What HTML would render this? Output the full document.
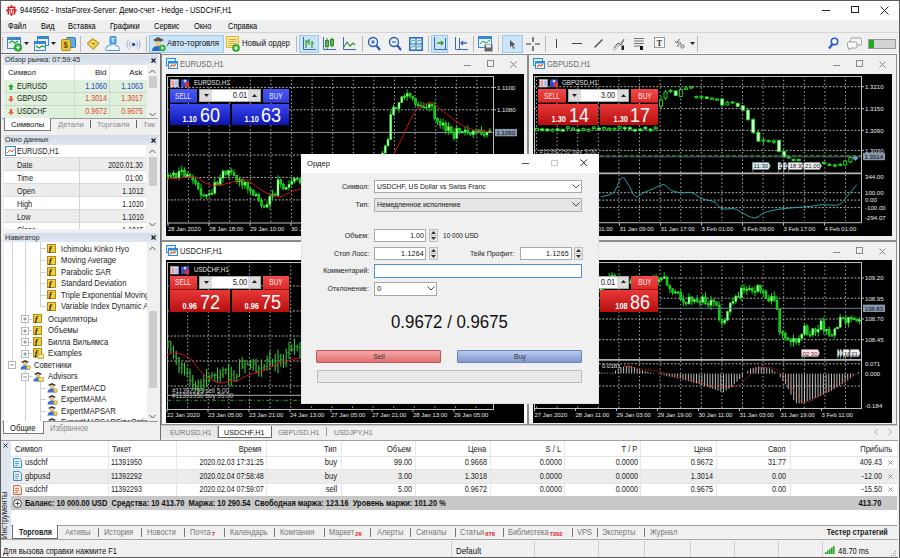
<!DOCTYPE html>
<html><head><meta charset="utf-8">
<style>
*{box-sizing:border-box;margin:0;padding:0}
html,body{width:900px;height:558px;overflow:hidden;background:#f0f0f0;font-family:"Liberation Sans",sans-serif;font-size:8px;color:#000;position:relative}
.a{position:absolute}
.t{position:absolute;white-space:nowrap;line-height:1}
</style></head><body>
<div class="a" style="left:0px;top:0px;width:900px;height:558px;background:#f0f0f0;"></div>
<div class="a" style="left:0px;top:0px;width:900px;height:20px;background:#ffffff;border-top:1px solid #5a5a5a;"></div>
<div class="a" style="left:0px;top:0px;width:1px;height:558px;background:#5a5a5a;"></div>
<div class="a" style="left:899px;top:0px;width:1px;height:558px;background:#5a5a5a;"></div>
<svg class="a" style="left:6px;top:5px;" width="11" height="11" viewBox="0 0 11 11"><circle cx="5.5" cy="5.5" r="4.3" fill="#d81e1e"/><g stroke="#d81e1e" stroke-width="1.6"><line x1="5.5" y1="5.5" x2="10.80" y2="5.50"/><line x1="5.5" y1="5.5" x2="9.25" y2="9.25"/><line x1="5.5" y1="5.5" x2="5.50" y2="10.80"/><line x1="5.5" y1="5.5" x2="1.75" y2="9.25"/><line x1="5.5" y1="5.5" x2="0.20" y2="5.50"/><line x1="5.5" y1="5.5" x2="1.75" y2="1.75"/><line x1="5.5" y1="5.5" x2="5.50" y2="0.20"/><line x1="5.5" y1="5.5" x2="9.25" y2="1.75"/></g><path d="M3.2 3.6h4.6M5.5 3.6v4.6M3.8 5v4M7.2 5v4" stroke="#fff" stroke-width="1"/></svg>
<div class="t" style="top:6.18px;font-size:8.6px;color:#000;left:20px;transform:scaleX(0.865);transform-origin:0 0;">9449562 - InstaForex-Server: Демо-счет - Hedge - USDCHF,H1</div>
<div class="a" style="left:822px;top:10px;width:8px;height:1px;background:#222;"></div>
<div class="a" style="left:851px;top:6px;width:8px;height:7px;border:1px solid #222;"></div>
<svg class="a" style="left:880px;top:6px;" width="9" height="9" viewBox="0 0 9 9"><path d="M0.5 0.5L8.5 8.5M8.5 0.5L0.5 8.5" stroke="#222" stroke-width="1"/></svg>
<div class="a" style="left:1px;top:20px;width:897px;height:13px;background:#efefef;"></div>
<div class="t" style="top:22.71px;font-size:8.2px;color:#000;left:8px;transform:scaleX(0.91);transform-origin:0 0;">Файл</div>
<div class="t" style="top:22.71px;font-size:8.2px;color:#000;left:40.5px;transform:scaleX(0.91);transform-origin:0 0;">Вид</div>
<div class="t" style="top:22.71px;font-size:8.2px;color:#000;left:67.5px;transform:scaleX(0.91);transform-origin:0 0;">Вставка</div>
<div class="t" style="top:22.71px;font-size:8.2px;color:#000;left:110px;transform:scaleX(0.91);transform-origin:0 0;">Графики</div>
<div class="t" style="top:22.71px;font-size:8.2px;color:#000;left:154px;transform:scaleX(0.91);transform-origin:0 0;">Сервис</div>
<div class="t" style="top:22.71px;font-size:8.2px;color:#000;left:194px;transform:scaleX(0.91);transform-origin:0 0;">Окно</div>
<div class="t" style="top:22.71px;font-size:8.2px;color:#000;left:227.5px;transform:scaleX(0.91);transform-origin:0 0;">Справка</div>
<div class="a" style="left:1px;top:32px;width:897px;height:1px;background:#d5d5d5;"></div>
<div class="a" style="left:1px;top:33px;width:897px;height:20px;background:#f0f0f0;"></div>
<div class="a" style="left:1px;top:53px;width:897px;height:1px;background:#6e6e6e;"></div>
<div class="a" style="left:2px;top:37px;width:1px;height:1px;background:#a0a0a0;"></div>
<div class="a" style="left:2px;top:39px;width:1px;height:1px;background:#a0a0a0;"></div>
<div class="a" style="left:2px;top:41px;width:1px;height:1px;background:#a0a0a0;"></div>
<div class="a" style="left:2px;top:43px;width:1px;height:1px;background:#a0a0a0;"></div>
<div class="a" style="left:2px;top:45px;width:1px;height:1px;background:#a0a0a0;"></div>
<div class="a" style="left:2px;top:47px;width:1px;height:1px;background:#a0a0a0;"></div>
<div class="a" style="left:2px;top:49px;width:1px;height:1px;background:#a0a0a0;"></div>
<div class="a" style="left:80px;top:36px;width:1px;height:16px;background:#b8b8b8;"></div>
<div class="a" style="left:146px;top:36px;width:1px;height:16px;background:#b8b8b8;"></div>
<div class="a" style="left:296px;top:36px;width:1px;height:16px;background:#b8b8b8;"></div>
<div class="a" style="left:362px;top:36px;width:1px;height:16px;background:#b8b8b8;"></div>
<div class="a" style="left:428px;top:36px;width:1px;height:16px;background:#b8b8b8;"></div>
<div class="a" style="left:473px;top:36px;width:1px;height:16px;background:#b8b8b8;"></div>
<div class="a" style="left:545px;top:36px;width:1px;height:16px;background:#b8b8b8;"></div>
<div class="a" style="left:697px;top:36px;width:1px;height:16px;background:#b8b8b8;"></div>
<div class="a" style="left:498px;top:36px;width:1px;height:1px;background:#a0a0a0;"></div>
<div class="a" style="left:498px;top:38px;width:1px;height:1px;background:#a0a0a0;"></div>
<div class="a" style="left:498px;top:40px;width:1px;height:1px;background:#a0a0a0;"></div>
<div class="a" style="left:498px;top:42px;width:1px;height:1px;background:#a0a0a0;"></div>
<div class="a" style="left:498px;top:44px;width:1px;height:1px;background:#a0a0a0;"></div>
<div class="a" style="left:498px;top:46px;width:1px;height:1px;background:#a0a0a0;"></div>
<div class="a" style="left:498px;top:48px;width:1px;height:1px;background:#a0a0a0;"></div>
<div class="a" style="left:498px;top:50px;width:1px;height:1px;background:#a0a0a0;"></div>
<div class="a" style="left:149px;top:35px;width:75px;height:18px;background:#cce4f7;border:1px solid #99c9ef;"></div>
<div class="a" style="left:299px;top:35px;width:20px;height:18px;background:#cce4f7;border:1px solid #99c9ef;"></div>
<div class="a" style="left:431px;top:35px;width:17px;height:18px;background:#cce4f7;border:1px solid #99c9ef;"></div>
<div class="a" style="left:502px;top:35px;width:21px;height:18px;background:#cce4f7;border:1px solid #99c9ef;"></div>
<svg class="a" style="left:7px;top:36px;" width="17" height="16" viewBox="0 0 17 16"><rect x="0.5" y="1.5" width="13" height="11" fill="#e8f2fb" stroke="#3a86d0"/><rect x="0.5" y="1.5" width="13" height="2.5" fill="#3a86d0"/><path d="M2 7l3-2 3 2 3-2" stroke="#2aa02a" fill="none" stroke-width="1.2"/><circle cx="11" cy="11.5" r="3.8" fill="#2db52d" stroke="#1e8a1e" stroke-width=".6"/><path d="M9 11.5h4M11 9.5v4" stroke="#fff" stroke-width="1.2"/></svg>
<svg class="a" style="left:24px;top:42px;" width="6" height="3" viewBox="0 0 6 3"><path d="M0 0h5l-2.5 3z" fill="#222"/></svg>
<svg class="a" style="left:34px;top:36px;" width="16" height="16" viewBox="0 0 16 16"><rect x="3.5" y="0.5" width="11" height="9" fill="#e8f2fb" stroke="#3a86d0"/><rect x="3.5" y="0.5" width="11" height="2.5" fill="#3a86d0"/><rect x="0.5" y="5.5" width="11" height="9" fill="#e8f2fb" stroke="#3a86d0"/><rect x="0.5" y="5.5" width="11" height="2.5" fill="#3a86d0"/><path d="M2 10l3 2 3-2 3 1" stroke="#2aa02a" fill="none" stroke-width="1.2"/></svg>
<svg class="a" style="left:51px;top:42px;" width="6" height="3" viewBox="0 0 6 3"><path d="M0 0h5l-2.5 3z" fill="#222"/></svg>
<svg class="a" style="left:61px;top:36px;" width="15" height="16" viewBox="0 0 15 16"><rect x="5.5" y="1.5" width="9" height="10" rx="1" fill="#5aaee8" stroke="#2a78c0"/><rect x="0.5" y="3.5" width="9" height="11" rx="1.5" fill="#f4c838" stroke="#b88a10"/><text x="2.2" y="12.3" font-size="8.5" font-weight="bold" fill="#6a4a00" font-family="Liberation Sans">$</text></svg>
<svg class="a" style="left:86px;top:37px;" width="14" height="14" viewBox="0 0 14 14"><path d="M1 6.5L6.5 1.5 13 6 7.5 12.5z" fill="#e8c030" stroke="#a07a10" stroke-width=".8"/><path d="M3 7l4-3.5 4 2.8-4 4z" fill="#f8e070"/><path d="M5.5 6.5h3l-1 1.5" stroke="#8a6a00" stroke-width=".9" fill="none"/></svg>
<svg class="a" style="left:105px;top:36px;" width="16" height="16" viewBox="0 0 16 16"><rect x="5" y="0.5" width="6" height="7.5" rx="1" fill="#5ab0f0" stroke="#2a78c8" stroke-width=".8"/><path d="M6.5 2.5h3M8 2.5v4" stroke="#fff" stroke-width=".8"/><path d="M1.5 14.5c-1.5 0-1.5-3 .5-3.3.3-2 2.5-2.7 3.8-1.7 1-2 4.5-2 5.2.3 2-.3 3.5 1.3 3 3 1.2.4 1 1.7 0 1.7z" fill="#eef6fd" stroke="#3a8ad8" stroke-width=".9"/></svg>
<svg class="a" style="left:126px;top:37px;" width="15" height="15" viewBox="0 0 15 15"><g fill="none" stroke="#8aa8e0" stroke-width=".9"><path d="M3 2.5a7 7 0 000 10M12 2.5a7 7 0 010 10"/><path d="M4.8 4.5a4 4 0 000 6M10.2 4.5a4 4 0 010 6"/></g><circle cx="7.5" cy="7.5" r="1.8" fill="#2a5ad0"/></svg>
<svg class="a" style="left:151px;top:36px;" width="15" height="16" viewBox="0 0 15 16"><path d="M2 4l5-3 6 3-6 3z" fill="#555"/><circle cx="7" cy="8" r="3" fill="#f0c890"/><path d="M1 15c0-4 3-5 6-5s5 1 6 5z" fill="#2a6ad0"/><circle cx="11.5" cy="12" r="3.3" fill="#2ab52a"/><path d="M10.5 10.3l2.8 1.7-2.8 1.7z" fill="#fff"/></svg>
<div class="t" style="top:40.41px;font-size:8.2px;color:#111;left:167px;transform:scaleX(0.96);transform-origin:0 0;">Авто-торговля</div>
<svg class="a" style="left:226px;top:36px;" width="15" height="16" viewBox="0 0 15 16"><rect x="0.5" y="0.5" width="12" height="11" fill="#fbe9a0" stroke="#d9b640"/><path d="M2.5 3.5h8M2.5 5.5h8M2.5 7.5h8M2.5 9.5h6" stroke="#c8a030" stroke-width=".8"/><circle cx="10" cy="12" r="3.6" fill="#2ab52a" stroke="#1e8a1e" stroke-width=".5"/><path d="M8 12h4M10 10v4" stroke="#fff" stroke-width="1.2"/></svg>
<div class="t" style="top:40.41px;font-size:8.2px;color:#111;left:242px;transform:scaleX(0.95);transform-origin:0 0;">Новый ордер</div>
<svg class="a" style="left:302px;top:37px;" width="14" height="14" viewBox="0 0 14 14"><path d="M1.5 0v12.5H14" stroke="#3a6ac0" stroke-width="1" fill="none"/><path d="M4 3v8M4 5h2M7 2v6M7 4h-2M10 4v7M10 6h2" stroke="#2a9a2a" stroke-width="1.2"/></svg>
<svg class="a" style="left:322px;top:37px;" width="14" height="14" viewBox="0 0 14 14"><path d="M1.5 0v12.5H14" stroke="#3a6ac0" stroke-width="1" fill="none"/><rect x="3.5" y="3.5" width="3" height="6" fill="#8fd88f" stroke="#2a8a2a"/><rect x="8.5" y="2.5" width="3" height="6" fill="#8fd88f" stroke="#2a8a2a"/><path d="M5 1v12M10 0.5v10" stroke="#2a8a2a"/></svg>
<svg class="a" style="left:342px;top:37px;" width="14" height="14" viewBox="0 0 14 14"><path d="M1.5 0v12.5H14" stroke="#3a6ac0" stroke-width="1" fill="none"/><path d="M2 10l3-5 3 4 3-3 2 2" stroke="#2a9a2a" stroke-width="1.2" fill="none"/></svg>
<svg class="a" style="left:367px;top:36px;" width="14" height="16" viewBox="0 0 14 16"><circle cx="6" cy="6" r="4.5" fill="#eaf3fc" stroke="#2a5ab0" stroke-width="1.3"/><path d="M9 9l4 5" stroke="#2a5ab0" stroke-width="2.2"/><path d="M4 6h4M6 4v4" stroke="#2a5ab0" stroke-width="1.1"/></svg>
<svg class="a" style="left:388px;top:36px;" width="14" height="16" viewBox="0 0 14 16"><circle cx="6" cy="6" r="4.5" fill="#eaf3fc" stroke="#2a5ab0" stroke-width="1.3"/><path d="M9 9l4 5" stroke="#2a5ab0" stroke-width="2.2"/><path d="M4 6h4" stroke="#2a5ab0" stroke-width="1.1"/></svg>
<svg class="a" style="left:409px;top:37px;" width="14" height="14" viewBox="0 0 14 14"><rect x="0" y="0" width="14" height="14" fill="#2a6ac8"/><rect x="1.5" y="1.5" width="5" height="5" fill="#d8ecfc"/><rect x="7.5" y="1.5" width="5" height="5" fill="#d8ecfc"/><rect x="1.5" y="7.5" width="5" height="5" fill="#d8ecfc"/><rect x="7.5" y="7.5" width="5" height="5" fill="#d8ecfc"/><path d="M2 5l2-2 2 1M8 5l2-2 2 1M2 11l2-2 2 1M8 11l2-2 2 1" stroke="#2a9a2a" stroke-width=".8" fill="none"/></svg>
<svg class="a" style="left:433px;top:37px;" width="14" height="14" viewBox="0 0 14 14"><path d="M1.5 0v12.5H14M12.5 1v11" stroke="#3a6ac0" stroke-width="1" fill="none"/><path d="M4 6h6M8 4l2 2-2 2" stroke="#2a9a2a" stroke-width="1.3" fill="none"/></svg>
<svg class="a" style="left:454px;top:37px;" width="14" height="14" viewBox="0 0 14 14"><path d="M1.5 0v12.5H14M5.5 1v11" stroke="#3a6ac0" stroke-width="1" fill="none"/><path d="M7 6h6M9 4l-2 2 2 2" stroke="#3a6ac0" stroke-width="1.3" fill="none"/></svg>
<svg class="a" style="left:478px;top:36px;" width="15" height="16" viewBox="0 0 15 16"><rect x="0.5" y="0.5" width="13" height="11" fill="#e8f2fb" stroke="#3a86d0"/><rect x="0.5" y="0.5" width="13" height="2.5" fill="#3a86d0"/><path d="M2 8l3-3 3 2 4-3" stroke="#2a9a2a" fill="none"/><rect x="6.5" y="8.5" width="8" height="7" fill="#666"/><rect x="8" y="9" width="5" height="2.5" fill="#eee"/></svg>
<svg class="a" style="left:508px;top:38px;" width="10" height="12" viewBox="0 0 10 12"><path d="M2 2l5.5 5h-2.5l1.7 3.3-1.2.6-1.7-3.4L2 9.3z" fill="#555"/></svg>
<svg class="a" style="left:526px;top:37px;" width="14" height="14" viewBox="0 0 14 14"><path d="M7 0v5M7 9v5M0 7h5M9 7h5" stroke="#333" stroke-width="1.2"/></svg>
<div class="a" style="left:556px;top:39px;width:1.2px;height:9px;background:#444;"></div>
<div class="a" style="left:572px;top:43px;width:10px;height:1.2px;background:#444;"></div>
<svg class="a" style="left:593px;top:38px;" width="11" height="11" viewBox="0 0 11 11"><path d="M1.5 9.5L9.5 1.5" stroke="#444" stroke-width="1.2"/></svg>
<svg class="a" style="left:612px;top:37px;" width="14" height="14" viewBox="0 0 14 14"><path d="M2 11l4-5 3 2 3-6" stroke="#444" stroke-width=".9" fill="none"/><path d="M1 13l10-10M3 13l9-9" stroke="#555" stroke-width=".7" stroke-dasharray="1 1"/><rect x="9.5" y="8.5" width="2.5" height="4.5" fill="#222"/></svg>
<svg class="a" style="left:634px;top:37px;" width="12" height="13" viewBox="0 0 12 13"><path d="M0 1.5h10M0 4h10M0 6.5h10M0 9h7" stroke="#666" stroke-width=".9"/><rect x="6" y="9" width="3" height="4" fill="#111"/></svg>
<svg class="a" style="left:654px;top:37px;" width="12" height="12" viewBox="0 0 12 12"><rect x="0.5" y="0.5" width="10" height="10" fill="#fafafa" stroke="#999"/><text x="2.6" y="8.8" font-size="8.5" font-weight="bold" fill="#333" font-family="Liberation Serif">T</text></svg>
<svg class="a" style="left:674px;top:38px;" width="12" height="12" viewBox="0 0 12 12"><path d="M1 3l1.5 2 3-4M3 7l1.5 2" stroke="#444" stroke-width=".9" fill="none"/><circle cx="8.5" cy="8.5" r="1.6" fill="none" stroke="#444" stroke-width=".8"/><circle cx="5.5" cy="5.5" r="1.2" fill="none" stroke="#444" stroke-width=".8"/></svg>
<svg class="a" style="left:690px;top:42px;" width="6" height="3" viewBox="0 0 6 3"><path d="M0 0h5l-2.5 3z" fill="#222"/></svg>
<svg class="a" style="left:828px;top:37px;" width="11" height="13" viewBox="0 0 11 13"><circle cx="6.5" cy="4.5" r="3.2" fill="#fff" stroke="#2a5ad0" stroke-width="1.5"/><path d="M4.5 7l-3.5 4.5" stroke="#2a5ad0" stroke-width="2.2"/></svg>
<svg class="a" style="left:847px;top:37px;" width="15" height="13" viewBox="0 0 15 13"><path d="M5 1h8a1.5 1.5 0 011.5 1.5v4a1.5 1.5 0 01-1.5 1.5H10l-2 2V8H5A1.5 1.5 0 013.5 6.5v-4A1.5 1.5 0 015 1z" fill="#f4f4f4" stroke="#888" stroke-width=".8"/><path d="M1.5 5h7a1.5 1.5 0 011.5 1.5v3a1.5 1.5 0 01-1.5 1.5H4l-2 2v-2A1.5 1.5 0 01.5 9.5v-3A1.5 1.5 0 011.5 5z" fill="#f8f8f8" stroke="#888" stroke-width=".8"/></svg>
<div class="a" style="left:868px;top:39px;width:28px;height:10px;background:#d3d3d3;border:1px solid #9a9a9a;"></div>
<div class="a" style="left:869px;top:40px;width:5px;height:8px;background:#1eaa1e;"></div>
<div class="a" style="left:1px;top:54px;width:159px;height:387px;background:#f0f0f0;"></div>
<div class="a" style="left:3.5px;top:55px;width:154.5px;height:9.5px;background:linear-gradient(#d3dde9,#dfe7f0);"></div>
<div class="t" style="top:56.27px;font-size:8px;color:#2a2a2a;left:4.5px;transform:scaleX(0.9);transform-origin:0 0;">Обзор рынка: 07:59:45</div>
<svg class="a" style="left:151px;top:57.5px;" width="5" height="5" viewBox="0 0 5 5"><path d="M.5 .5l4 4M4.5 .5l-4 4" stroke="#111" stroke-width="1.1"/></svg>
<div class="a" style="left:4px;top:64px;width:154px;height:54px;background:#ffffff;"></div>
<div class="a" style="left:3px;top:64px;width:144px;height:1px;background:#e4e4e4;"></div>
<div class="t" style="top:68.82px;font-size:8px;color:#222;left:7.5px;transform:scaleX(0.97);transform-origin:0 0;">Символ</div>
<div class="t" style="top:68.82px;font-size:8px;color:#222;right:793.5px;">Bid</div>
<div class="t" style="top:68.82px;font-size:8px;color:#222;right:757.5px;">Ask</div>
<div class="a" style="left:73.5px;top:65px;width:1px;height:15px;background:#e8e8e8;"></div>
<div class="a" style="left:109px;top:65px;width:1px;height:15px;background:#e8e8e8;"></div>
<div class="a" style="left:4px;top:79.5px;width:143px;height:12.9px;background:#dff1dc;"></div>
<svg class="a" style="left:8px;top:83.5px;" width="6" height="6" viewBox="0 0 6 6"><path d="M3 0L6 3H4.2V6H1.8V3H0z" fill="#2aa52a"/></svg>
<div class="t" style="top:82.51px;font-size:8.2px;color:#1a1a1a;left:17px;transform:scaleX(0.87);transform-origin:0 0;">EURUSD</div>
<div class="t" style="top:82.51px;font-size:8.2px;color:#2b3fd0;right:793px;transform:scaleX(0.87);transform-origin:100% 0;">1.1060</div>
<div class="t" style="top:82.51px;font-size:8.2px;color:#2b3fd0;right:757px;transform:scaleX(0.87);transform-origin:100% 0;">1.1063</div>
<div class="a" style="left:4px;top:92.4px;width:143px;height:12.9px;background:#dff1dc;"></div>
<svg class="a" style="left:8px;top:95.9px;" width="6" height="6" viewBox="0 0 6 6"><path d="M3 6L6 3H4.2V0H1.8V3H0z" fill="#e8603a"/></svg>
<div class="t" style="top:95.41px;font-size:8.2px;color:#1a1a1a;left:17px;transform:scaleX(0.87);transform-origin:0 0;">GBPUSD</div>
<div class="t" style="top:95.41px;font-size:8.2px;color:#e8452e;right:793px;transform:scaleX(0.87);transform-origin:100% 0;">1.3014</div>
<div class="t" style="top:95.41px;font-size:8.2px;color:#e8452e;right:757px;transform:scaleX(0.87);transform-origin:100% 0;">1.3017</div>
<div class="a" style="left:4px;top:105.3px;width:143px;height:12.9px;background:#dff1dc;"></div>
<svg class="a" style="left:8px;top:108.8px;" width="6" height="6" viewBox="0 0 6 6"><path d="M3 6L6 3H4.2V0H1.8V3H0z" fill="#e8603a"/></svg>
<div class="t" style="top:108.31px;font-size:8.2px;color:#1a1a1a;left:17px;transform:scaleX(0.87);transform-origin:0 0;">USDCHF</div>
<div class="t" style="top:108.31px;font-size:8.2px;color:#e8452e;right:793px;transform:scaleX(0.87);transform-origin:100% 0;">0.9672</div>
<div class="t" style="top:108.31px;font-size:8.2px;color:#e8452e;right:757px;transform:scaleX(0.87);transform-origin:100% 0;">0.9675</div>
<div class="a" style="left:73.5px;top:80px;width:1px;height:38px;background:#cfdccc;"></div>
<div class="a" style="left:109px;top:80px;width:1px;height:38px;background:#cfdccc;"></div>
<div class="a" style="left:4px;top:91.80000000000001px;width:143px;height:0.9px;background:#c8d4c8;"></div>
<div class="a" style="left:4px;top:104.7px;width:143px;height:0.9px;background:#c8d4c8;"></div>
<div class="a" style="left:147px;top:64px;width:11px;height:54px;background:#f0f0f0;"></div>
<svg class="a" style="left:148.5px;top:69px;" width="7" height="5" viewBox="0 0 7 5"><path d="M.5 4l3-3 3 3" stroke="#555" stroke-width="1" fill="none"/></svg>
<div class="a" style="left:148.5px;top:76px;width:8px;height:12px;background:#cdcdcd;"></div>
<svg class="a" style="left:148.5px;top:112px;" width="7" height="5" viewBox="0 0 7 5"><path d="M.5 1l3 3 3-3" stroke="#555" stroke-width="1" fill="none"/></svg>
<div class="a" style="left:2px;top:117.5px;width:156px;height:13px;background:#f0f0f0;"></div>
<div class="a" style="left:2px;top:117.5px;width:156px;height:1px;background:#9a9a9a;"></div>
<div class="a" style="left:4px;top:117.5px;width:47px;height:13px;background:#ffffff;border:1px solid #7a7a7a;border-top:none;"></div>
<div class="t" style="top:120.52px;font-size:8px;color:#111;left:10.5px;transform:scaleX(0.96);transform-origin:0 0;">Символы</div>
<div class="t" style="top:120.52px;font-size:8px;color:#8a8a8a;left:58px;transform:scaleX(0.96);transform-origin:0 0;">Детали</div>
<div class="a" style="left:90px;top:120px;width:1px;height:8px;background:#666;"></div>
<div class="t" style="top:120.52px;font-size:8px;color:#8a8a8a;left:96.5px;transform:scaleX(0.97);transform-origin:0 0;">Торговля</div>
<div class="a" style="left:136px;top:120px;width:1px;height:8px;background:#666;"></div>
<div class="t" style="top:120.52px;font-size:8px;color:#8a8a8a;left:142.5px;transform:scaleX(0.97);transform-origin:0 0;">Тик</div>
<div class="a" style="left:3.5px;top:135px;width:154.5px;height:9.5px;background:linear-gradient(#d3dde9,#dfe7f0);"></div>
<div class="t" style="top:136.27px;font-size:8px;color:#2a2a2a;left:4.5px;transform:scaleX(0.9);transform-origin:0 0;">Окно данных</div>
<svg class="a" style="left:151px;top:137.5px;" width="5" height="5" viewBox="0 0 5 5"><path d="M.5 .5l4 4M4.5 .5l-4 4" stroke="#111" stroke-width="1.1"/></svg>
<div class="a" style="left:4px;top:144.5px;width:154px;height:84.1px;background:#ffffff;"></div>
<svg class="a" style="left:4.5px;top:146px;" width="11" height="10" viewBox="0 0 11 10"><rect x="0.5" y="0.5" width="10" height="9" fill="#fff" stroke="#3a86d0"/><path d="M2 7l3-3 2 2 2-3" stroke="#e05a2a" fill="none" stroke-width="1"/></svg>
<div class="t" style="top:147.38px;font-size:8.6px;color:#222;left:17px;transform:scaleX(0.84);transform-origin:0 0;">EURUSD,H1</div>
<div class="a" style="left:4px;top:157px;width:142px;height:13px;background:#ececec;"></div>
<div class="a" style="left:3px;top:157px;width:143px;height:0.7px;background:#dcdcdc;"></div>
<div class="a" style="left:4px;top:170px;width:142px;height:13px;background:#ffffff;"></div>
<div class="a" style="left:3px;top:170px;width:143px;height:0.7px;background:#dcdcdc;"></div>
<div class="a" style="left:4px;top:183px;width:142px;height:13px;background:#ececec;"></div>
<div class="a" style="left:3px;top:183px;width:143px;height:0.7px;background:#dcdcdc;"></div>
<div class="a" style="left:4px;top:196px;width:142px;height:13px;background:#ffffff;"></div>
<div class="a" style="left:3px;top:196px;width:143px;height:0.7px;background:#dcdcdc;"></div>
<div class="a" style="left:4px;top:209px;width:142px;height:13px;background:#ececec;"></div>
<div class="a" style="left:3px;top:209px;width:143px;height:0.7px;background:#dcdcdc;"></div>
<div class="a" style="left:4px;top:222px;width:142px;height:6.599999999999994px;background:#ffffff;"></div>
<div class="a" style="left:3px;top:222px;width:143px;height:0.7px;background:#dcdcdc;"></div>
<div class="a" style="left:3px;top:157px;width:143px;height:71.6px;overflow:hidden">
<div class="t" style="left:14px;top:4.2px;font-size:8.4px;color:#222;transform:scaleX(.88);transform-origin:0 0">Date</div>
<div class="t" style="right:2.7px;top:4.2px;font-size:8.4px;color:#222;transform:scaleX(.83);transform-origin:100% 0">2020.01.30</div>
<div class="t" style="left:14px;top:17.2px;font-size:8.4px;color:#222;transform:scaleX(.88);transform-origin:0 0">Time</div>
<div class="t" style="right:2.7px;top:17.2px;font-size:8.4px;color:#222;transform:scaleX(.83);transform-origin:100% 0">01:00</div>
<div class="t" style="left:14px;top:30.2px;font-size:8.4px;color:#222;transform:scaleX(.88);transform-origin:0 0">Open</div>
<div class="t" style="right:2.7px;top:30.2px;font-size:8.4px;color:#222;transform:scaleX(.83);transform-origin:100% 0">1.1012</div>
<div class="t" style="left:14px;top:43.2px;font-size:8.4px;color:#222;transform:scaleX(.88);transform-origin:0 0">High</div>
<div class="t" style="right:2.7px;top:43.2px;font-size:8.4px;color:#222;transform:scaleX(.83);transform-origin:100% 0">1.1020</div>
<div class="t" style="left:14px;top:56.2px;font-size:8.4px;color:#222;transform:scaleX(.88);transform-origin:0 0">Low</div>
<div class="t" style="right:2.7px;top:56.2px;font-size:8.4px;color:#222;transform:scaleX(.83);transform-origin:100% 0">1.1010</div>
<div class="t" style="left:14px;top:69.2px;font-size:8.4px;color:#222;transform:scaleX(.88);transform-origin:0 0">Close</div>
<div class="t" style="right:2.7px;top:69.2px;font-size:8.4px;color:#222;transform:scaleX(.83);transform-origin:100% 0">1.1015</div>
</div>
<div class="a" style="left:79px;top:157px;width:1px;height:71.6px;background:#d4d4d4;"></div>
<div class="a" style="left:146px;top:144.5px;width:12px;height:84.1px;background:#f0f0f0;"></div>
<svg class="a" style="left:148.5px;top:149px;" width="7" height="5" viewBox="0 0 7 5"><path d="M.5 4l3-3 3 3" stroke="#555" stroke-width="1" fill="none"/></svg>
<div class="a" style="left:148.5px;top:157px;width:8px;height:29px;background:#cdcdcd;"></div>
<svg class="a" style="left:148.5px;top:222px;" width="7" height="5" viewBox="0 0 7 5"><path d="M.5 1l3 3 3-3" stroke="#555" stroke-width="1" fill="none"/></svg>
<div class="a" style="left:3.5px;top:232.5px;width:154.5px;height:9.5px;background:linear-gradient(#d3dde9,#dfe7f0);"></div>
<div class="t" style="top:233.77px;font-size:8px;color:#2a2a2a;left:4.5px;transform:scaleX(0.9);transform-origin:0 0;">Навигатор</div>
<svg class="a" style="left:151px;top:235.0px;" width="5" height="5" viewBox="0 0 5 5"><path d="M.5 .5l4 4M4.5 .5l-4 4" stroke="#111" stroke-width="1.1"/></svg>
<div class="a" style="left:4px;top:242px;width:154px;height:179px;background:#ffffff;"></div>
<div class="a" style="left:3px;top:242px;width:144px;height:179px;overflow:hidden">
<div class="a" style="left:8.5px;top:0px;width:1px;height:122px;background:#d0d0d0"></div>
<div class="a" style="left:21.5px;top:0px;width:1px;height:111px;background:#d0d0d0"></div>
<div class="a" style="left:37px;top:0px;width:1px;height:64px;background:#d0d0d0"></div>
<div class="a" style="left:22px;top:128px;width:1px;height:51px;background:#d0d0d0"></div>
<div class="a" style="left:37px;top:139px;width:1px;height:40px;background:#d0d0d0"></div>
<div class="a" style="left:37px;top:6.4px;width:6px;height:1px;background:#d0d0d0"></div>
<svg class="a" style="left:44px;top:1.9px" width="9" height="9"><rect x="0.5" y="0.5" width="8" height="8" fill="#f5cf3a" stroke="#b08a10"/><text x="1.8" y="7.8" font-size="8.5" font-weight="bold" font-style="italic" fill="#1a1a1a" font-family="Liberation Serif">f</text></svg>
<div class="t" style="left:58px;top:2.8px;font-size:8.6px;color:#222;transform:scaleX(.895);transform-origin:0 0">Ichimoku Kinko Hyo</div>
<div class="a" style="left:37px;top:18.0px;width:6px;height:1px;background:#d0d0d0"></div>
<svg class="a" style="left:44px;top:13.5px" width="9" height="9"><rect x="0.5" y="0.5" width="8" height="8" fill="#f5cf3a" stroke="#b08a10"/><text x="1.8" y="7.8" font-size="8.5" font-weight="bold" font-style="italic" fill="#1a1a1a" font-family="Liberation Serif">f</text></svg>
<div class="t" style="left:58px;top:14.4px;font-size:8.6px;color:#222;transform:scaleX(.895);transform-origin:0 0">Moving Average</div>
<div class="a" style="left:37px;top:29.5px;width:6px;height:1px;background:#d0d0d0"></div>
<svg class="a" style="left:44px;top:25.0px" width="9" height="9"><rect x="0.5" y="0.5" width="8" height="8" fill="#f5cf3a" stroke="#b08a10"/><text x="1.8" y="7.8" font-size="8.5" font-weight="bold" font-style="italic" fill="#1a1a1a" font-family="Liberation Serif">f</text></svg>
<div class="t" style="left:58px;top:25.9px;font-size:8.6px;color:#222;transform:scaleX(.895);transform-origin:0 0">Parabolic SAR</div>
<div class="a" style="left:37px;top:41.0px;width:6px;height:1px;background:#d0d0d0"></div>
<svg class="a" style="left:44px;top:36.5px" width="9" height="9"><rect x="0.5" y="0.5" width="8" height="8" fill="#f5cf3a" stroke="#b08a10"/><text x="1.8" y="7.8" font-size="8.5" font-weight="bold" font-style="italic" fill="#1a1a1a" font-family="Liberation Serif">f</text></svg>
<div class="t" style="left:58px;top:37.4px;font-size:8.6px;color:#222;transform:scaleX(.895);transform-origin:0 0">Standard Deviation</div>
<div class="a" style="left:37px;top:52.5px;width:6px;height:1px;background:#d0d0d0"></div>
<svg class="a" style="left:44px;top:48.0px" width="9" height="9"><rect x="0.5" y="0.5" width="8" height="8" fill="#f5cf3a" stroke="#b08a10"/><text x="1.8" y="7.8" font-size="8.5" font-weight="bold" font-style="italic" fill="#1a1a1a" font-family="Liberation Serif">f</text></svg>
<div class="t" style="left:58px;top:48.9px;font-size:8.6px;color:#222;transform:scaleX(.895);transform-origin:0 0">Triple Exponential Moving Average</div>
<div class="a" style="left:37px;top:64.0px;width:6px;height:1px;background:#d0d0d0"></div>
<svg class="a" style="left:44px;top:59.5px" width="9" height="9"><rect x="0.5" y="0.5" width="8" height="8" fill="#f5cf3a" stroke="#b08a10"/><text x="1.8" y="7.8" font-size="8.5" font-weight="bold" font-style="italic" fill="#1a1a1a" font-family="Liberation Serif">f</text></svg>
<div class="t" style="left:58px;top:60.4px;font-size:8.6px;color:#222;transform:scaleX(.895);transform-origin:0 0">Variable Index Dynamic Average</div>
<div class="a" style="left:21.5px;top:76.5px;width:7.5px;height:1px;background:#d0d0d0"></div>
<svg class="a" style="left:30px;top:72.0px" width="9" height="9"><rect x="0.5" y="0.5" width="8" height="8" fill="#f5cf3a" stroke="#b08a10"/><text x="1.8" y="7.8" font-size="8.5" font-weight="bold" font-style="italic" fill="#1a1a1a" font-family="Liberation Serif">f</text></svg>
<div class="t" style="left:44.5px;top:72.9px;font-size:8.6px;color:#222;transform:scaleX(.895);transform-origin:0 0">Осцилляторы</div>
<svg class="a" style="left:18px;top:73.0px" width="8" height="8"><rect x="0.5" y="0.5" width="7" height="7" fill="#fff" stroke="#b8b8b8"/><path d="M2.2 4h3.6M4 2.2v3.6" stroke="#5a6a8a" stroke-width=".8"/></svg>
<div class="a" style="left:21.5px;top:88.0px;width:7.5px;height:1px;background:#d0d0d0"></div>
<svg class="a" style="left:30px;top:83.5px" width="9" height="9"><rect x="0.5" y="0.5" width="8" height="8" fill="#f5cf3a" stroke="#b08a10"/><text x="1.8" y="7.8" font-size="8.5" font-weight="bold" font-style="italic" fill="#1a1a1a" font-family="Liberation Serif">f</text></svg>
<div class="t" style="left:44.5px;top:84.4px;font-size:8.6px;color:#222;transform:scaleX(.895);transform-origin:0 0">Объемы</div>
<svg class="a" style="left:18px;top:84.5px" width="8" height="8"><rect x="0.5" y="0.5" width="7" height="7" fill="#fff" stroke="#b8b8b8"/><path d="M2.2 4h3.6M4 2.2v3.6" stroke="#5a6a8a" stroke-width=".8"/></svg>
<div class="a" style="left:21.5px;top:99.5px;width:7.5px;height:1px;background:#d0d0d0"></div>
<svg class="a" style="left:30px;top:95.0px" width="9" height="9"><rect x="0.5" y="0.5" width="8" height="8" fill="#f5cf3a" stroke="#b08a10"/><text x="1.8" y="7.8" font-size="8.5" font-weight="bold" font-style="italic" fill="#1a1a1a" font-family="Liberation Serif">f</text></svg>
<div class="t" style="left:44.5px;top:95.9px;font-size:8.6px;color:#222;transform:scaleX(.895);transform-origin:0 0">Билла Вильямса</div>
<svg class="a" style="left:18px;top:96.0px" width="8" height="8"><rect x="0.5" y="0.5" width="7" height="7" fill="#fff" stroke="#b8b8b8"/><path d="M2.2 4h3.6M4 2.2v3.6" stroke="#5a6a8a" stroke-width=".8"/></svg>
<div class="a" style="left:21.5px;top:111.0px;width:7.5px;height:1px;background:#d0d0d0"></div>
<svg class="a" style="left:30px;top:105.5px" width="11" height="11"><rect x="0.5" y="0.5" width="8" height="8" fill="#f5cf3a" stroke="#b08a10"/><text x="1.8" y="7.8" font-size="8.5" font-weight="bold" font-style="italic" fill="#1a1a1a" font-family="Liberation Serif">f</text><rect x="5" y="6" width="5.5" height="4.5" fill="#f7e08a" stroke="#b08a10" stroke-width=".7"/></svg>
<div class="t" style="left:44.5px;top:107.4px;font-size:8.6px;color:#222;transform:scaleX(.895);transform-origin:0 0">Examples</div>
<svg class="a" style="left:18px;top:107.5px" width="8" height="8"><rect x="0.5" y="0.5" width="7" height="7" fill="#fff" stroke="#b8b8b8"/><path d="M2.2 4h3.6M4 2.2v3.6" stroke="#5a6a8a" stroke-width=".8"/></svg>
<svg class="a" style="left:17px;top:117.0px" width="11" height="11"><path d="M1 3l4-2 4 2-4 2z" fill="#333"/><circle cx="5" cy="5" r="2.2" fill="#e8c088"/><path d="M0.5 10.5c0-3 2-4 4.5-4s4.5 1 4.5 4z" fill="#3a70d0"/><circle cx="8.5" cy="8.5" r="2" fill="#f0d060" stroke="#9a7a10" stroke-width=".5"/></svg>
<div class="t" style="left:31px;top:118.9px;font-size:8.6px;color:#222;transform:scaleX(.895);transform-origin:0 0">Советники</div>
<svg class="a" style="left:5px;top:119.0px" width="8" height="8"><rect x="0.5" y="0.5" width="7" height="7" fill="#fff" stroke="#b8b8b8"/><path d="M2.2 4h3.6" stroke="#5a6a8a" stroke-width=".8"/></svg>
<div class="a" style="left:21.5px;top:134.0px;width:7.5px;height:1px;background:#d0d0d0"></div>
<svg class="a" style="left:30px;top:128.5px" width="11" height="11"><path d="M1 3l4-2 4 2-4 2z" fill="#333"/><circle cx="5" cy="5" r="2.2" fill="#e8c088"/><path d="M0.5 10.5c0-3 2-4 4.5-4s4.5 1 4.5 4z" fill="#3a70d0"/><rect x="5.5" y="6.5" width="5" height="4" fill="#f7e08a" stroke="#b08a10" stroke-width=".6"/></svg>
<div class="t" style="left:44.5px;top:130.4px;font-size:8.6px;color:#222;transform:scaleX(.895);transform-origin:0 0">Advisors</div>
<svg class="a" style="left:18px;top:130.5px" width="8" height="8"><rect x="0.5" y="0.5" width="7" height="7" fill="#fff" stroke="#b8b8b8"/><path d="M2.2 4h3.6" stroke="#5a6a8a" stroke-width=".8"/></svg>
<div class="a" style="left:37px;top:145.5px;width:6px;height:1px;background:#d0d0d0"></div>
<svg class="a" style="left:44px;top:140.0px" width="11" height="11"><path d="M1 3l4-2 4 2-4 2z" fill="#333"/><circle cx="5" cy="5" r="2.2" fill="#e8c088"/><path d="M0.5 10.5c0-3 2-4 4.5-4s4.5 1 4.5 4z" fill="#3a70d0"/><circle cx="8.5" cy="8.5" r="2" fill="#f0d060" stroke="#9a7a10" stroke-width=".5"/></svg>
<div class="t" style="left:58px;top:141.9px;font-size:8.6px;color:#222;transform:scaleX(.895);transform-origin:0 0">ExpertMACD</div>
<div class="a" style="left:37px;top:157.0px;width:6px;height:1px;background:#d0d0d0"></div>
<svg class="a" style="left:44px;top:151.5px" width="11" height="11"><path d="M1 3l4-2 4 2-4 2z" fill="#333"/><circle cx="5" cy="5" r="2.2" fill="#e8c088"/><path d="M0.5 10.5c0-3 2-4 4.5-4s4.5 1 4.5 4z" fill="#3a70d0"/><circle cx="8.5" cy="8.5" r="2" fill="#f0d060" stroke="#9a7a10" stroke-width=".5"/></svg>
<div class="t" style="left:58px;top:153.4px;font-size:8.6px;color:#222;transform:scaleX(.895);transform-origin:0 0">ExpertMAMA</div>
<div class="a" style="left:37px;top:168.5px;width:6px;height:1px;background:#d0d0d0"></div>
<svg class="a" style="left:44px;top:163.0px" width="11" height="11"><path d="M1 3l4-2 4 2-4 2z" fill="#333"/><circle cx="5" cy="5" r="2.2" fill="#e8c088"/><path d="M0.5 10.5c0-3 2-4 4.5-4s4.5 1 4.5 4z" fill="#3a70d0"/><circle cx="8.5" cy="8.5" r="2" fill="#f0d060" stroke="#9a7a10" stroke-width=".5"/></svg>
<div class="t" style="left:58px;top:164.9px;font-size:8.6px;color:#222;transform:scaleX(.895);transform-origin:0 0">ExpertMAPSAR</div>
<div class="a" style="left:37px;top:180.0px;width:6px;height:1px;background:#d0d0d0"></div>
<svg class="a" style="left:44px;top:174.5px" width="11" height="11"><path d="M1 3l4-2 4 2-4 2z" fill="#333"/><circle cx="5" cy="5" r="2.2" fill="#e8c088"/><path d="M0.5 10.5c0-3 2-4 4.5-4s4.5 1 4.5 4z" fill="#3a70d0"/><circle cx="8.5" cy="8.5" r="2" fill="#f0d060" stroke="#9a7a10" stroke-width=".5"/></svg>
<div class="t" style="left:58px;top:176.4px;font-size:8.6px;color:#222;transform:scaleX(.895);transform-origin:0 0">ExpertMAPSARSizeOptimized</div>
</div>
<div class="a" style="left:147px;top:242px;width:11px;height:179px;background:#f0f0f0;"></div>
<svg class="a" style="left:148.5px;top:246px;" width="7" height="5" viewBox="0 0 7 5"><path d="M.5 4l3-3 3 3" stroke="#555" stroke-width="1" fill="none"/></svg>
<div class="a" style="left:148.5px;top:311px;width:8px;height:77px;background:#cdcdcd;"></div>
<svg class="a" style="left:148.5px;top:414px;" width="7" height="5" viewBox="0 0 7 5"><path d="M.5 1l3 3 3-3" stroke="#555" stroke-width="1" fill="none"/></svg>
<div class="a" style="left:2px;top:420.5px;width:156px;height:14px;background:#f0f0f0;"></div>
<div class="a" style="left:2px;top:420.5px;width:156px;height:1px;background:#9a9a9a;"></div>
<div class="a" style="left:3px;top:420.5px;width:41px;height:13px;background:#ffffff;border:1px solid #7a7a7a;border-top:none;"></div>
<div class="t" style="top:424.18px;font-size:8.6px;color:#111;left:10px;transform:scaleX(0.9);transform-origin:0 0;">Общие</div>
<div class="t" style="top:424.18px;font-size:8.6px;color:#8a8a8a;left:49.5px;transform:scaleX(0.88);transform-origin:0 0;">Избранное</div>
<div class="a" style="left:158px;top:54px;width:2px;height:387px;background:#f0f0f0;"></div>
<div class="a" style="left:160px;top:53px;width:739px;height:388px;background:#f8f8f8;"></div>
<div class="a" style="left:160px;top:53px;width:1px;height:388px;background:#6e6e6e;"></div>
<div class="a" style="left:161px;top:54px;width:367px;height:187px;background:#f0f0f0;border:1px solid #8c8c8c;"></div>
<svg class="a" style="left:165.5px;top:57.5px;" width="12" height="11" viewBox="0 0 12 11"><rect x="0.5" y="0.5" width="9" height="7" fill="#dceefc" stroke="#2f8ad8"/><rect x="2.5" y="3.5" width="9" height="7" fill="#eef6fd" stroke="#2f8ad8"/><rect x="2.5" y="3.5" width="9" height="2" fill="#2f8ad8"/><path d="M4 9l2-2 2 1 2-2" stroke="#e8602a" fill="none" stroke-width="1.1"/></svg>
<div class="t" style="top:59.60px;font-size:8.4px;color:#6a6a6a;left:179.8px;transform:scaleX(0.9);transform-origin:0 0;">EURUSD,H1</div>
<div class="a" style="left:464px;top:64.5px;width:7px;height:1px;background:#8a8a8a;"></div>
<div class="a" style="left:487px;top:60px;width:7px;height:7px;border:1px solid #8a8a8a;"></div>
<svg class="a" style="left:510px;top:60.5px;" width="7" height="7" viewBox="0 0 7 7"><path d="M0.5 0.5l6 6M6.5 0.5l-6 6" stroke="#808080" stroke-width="1"/></svg>
<div class="a" style="left:166px;top:74px;width:358px;height:162px;background:#000;"></div>
<svg class="a" style="left:166px;top:74px;" width="358" height="162" viewBox="0 0 358 162"><line x1="22.5" y1="2" x2="22.5" y2="149" stroke="#b4b4b4" stroke-width="1" stroke-dasharray="1.4 2.4"/><line x1="43.1" y1="2" x2="43.1" y2="149" stroke="#b4b4b4" stroke-width="1" stroke-dasharray="1.4 2.4"/><line x1="63.7" y1="2" x2="63.7" y2="149" stroke="#b4b4b4" stroke-width="1" stroke-dasharray="1.4 2.4"/><line x1="84.30000000000001" y1="2" x2="84.30000000000001" y2="149" stroke="#b4b4b4" stroke-width="1" stroke-dasharray="1.4 2.4"/><line x1="104.9" y1="2" x2="104.9" y2="149" stroke="#b4b4b4" stroke-width="1" stroke-dasharray="1.4 2.4"/><line x1="125.5" y1="2" x2="125.5" y2="149" stroke="#b4b4b4" stroke-width="1" stroke-dasharray="1.4 2.4"/><line x1="146.10000000000002" y1="2" x2="146.10000000000002" y2="149" stroke="#b4b4b4" stroke-width="1" stroke-dasharray="1.4 2.4"/><line x1="166.70000000000002" y1="2" x2="166.70000000000002" y2="149" stroke="#b4b4b4" stroke-width="1" stroke-dasharray="1.4 2.4"/><line x1="187.3" y1="2" x2="187.3" y2="149" stroke="#b4b4b4" stroke-width="1" stroke-dasharray="1.4 2.4"/><line x1="207.9" y1="2" x2="207.9" y2="149" stroke="#b4b4b4" stroke-width="1" stroke-dasharray="1.4 2.4"/><line x1="228.5" y1="2" x2="228.5" y2="149" stroke="#b4b4b4" stroke-width="1" stroke-dasharray="1.4 2.4"/><line x1="249.10000000000002" y1="2" x2="249.10000000000002" y2="149" stroke="#b4b4b4" stroke-width="1" stroke-dasharray="1.4 2.4"/><line x1="269.70000000000005" y1="2" x2="269.70000000000005" y2="149" stroke="#b4b4b4" stroke-width="1" stroke-dasharray="1.4 2.4"/><line x1="290.3" y1="2" x2="290.3" y2="149" stroke="#b4b4b4" stroke-width="1" stroke-dasharray="1.4 2.4"/><line x1="310.90000000000003" y1="2" x2="310.90000000000003" y2="149" stroke="#b4b4b4" stroke-width="1" stroke-dasharray="1.4 2.4"/><line x1="1" y1="13.400000000000006" x2="327" y2="13.400000000000006" stroke="#b4b4b4" stroke-width="1" stroke-dasharray="1.9 1.7"/><line x1="1" y1="35.8" x2="327" y2="35.8" stroke="#b4b4b4" stroke-width="1" stroke-dasharray="1.9 1.7"/><line x1="1" y1="81" x2="327" y2="81" stroke="#b4b4b4" stroke-width="1" stroke-dasharray="1.9 1.7"/><line x1="1" y1="103.4" x2="327" y2="103.4" stroke="#b4b4b4" stroke-width="1" stroke-dasharray="1.9 1.7"/><line x1="1" y1="125.9" x2="327" y2="125.9" stroke="#b4b4b4" stroke-width="1" stroke-dasharray="1.9 1.7"/><line x1="1" y1="132.4" x2="327" y2="132.4" transform="translate(0,-74)" stroke="#8a9aa8" stroke-width="1"/><rect x="1.5" y="2.5" width="326" height="146.5" fill="none" stroke="#c0c0c0" stroke-width="1"/><line x1="2.0" y1="98.5" x2="2.0" y2="106.0" stroke="#00e000" stroke-width="1"/><rect x="1.0" y="101.2" width="2" height="1.2" fill="#b0ffb0" stroke="#30f030" stroke-width=".5"/><line x1="4.8" y1="98.7" x2="4.8" y2="104.1" stroke="#00e000" stroke-width="1"/><rect x="3.8" y="101.2" width="2" height="1.2" fill="#10c010" stroke="#30f030" stroke-width=".5"/><line x1="7.5" y1="96.6" x2="7.5" y2="104.3" stroke="#00e000" stroke-width="1"/><rect x="6.5" y="99.0" width="2" height="2.2" fill="#b0ffb0" stroke="#30f030" stroke-width=".5"/><line x1="10.2" y1="98.6" x2="10.2" y2="104.8" stroke="#00e000" stroke-width="1"/><rect x="9.2" y="99.0" width="2" height="4.3" fill="#10c010" stroke="#30f030" stroke-width=".5"/><line x1="13.0" y1="93.3" x2="13.0" y2="106.7" stroke="#00e000" stroke-width="1"/><rect x="12.0" y="97.2" width="2" height="6.2" fill="#b0ffb0" stroke="#30f030" stroke-width=".5"/><line x1="15.8" y1="91.5" x2="15.8" y2="101.8" stroke="#00e000" stroke-width="1"/><rect x="14.8" y="96.3" width="2" height="1.2" fill="#b0ffb0" stroke="#30f030" stroke-width=".5"/><line x1="18.5" y1="93.3" x2="18.5" y2="103.8" stroke="#00e000" stroke-width="1"/><rect x="17.5" y="96.3" width="2" height="6.8" fill="#10c010" stroke="#30f030" stroke-width=".5"/><line x1="21.2" y1="97.7" x2="21.2" y2="103.3" stroke="#00e000" stroke-width="1"/><rect x="20.2" y="100.2" width="2" height="2.8" fill="#b0ffb0" stroke="#30f030" stroke-width=".5"/><line x1="24.0" y1="99.1" x2="24.0" y2="102.8" stroke="#00e000" stroke-width="1"/><rect x="23.0" y="100.2" width="2" height="2.4" fill="#10c010" stroke="#30f030" stroke-width=".5"/><line x1="26.8" y1="100.5" x2="26.8" y2="109.9" stroke="#00e000" stroke-width="1"/><rect x="25.8" y="102.7" width="2" height="3.2" fill="#10c010" stroke="#30f030" stroke-width=".5"/><line x1="29.5" y1="102.8" x2="29.5" y2="111.6" stroke="#00e000" stroke-width="1"/><rect x="28.5" y="105.9" width="2" height="3.3" fill="#10c010" stroke="#30f030" stroke-width=".5"/><line x1="32.2" y1="107.0" x2="32.2" y2="116.3" stroke="#00e000" stroke-width="1"/><rect x="31.2" y="109.2" width="2" height="5.7" fill="#10c010" stroke="#30f030" stroke-width=".5"/><line x1="35.0" y1="110.1" x2="35.0" y2="125.0" stroke="#00e000" stroke-width="1"/><rect x="34.0" y="114.9" width="2" height="6.1" fill="#10c010" stroke="#30f030" stroke-width=".5"/><line x1="37.8" y1="119.5" x2="37.8" y2="122.5" stroke="#00e000" stroke-width="1"/><rect x="36.8" y="121.0" width="2" height="1.2" fill="#10c010" stroke="#30f030" stroke-width=".5"/><line x1="40.5" y1="120.5" x2="40.5" y2="125.1" stroke="#00e000" stroke-width="1"/><rect x="39.5" y="120.8" width="2" height="1.2" fill="#b0ffb0" stroke="#30f030" stroke-width=".5"/><line x1="43.2" y1="115.7" x2="43.2" y2="122.7" stroke="#00e000" stroke-width="1"/><rect x="42.2" y="119.8" width="2" height="1.2" fill="#b0ffb0" stroke="#30f030" stroke-width=".5"/><line x1="46.0" y1="115.0" x2="46.0" y2="119.8" stroke="#00e000" stroke-width="1"/><rect x="45.0" y="119.1" width="2" height="1.2" fill="#b0ffb0" stroke="#30f030" stroke-width=".5"/><line x1="48.8" y1="104.1" x2="48.8" y2="121.3" stroke="#00e000" stroke-width="1"/><rect x="47.8" y="108.5" width="2" height="10.6" fill="#b0ffb0" stroke="#30f030" stroke-width=".5"/><line x1="51.5" y1="106.6" x2="51.5" y2="110.9" stroke="#00e000" stroke-width="1"/><rect x="50.5" y="108.5" width="2" height="2.0" fill="#10c010" stroke="#30f030" stroke-width=".5"/><line x1="54.2" y1="100.3" x2="54.2" y2="111.8" stroke="#00e000" stroke-width="1"/><rect x="53.2" y="104.0" width="2" height="6.5" fill="#b0ffb0" stroke="#30f030" stroke-width=".5"/><line x1="57.0" y1="95.5" x2="57.0" y2="108.7" stroke="#00e000" stroke-width="1"/><rect x="56.0" y="97.1" width="2" height="6.9" fill="#b0ffb0" stroke="#30f030" stroke-width=".5"/><line x1="59.8" y1="96.6" x2="59.8" y2="101.9" stroke="#00e000" stroke-width="1"/><rect x="58.8" y="97.1" width="2" height="3.5" fill="#10c010" stroke="#30f030" stroke-width=".5"/><line x1="62.5" y1="96.0" x2="62.5" y2="104.5" stroke="#00e000" stroke-width="1"/><rect x="61.5" y="96.3" width="2" height="4.3" fill="#b0ffb0" stroke="#30f030" stroke-width=".5"/><line x1="65.2" y1="93.6" x2="65.2" y2="100.9" stroke="#00e000" stroke-width="1"/><rect x="64.2" y="96.3" width="2" height="2.4" fill="#10c010" stroke="#30f030" stroke-width=".5"/><line x1="68.0" y1="95.3" x2="68.0" y2="102.2" stroke="#00e000" stroke-width="1"/><rect x="67.0" y="98.8" width="2" height="2.8" fill="#10c010" stroke="#30f030" stroke-width=".5"/><line x1="70.8" y1="101.0" x2="70.8" y2="109.9" stroke="#00e000" stroke-width="1"/><rect x="69.8" y="101.5" width="2" height="6.3" fill="#10c010" stroke="#30f030" stroke-width=".5"/><line x1="73.5" y1="104.0" x2="73.5" y2="112.5" stroke="#00e000" stroke-width="1"/><rect x="72.5" y="105.3" width="2" height="2.5" fill="#b0ffb0" stroke="#30f030" stroke-width=".5"/><line x1="76.2" y1="103.9" x2="76.2" y2="115.4" stroke="#00e000" stroke-width="1"/><rect x="75.2" y="105.3" width="2" height="5.8" fill="#10c010" stroke="#30f030" stroke-width=".5"/><line x1="79.0" y1="106.3" x2="79.0" y2="115.2" stroke="#00e000" stroke-width="1"/><rect x="78.0" y="108.2" width="2" height="2.9" fill="#b0ffb0" stroke="#30f030" stroke-width=".5"/><line x1="81.8" y1="107.7" x2="81.8" y2="119.4" stroke="#00e000" stroke-width="1"/><rect x="80.8" y="108.2" width="2" height="6.4" fill="#10c010" stroke="#30f030" stroke-width=".5"/><line x1="84.5" y1="113.4" x2="84.5" y2="120.4" stroke="#00e000" stroke-width="1"/><rect x="83.5" y="114.6" width="2" height="2.1" fill="#10c010" stroke="#30f030" stroke-width=".5"/><line x1="87.2" y1="115.3" x2="87.2" y2="121.6" stroke="#00e000" stroke-width="1"/><rect x="86.2" y="116.7" width="2" height="4.5" fill="#10c010" stroke="#30f030" stroke-width=".5"/><line x1="90.0" y1="117.9" x2="90.0" y2="122.4" stroke="#00e000" stroke-width="1"/><rect x="89.0" y="120.7" width="2" height="1.2" fill="#b0ffb0" stroke="#30f030" stroke-width=".5"/><line x1="92.8" y1="118.9" x2="92.8" y2="128.4" stroke="#00e000" stroke-width="1"/><rect x="91.8" y="120.7" width="2" height="5.5" fill="#10c010" stroke="#30f030" stroke-width=".5"/><line x1="95.5" y1="123.9" x2="95.5" y2="134.5" stroke="#00e000" stroke-width="1"/><rect x="94.5" y="126.2" width="2" height="5.6" fill="#10c010" stroke="#30f030" stroke-width=".5"/><line x1="98.2" y1="130.9" x2="98.2" y2="133.9" stroke="#00e000" stroke-width="1"/><rect x="97.2" y="131.8" width="2" height="1.3" fill="#10c010" stroke="#30f030" stroke-width=".5"/><line x1="101.0" y1="126.8" x2="101.0" y2="134.3" stroke="#00e000" stroke-width="1"/><rect x="100.0" y="130.7" width="2" height="2.4" fill="#b0ffb0" stroke="#30f030" stroke-width=".5"/><line x1="103.8" y1="118.8" x2="103.8" y2="135.2" stroke="#00e000" stroke-width="1"/><rect x="102.8" y="122.4" width="2" height="8.3" fill="#b0ffb0" stroke="#30f030" stroke-width=".5"/><line x1="106.5" y1="115.8" x2="106.5" y2="126.6" stroke="#00e000" stroke-width="1"/><rect x="105.5" y="120.4" width="2" height="2.0" fill="#b0ffb0" stroke="#30f030" stroke-width=".5"/><line x1="109.2" y1="118.4" x2="109.2" y2="122.1" stroke="#00e000" stroke-width="1"/><rect x="108.2" y="120.4" width="2" height="1.2" fill="#10c010" stroke="#30f030" stroke-width=".5"/><line x1="112.0" y1="101.2" x2="112.0" y2="122.7" stroke="#00e000" stroke-width="1"/><rect x="111.0" y="105.8" width="2" height="15.7" fill="#b0ffb0" stroke="#30f030" stroke-width=".5"/><line x1="114.8" y1="104.6" x2="114.8" y2="114.1" stroke="#00e000" stroke-width="1"/><rect x="113.8" y="105.8" width="2" height="4.3" fill="#10c010" stroke="#30f030" stroke-width=".5"/><line x1="117.5" y1="108.7" x2="117.5" y2="116.0" stroke="#00e000" stroke-width="1"/><rect x="116.5" y="110.1" width="2" height="5.0" fill="#10c010" stroke="#30f030" stroke-width=".5"/><line x1="120.2" y1="113.0" x2="120.2" y2="116.2" stroke="#00e000" stroke-width="1"/><rect x="119.2" y="113.4" width="2" height="1.8" fill="#b0ffb0" stroke="#30f030" stroke-width=".5"/><line x1="123.0" y1="106.1" x2="123.0" y2="116.3" stroke="#00e000" stroke-width="1"/><rect x="122.0" y="110.2" width="2" height="3.1" fill="#b0ffb0" stroke="#30f030" stroke-width=".5"/><line x1="125.8" y1="102.9" x2="125.8" y2="111.2" stroke="#00e000" stroke-width="1"/><rect x="124.8" y="107.3" width="2" height="2.9" fill="#b0ffb0" stroke="#30f030" stroke-width=".5"/><line x1="128.5" y1="103.2" x2="128.5" y2="109.5" stroke="#00e000" stroke-width="1"/><rect x="127.5" y="104.5" width="2" height="2.8" fill="#b0ffb0" stroke="#30f030" stroke-width=".5"/><line x1="131.2" y1="103.7" x2="131.2" y2="106.6" stroke="#00e000" stroke-width="1"/><rect x="130.2" y="104.5" width="2" height="1.2" fill="#10c010" stroke="#30f030" stroke-width=".5"/><line x1="134.0" y1="104.2" x2="134.0" y2="110.6" stroke="#00e000" stroke-width="1"/><rect x="133.0" y="104.9" width="2" height="4.0" fill="#10c010" stroke="#30f030" stroke-width=".5"/><line x1="136.8" y1="104.2" x2="136.8" y2="113.9" stroke="#00e000" stroke-width="1"/><rect x="135.8" y="108.9" width="2" height="1.9" fill="#10c010" stroke="#30f030" stroke-width=".5"/><line x1="139.5" y1="105.8" x2="139.5" y2="111.5" stroke="#00e000" stroke-width="1"/><rect x="138.5" y="108.6" width="2" height="2.2" fill="#b0ffb0" stroke="#30f030" stroke-width=".5"/><line x1="142.2" y1="102.6" x2="142.2" y2="112.9" stroke="#00e000" stroke-width="1"/><rect x="141.2" y="102.7" width="2" height="5.9" fill="#b0ffb0" stroke="#30f030" stroke-width=".5"/><line x1="145.0" y1="98.1" x2="145.0" y2="107.5" stroke="#00e000" stroke-width="1"/><rect x="144.0" y="102.7" width="2" height="4.7" fill="#10c010" stroke="#30f030" stroke-width=".5"/><line x1="147.8" y1="103.9" x2="147.8" y2="110.9" stroke="#00e000" stroke-width="1"/><rect x="146.8" y="106.2" width="2" height="1.2" fill="#b0ffb0" stroke="#30f030" stroke-width=".5"/><line x1="150.5" y1="98.3" x2="150.5" y2="106.6" stroke="#00e000" stroke-width="1"/><rect x="149.5" y="103.1" width="2" height="3.2" fill="#b0ffb0" stroke="#30f030" stroke-width=".5"/><line x1="153.2" y1="99.5" x2="153.2" y2="108.6" stroke="#00e000" stroke-width="1"/><rect x="152.2" y="103.1" width="2" height="1.2" fill="#10c010" stroke="#30f030" stroke-width=".5"/><line x1="156.0" y1="100.9" x2="156.0" y2="109.0" stroke="#00e000" stroke-width="1"/><rect x="155.0" y="104.3" width="2" height="1.2" fill="#10c010" stroke="#30f030" stroke-width=".5"/><line x1="158.8" y1="103.5" x2="158.8" y2="109.2" stroke="#00e000" stroke-width="1"/><rect x="157.8" y="105.2" width="2" height="1.2" fill="#10c010" stroke="#30f030" stroke-width=".5"/><line x1="161.5" y1="101.0" x2="161.5" y2="108.0" stroke="#00e000" stroke-width="1"/><rect x="160.5" y="105.2" width="2" height="1.2" fill="#b0ffb0" stroke="#30f030" stroke-width=".5"/><line x1="164.2" y1="99.6" x2="164.2" y2="108.0" stroke="#00e000" stroke-width="1"/><rect x="163.2" y="103.7" width="2" height="1.5" fill="#b0ffb0" stroke="#30f030" stroke-width=".5"/><line x1="167.0" y1="99.9" x2="167.0" y2="106.5" stroke="#00e000" stroke-width="1"/><rect x="166.0" y="101.7" width="2" height="2.0" fill="#b0ffb0" stroke="#30f030" stroke-width=".5"/><line x1="169.8" y1="100.6" x2="169.8" y2="104.8" stroke="#00e000" stroke-width="1"/><rect x="168.8" y="101.0" width="2" height="1.2" fill="#b0ffb0" stroke="#30f030" stroke-width=".5"/><line x1="172.5" y1="96.8" x2="172.5" y2="106.9" stroke="#00e000" stroke-width="1"/><rect x="171.5" y="101.0" width="2" height="2.4" fill="#10c010" stroke="#30f030" stroke-width=".5"/><line x1="175.2" y1="94.4" x2="175.2" y2="106.2" stroke="#00e000" stroke-width="1"/><rect x="174.2" y="98.0" width="2" height="5.5" fill="#b0ffb0" stroke="#30f030" stroke-width=".5"/><line x1="178.0" y1="93.7" x2="178.0" y2="98.4" stroke="#00e000" stroke-width="1"/><rect x="177.0" y="97.8" width="2" height="1.2" fill="#b0ffb0" stroke="#30f030" stroke-width=".5"/><line x1="180.8" y1="97.6" x2="180.8" y2="102.5" stroke="#00e000" stroke-width="1"/><rect x="179.8" y="97.8" width="2" height="1.8" fill="#10c010" stroke="#30f030" stroke-width=".5"/><line x1="183.5" y1="95.7" x2="183.5" y2="103.0" stroke="#00e000" stroke-width="1"/><rect x="182.5" y="96.8" width="2" height="2.8" fill="#b0ffb0" stroke="#30f030" stroke-width=".5"/><line x1="186.2" y1="93.4" x2="186.2" y2="101.2" stroke="#00e000" stroke-width="1"/><rect x="185.2" y="96.3" width="2" height="1.2" fill="#b0ffb0" stroke="#30f030" stroke-width=".5"/><line x1="189.0" y1="93.7" x2="189.0" y2="97.8" stroke="#00e000" stroke-width="1"/><rect x="188.0" y="93.8" width="2" height="2.6" fill="#b0ffb0" stroke="#30f030" stroke-width=".5"/><line x1="191.8" y1="92.8" x2="191.8" y2="97.3" stroke="#00e000" stroke-width="1"/><rect x="190.8" y="93.8" width="2" height="2.7" fill="#10c010" stroke="#30f030" stroke-width=".5"/><line x1="194.5" y1="93.3" x2="194.5" y2="99.8" stroke="#00e000" stroke-width="1"/><rect x="193.5" y="96.5" width="2" height="1.2" fill="#10c010" stroke="#30f030" stroke-width=".5"/><line x1="197.2" y1="95.4" x2="197.2" y2="100.9" stroke="#00e000" stroke-width="1"/><rect x="196.2" y="97.0" width="2" height="1.2" fill="#b0ffb0" stroke="#30f030" stroke-width=".5"/><line x1="200.0" y1="88.7" x2="200.0" y2="100.8" stroke="#00e000" stroke-width="1"/><rect x="199.0" y="90.8" width="2" height="6.2" fill="#b0ffb0" stroke="#30f030" stroke-width=".5"/><line x1="202.8" y1="86.6" x2="202.8" y2="97.7" stroke="#00e000" stroke-width="1"/><rect x="201.8" y="90.8" width="2" height="5.1" fill="#10c010" stroke="#30f030" stroke-width=".5"/><line x1="205.5" y1="91.1" x2="205.5" y2="96.5" stroke="#00e000" stroke-width="1"/><rect x="204.5" y="92.6" width="2" height="3.3" fill="#b0ffb0" stroke="#30f030" stroke-width=".5"/><line x1="208.2" y1="87.3" x2="208.2" y2="96.7" stroke="#00e000" stroke-width="1"/><rect x="207.2" y="91.3" width="2" height="1.3" fill="#b0ffb0" stroke="#30f030" stroke-width=".5"/><line x1="211.0" y1="86.7" x2="211.0" y2="93.7" stroke="#00e000" stroke-width="1"/><rect x="210.0" y="91.3" width="2" height="1.2" fill="#10c010" stroke="#30f030" stroke-width=".5"/><line x1="213.8" y1="85.2" x2="213.8" y2="93.7" stroke="#00e000" stroke-width="1"/><rect x="212.8" y="87.4" width="2" height="5.0" fill="#b0ffb0" stroke="#30f030" stroke-width=".5"/><line x1="216.5" y1="77.0" x2="216.5" y2="90.4" stroke="#00e000" stroke-width="1"/><rect x="215.5" y="79.0" width="2" height="8.4" fill="#b0ffb0" stroke="#30f030" stroke-width=".5"/><line x1="219.2" y1="70.4" x2="219.2" y2="83.0" stroke="#00e000" stroke-width="1"/><rect x="218.2" y="71.9" width="2" height="7.1" fill="#b0ffb0" stroke="#30f030" stroke-width=".5"/><line x1="222.0" y1="63.4" x2="222.0" y2="72.3" stroke="#00e000" stroke-width="1"/><rect x="221.0" y="65.5" width="2" height="6.4" fill="#b0ffb0" stroke="#30f030" stroke-width=".5"/><line x1="224.8" y1="36.4" x2="224.8" y2="65.7" stroke="#00e000" stroke-width="1"/><rect x="223.8" y="40.6" width="2" height="25.0" fill="#b0ffb0" stroke="#30f030" stroke-width=".5"/><line x1="227.5" y1="30.6" x2="227.5" y2="42.0" stroke="#00e000" stroke-width="1"/><rect x="226.5" y="33.4" width="2" height="7.2" fill="#b0ffb0" stroke="#30f030" stroke-width=".5"/><line x1="230.2" y1="33.3" x2="230.2" y2="35.4" stroke="#00e000" stroke-width="1"/><rect x="229.2" y="33.4" width="2" height="1.4" fill="#10c010" stroke="#30f030" stroke-width=".5"/><line x1="233.0" y1="28.5" x2="233.0" y2="38.7" stroke="#00e000" stroke-width="1"/><rect x="232.0" y="28.6" width="2" height="6.1" fill="#b0ffb0" stroke="#30f030" stroke-width=".5"/><line x1="235.8" y1="22.1" x2="235.8" y2="28.9" stroke="#00e000" stroke-width="1"/><rect x="234.8" y="22.8" width="2" height="5.9" fill="#b0ffb0" stroke="#30f030" stroke-width=".5"/><line x1="238.5" y1="20.1" x2="238.5" y2="25.8" stroke="#00e000" stroke-width="1"/><rect x="237.5" y="22.3" width="2" height="1.2" fill="#b0ffb0" stroke="#30f030" stroke-width=".5"/><line x1="241.2" y1="15.5" x2="241.2" y2="26.9" stroke="#00e000" stroke-width="1"/><rect x="240.2" y="19.4" width="2" height="2.9" fill="#b0ffb0" stroke="#30f030" stroke-width=".5"/><line x1="244.0" y1="18.4" x2="244.0" y2="24.3" stroke="#00e000" stroke-width="1"/><rect x="243.0" y="19.4" width="2" height="2.7" fill="#10c010" stroke="#30f030" stroke-width=".5"/><line x1="246.8" y1="22.0" x2="246.8" y2="26.9" stroke="#00e000" stroke-width="1"/><rect x="245.8" y="22.0" width="2" height="2.6" fill="#10c010" stroke="#30f030" stroke-width=".5"/><line x1="249.5" y1="23.8" x2="249.5" y2="32.0" stroke="#00e000" stroke-width="1"/><rect x="248.5" y="24.6" width="2" height="6.0" fill="#10c010" stroke="#30f030" stroke-width=".5"/><line x1="252.2" y1="27.3" x2="252.2" y2="33.7" stroke="#00e000" stroke-width="1"/><rect x="251.2" y="30.7" width="2" height="1.2" fill="#10c010" stroke="#30f030" stroke-width=".5"/><line x1="255.0" y1="27.5" x2="255.0" y2="34.6" stroke="#00e000" stroke-width="1"/><rect x="254.0" y="31.2" width="2" height="1.6" fill="#10c010" stroke="#30f030" stroke-width=".5"/><line x1="257.8" y1="28.4" x2="257.8" y2="33.7" stroke="#00e000" stroke-width="1"/><rect x="256.8" y="32.7" width="2" height="1.2" fill="#10c010" stroke="#30f030" stroke-width=".5"/><line x1="260.5" y1="29.8" x2="260.5" y2="34.1" stroke="#00e000" stroke-width="1"/><rect x="259.5" y="33.3" width="2" height="1.2" fill="#10c010" stroke="#30f030" stroke-width=".5"/><line x1="263.2" y1="27.5" x2="263.2" y2="37.9" stroke="#00e000" stroke-width="1"/><rect x="262.2" y="30.5" width="2" height="3.0" fill="#b0ffb0" stroke="#30f030" stroke-width=".5"/><line x1="266.0" y1="27.8" x2="266.0" y2="36.2" stroke="#00e000" stroke-width="1"/><rect x="265.0" y="30.5" width="2" height="1.5" fill="#10c010" stroke="#30f030" stroke-width=".5"/><line x1="268.8" y1="27.5" x2="268.8" y2="46.7" stroke="#00e000" stroke-width="1"/><rect x="267.8" y="32.0" width="2" height="12.5" fill="#10c010" stroke="#30f030" stroke-width=".5"/><line x1="271.5" y1="43.5" x2="271.5" y2="51.0" stroke="#00e000" stroke-width="1"/><rect x="270.5" y="44.5" width="2" height="3.1" fill="#10c010" stroke="#30f030" stroke-width=".5"/><line x1="274.2" y1="44.5" x2="274.2" y2="54.6" stroke="#00e000" stroke-width="1"/><rect x="273.2" y="47.5" width="2" height="3.6" fill="#10c010" stroke="#30f030" stroke-width=".5"/><line x1="277.0" y1="44.7" x2="277.0" y2="55.8" stroke="#00e000" stroke-width="1"/><rect x="276.0" y="49.0" width="2" height="2.1" fill="#b0ffb0" stroke="#30f030" stroke-width=".5"/><line x1="279.8" y1="46.5" x2="279.8" y2="60.5" stroke="#00e000" stroke-width="1"/><rect x="278.8" y="49.0" width="2" height="7.7" fill="#10c010" stroke="#30f030" stroke-width=".5"/><line x1="282.5" y1="48.4" x2="282.5" y2="60.8" stroke="#00e000" stroke-width="1"/><rect x="281.5" y="52.8" width="2" height="3.9" fill="#b0ffb0" stroke="#30f030" stroke-width=".5"/><line x1="285.2" y1="52.4" x2="285.2" y2="60.3" stroke="#00e000" stroke-width="1"/><rect x="284.2" y="52.8" width="2" height="5.3" fill="#10c010" stroke="#30f030" stroke-width=".5"/><line x1="288.0" y1="54.5" x2="288.0" y2="66.7" stroke="#00e000" stroke-width="1"/><rect x="287.0" y="58.2" width="2" height="6.2" fill="#10c010" stroke="#30f030" stroke-width=".5"/><line x1="290.8" y1="50.6" x2="290.8" y2="64.7" stroke="#00e000" stroke-width="1"/><rect x="289.8" y="54.5" width="2" height="9.9" fill="#b0ffb0" stroke="#30f030" stroke-width=".5"/><line x1="293.5" y1="53.6" x2="293.5" y2="60.3" stroke="#00e000" stroke-width="1"/><rect x="292.5" y="54.5" width="2" height="4.2" fill="#10c010" stroke="#30f030" stroke-width=".5"/><line x1="296.2" y1="57.0" x2="296.2" y2="59.4" stroke="#00e000" stroke-width="1"/><rect x="295.2" y="57.7" width="2" height="1.2" fill="#b0ffb0" stroke="#30f030" stroke-width=".5"/><line x1="299.0" y1="52.5" x2="299.0" y2="61.7" stroke="#00e000" stroke-width="1"/><rect x="298.0" y="56.0" width="2" height="1.7" fill="#b0ffb0" stroke="#30f030" stroke-width=".5"/><line x1="301.8" y1="51.4" x2="301.8" y2="61.1" stroke="#00e000" stroke-width="1"/><rect x="300.8" y="56.0" width="2" height="2.8" fill="#10c010" stroke="#30f030" stroke-width=".5"/><line x1="304.5" y1="58.3" x2="304.5" y2="61.8" stroke="#00e000" stroke-width="1"/><rect x="303.5" y="58.7" width="2" height="2.0" fill="#10c010" stroke="#30f030" stroke-width=".5"/><line x1="307.2" y1="55.5" x2="307.2" y2="64.2" stroke="#00e000" stroke-width="1"/><rect x="306.2" y="56.9" width="2" height="3.8" fill="#b0ffb0" stroke="#30f030" stroke-width=".5"/><line x1="310.0" y1="54.4" x2="310.0" y2="61.4" stroke="#00e000" stroke-width="1"/><rect x="309.0" y="56.9" width="2" height="1.2" fill="#10c010" stroke="#30f030" stroke-width=".5"/><line x1="312.8" y1="55.0" x2="312.8" y2="59.2" stroke="#00e000" stroke-width="1"/><rect x="311.8" y="56.5" width="2" height="1.2" fill="#b0ffb0" stroke="#30f030" stroke-width=".5"/><line x1="315.5" y1="52.2" x2="315.5" y2="61.2" stroke="#00e000" stroke-width="1"/><rect x="314.5" y="56.5" width="2" height="3.7" fill="#10c010" stroke="#30f030" stroke-width=".5"/><line x1="318.2" y1="55.5" x2="318.2" y2="63.5" stroke="#00e000" stroke-width="1"/><rect x="317.2" y="60.2" width="2" height="1.2" fill="#10c010" stroke="#30f030" stroke-width=".5"/><line x1="321.0" y1="57.3" x2="321.0" y2="63.6" stroke="#00e000" stroke-width="1"/><rect x="320.0" y="58.3" width="2" height="2.7" fill="#b0ffb0" stroke="#30f030" stroke-width=".5"/><line x1="323.8" y1="53.7" x2="323.8" y2="58.4" stroke="#00e000" stroke-width="1"/><rect x="322.8" y="56.6" width="2" height="1.7" fill="#b0ffb0" stroke="#30f030" stroke-width=".5"/><polyline points="-6.0,104.1 -4.4,104.1 -2.2,104.1 0.3,104.0 2.5,104.1 4.3,104.3 5.8,104.6 7.4,104.9 9.3,105.0 11.6,104.7 14.2,104.2 16.9,103.6 19.6,103.3 22.1,103.0 24.8,102.8 27.3,102.9 29.8,103.3 32.0,104.2 34.0,105.6 36.1,107.1 38.3,108.4 40.6,109.5 43.1,110.6 45.7,111.4 48.5,111.8 51.6,111.6 54.9,110.9 58.4,110.1 62.1,109.2 66.3,108.2 70.9,107.0 75.3,106.0 79.2,105.8 82.2,106.6 84.7,108.2 87.0,110.0 89.4,111.8 91.9,113.5 94.3,115.3 96.8,117.0 99.6,118.6 102.9,120.0 106.4,121.4 110.0,122.4 113.3,122.8 116.0,122.4 118.6,121.2 121.0,119.8 123.5,118.6 124.2,118.2 123.6,118.2 125.5,117.5 133.7,115.2 152.7,110.1 179.2,103.1 205.6,95.8 224.0,90.0 231.0,86.4 231.3,83.9 228.9,81.8 228.2,79.2 229.8,75.9 231.8,72.3 233.8,68.7 235.7,65.0 237.4,61.2 239.1,57.3 240.7,53.5 242.3,50.0 244.0,46.7 245.7,43.6 247.3,40.8 249.0,38.3 250.6,36.2 252.2,34.4 253.9,32.9 255.7,31.7 257.7,30.7 259.9,29.9 262.1,29.4 264.0,29.2 265.4,29.2 266.5,29.4 267.6,30.0 269.0,30.8 270.8,32.1 273.0,33.9 275.2,35.7 277.3,37.5 279.4,39.2 281.5,40.9 283.6,42.6 285.7,44.2 287.8,45.7 289.8,47.2 291.9,48.7 294.0,50.0 296.1,51.2 298.2,52.3 300.2,53.3 302.3,54.2 304.5,54.9 306.6,55.6 308.7,56.2 310.7,56.7 312.5,57.0 314.1,57.3 315.7,57.4 317.3,57.5 319.2,57.5 321.1,57.3 322.8,57.1 324.0,57.0" fill="none" stroke="#d01010" stroke-width="1"/><line x1="327" y1="13.400000000000006" x2="330" y2="13.400000000000006" stroke="#c0c0c0"/><text x="331" y="15.800000000000006" font-size="6.1" fill="#e8e8e8" font-family="Liberation Sans" text-anchor="start">1.1100</text><line x1="327" y1="35.8" x2="330" y2="35.8" stroke="#c0c0c0"/><text x="331" y="38.199999999999996" font-size="6.1" fill="#e8e8e8" font-family="Liberation Sans" text-anchor="start">1.1080</text><rect x="329" y="54.9" width="22" height="7.4" fill="#8898aa"/><text x="330.5" y="61" font-size="6.1" fill="#0a0a0a" font-family="Liberation Sans" text-anchor="start">1.1060</text><line x1="2" y1="149" x2="2" y2="152" stroke="#c0c0c0"/><text x="2" y="156.9" font-size="5.95" fill="#e8e8e8" font-family="Liberation Sans" text-anchor="start">28 Jan 2020</text><line x1="43" y1="149" x2="43" y2="152" stroke="#c0c0c0"/><text x="43" y="156.9" font-size="5.95" fill="#e8e8e8" font-family="Liberation Sans" text-anchor="start">28 Jan 18:00</text><line x1="84" y1="149" x2="84" y2="152" stroke="#c0c0c0"/><text x="84" y="156.9" font-size="5.95" fill="#e8e8e8" font-family="Liberation Sans" text-anchor="start">29 Jan 10:00</text><line x1="125" y1="149" x2="125" y2="152" stroke="#c0c0c0"/><text x="125" y="156.9" font-size="5.95" fill="#e8e8e8" font-family="Liberation Sans" text-anchor="start">30 Jan 02:00</text><line x1="166" y1="149" x2="166" y2="152" stroke="#c0c0c0"/><text x="166" y="156.9" font-size="5.95" fill="#e8e8e8" font-family="Liberation Sans" text-anchor="start">30 Jan 18:00</text><line x1="207" y1="149" x2="207" y2="152" stroke="#c0c0c0"/><text x="207" y="156.9" font-size="5.95" fill="#e8e8e8" font-family="Liberation Sans" text-anchor="start">31 Jan 10:00</text><line x1="248" y1="149" x2="248" y2="152" stroke="#c0c0c0"/><text x="248" y="156.9" font-size="5.95" fill="#e8e8e8" font-family="Liberation Sans" text-anchor="start">3 Feb 02:00</text><line x1="289" y1="149" x2="289" y2="152" stroke="#c0c0c0"/><text x="289" y="156.9" font-size="5.95" fill="#e8e8e8" font-family="Liberation Sans" text-anchor="start">3 Feb 18:00</text></svg>
<svg class="a" style="left:170px;top:79px;" width="21" height="9" viewBox="0 0 21 9"><rect x="0.5" y="0.5" width="8" height="7.5" fill="#f4f4f8" stroke="#aab" stroke-width=".6"/><rect x="1.5" y="1.5" width="2.5" height="6" fill="#f09090"/><rect x="4.5" y="1.5" width="3.5" height="6" fill="#b0c0f0"/><rect x="11" y="0.5" width="8" height="7.5" fill="#3048c8"/><rect x="15" y="3.5" width="4" height="4.5" fill="#e03030"/><circle cx="15" cy="2" r="1.5" fill="#ccc"/></svg>
<div class="t" style="top:79.27px;font-size:7.2px;color:#e8e8e8;left:193.5px;transform:scaleX(0.86);transform-origin:0 0;">EURUSD,H1</div>
<div class="a" style="left:169.5px;top:89.2px;width:27.5px;height:13.7px;background:linear-gradient(#4a58f0,#3340e0);border-bottom:1px solid #2028a0;"></div>
<div class="t" style="top:91.58px;font-size:8.6px;color:#e8e8ff;left:-17px;width:400px;text-align:center;transform:scaleX(0.75);transform-origin:50% 0;">SELL</div>
<div class="a" style="left:199.2px;top:89.2px;width:13px;height:12.5px;background:#dcdcdc;border:1px solid #a8a8a8;border-right:none;"></div>
<svg class="a" style="left:203.5px;top:94px;" width="6" height="4" viewBox="0 0 6 4"><path d="M0 0h5l-2.5 3z" fill="#222"/></svg>
<div class="a" style="left:212px;top:89.2px;width:36.5px;height:12.5px;background:#ffffff;border-top:1px solid #a8a8a8;border-bottom:1px solid #a8a8a8;"></div>
<div class="t" style="top:91.30px;font-size:8.4px;color:#222;right:653px;transform:scaleX(0.9);transform-origin:100% 0;">0.01</div>
<div class="a" style="left:248.4px;top:89.2px;width:12.3px;height:12.5px;background:#dcdcdc;border:1px solid #a8a8a8;border-left:none;"></div>
<svg class="a" style="left:252px;top:93.5px;" width="6" height="4" viewBox="0 0 6 4"><path d="M0 3h5L2.5 0z" fill="#222"/></svg>
<div class="a" style="left:262.5px;top:89.2px;width:26.8px;height:13.7px;background:linear-gradient(#4a58f0,#3340e0);border-bottom:1px solid #2028a0;"></div>
<div class="t" style="top:91.58px;font-size:8.6px;color:#e8e8ff;left:76px;width:400px;text-align:center;transform:scaleX(0.75);transform-origin:50% 0;">BUY</div>
<div class="a" style="left:169.5px;top:103.6px;width:60px;height:21.7px;background:linear-gradient(#3848f0,#0c14b0);"></div>
<div class="a" style="left:231.7px;top:103.6px;width:57.6px;height:21.7px;background:linear-gradient(#3848f0,#0c14b0);"></div>
<div class="t" style="top:116.01px;font-size:8.2px;color:#fff;font-weight:bold;right:703px;transform:scaleX(0.9);transform-origin:100% 0;">1.10</div>
<div class="t" style="top:105.00px;font-size:20px;color:#fff;left:200px;transform:scaleX(0.9);transform-origin:0 0;">60</div>
<div class="t" style="top:116.01px;font-size:8.2px;color:#fff;font-weight:bold;right:640.7px;transform:scaleX(0.9);transform-origin:100% 0;">1.10</div>
<div class="t" style="top:105.00px;font-size:20px;color:#fff;left:261.2px;transform:scaleX(0.9);transform-origin:0 0;">63</div>
<div class="a" style="left:528px;top:54px;width:369px;height:187px;background:#f0f0f0;border:1px solid #8c8c8c;"></div>
<svg class="a" style="left:532.5px;top:57.5px;" width="12" height="11" viewBox="0 0 12 11"><rect x="0.5" y="0.5" width="9" height="7" fill="#dceefc" stroke="#2f8ad8"/><rect x="2.5" y="3.5" width="9" height="7" fill="#eef6fd" stroke="#2f8ad8"/><rect x="2.5" y="3.5" width="9" height="2" fill="#2f8ad8"/><path d="M4 9l2-2 2 1 2-2" stroke="#e8602a" fill="none" stroke-width="1.1"/></svg>
<div class="t" style="top:59.60px;font-size:8.4px;color:#6a6a6a;left:546.8px;transform:scaleX(0.9);transform-origin:0 0;">GBPUSD,H1</div>
<div class="a" style="left:833px;top:64.5px;width:7px;height:1px;background:#8a8a8a;"></div>
<div class="a" style="left:856px;top:60px;width:7px;height:7px;border:1px solid #8a8a8a;"></div>
<svg class="a" style="left:879px;top:60.5px;" width="7" height="7" viewBox="0 0 7 7"><path d="M0.5 0.5l6 6M6.5 0.5l-6 6" stroke="#808080" stroke-width="1"/></svg>
<div class="a" style="left:533px;top:74px;width:359px;height:162px;background:#000;"></div>
<svg class="a" style="left:533px;top:74px;" width="359" height="162" viewBox="0 0 359 162"><line x1="312.5" y1="2" x2="312.5" y2="147" stroke="#b4b4b4" stroke-width="1" stroke-dasharray="1.4 2.4"/><line x1="291.9" y1="2" x2="291.9" y2="147" stroke="#b4b4b4" stroke-width="1" stroke-dasharray="1.4 2.4"/><line x1="271.3" y1="2" x2="271.3" y2="147" stroke="#b4b4b4" stroke-width="1" stroke-dasharray="1.4 2.4"/><line x1="250.7" y1="2" x2="250.7" y2="147" stroke="#b4b4b4" stroke-width="1" stroke-dasharray="1.4 2.4"/><line x1="230.1" y1="2" x2="230.1" y2="147" stroke="#b4b4b4" stroke-width="1" stroke-dasharray="1.4 2.4"/><line x1="209.5" y1="2" x2="209.5" y2="147" stroke="#b4b4b4" stroke-width="1" stroke-dasharray="1.4 2.4"/><line x1="188.89999999999998" y1="2" x2="188.89999999999998" y2="147" stroke="#b4b4b4" stroke-width="1" stroke-dasharray="1.4 2.4"/><line x1="168.29999999999998" y1="2" x2="168.29999999999998" y2="147" stroke="#b4b4b4" stroke-width="1" stroke-dasharray="1.4 2.4"/><line x1="147.7" y1="2" x2="147.7" y2="147" stroke="#b4b4b4" stroke-width="1" stroke-dasharray="1.4 2.4"/><line x1="127.1" y1="2" x2="127.1" y2="147" stroke="#b4b4b4" stroke-width="1" stroke-dasharray="1.4 2.4"/><line x1="106.5" y1="2" x2="106.5" y2="147" stroke="#b4b4b4" stroke-width="1" stroke-dasharray="1.4 2.4"/><line x1="85.89999999999998" y1="2" x2="85.89999999999998" y2="147" stroke="#b4b4b4" stroke-width="1" stroke-dasharray="1.4 2.4"/><line x1="65.29999999999998" y1="2" x2="65.29999999999998" y2="147" stroke="#b4b4b4" stroke-width="1" stroke-dasharray="1.4 2.4"/><line x1="44.69999999999999" y1="2" x2="44.69999999999999" y2="147" stroke="#b4b4b4" stroke-width="1" stroke-dasharray="1.4 2.4"/><line x1="24.099999999999966" y1="2" x2="24.099999999999966" y2="147" stroke="#b4b4b4" stroke-width="1" stroke-dasharray="1.4 2.4"/><line x1="3.5" y1="2" x2="3.5" y2="147" stroke="#b4b4b4" stroke-width="1" stroke-dasharray="1.4 2.4"/><line x1="1" y1="12.700000000000003" x2="328" y2="12.700000000000003" stroke="#b4b4b4" stroke-width="1" stroke-dasharray="1.9 1.7"/><line x1="1" y1="34.599999999999994" x2="328" y2="34.599999999999994" stroke="#b4b4b4" stroke-width="1" stroke-dasharray="1.9 1.7"/><line x1="1" y1="56.30000000000001" x2="328" y2="56.30000000000001" stroke="#b4b4b4" stroke-width="1" stroke-dasharray="1.9 1.7"/><line x1="1" y1="76.4" x2="328" y2="76.4" stroke="#b4b4b4" stroke-width="1" stroke-dasharray="1.9 1.7"/><line x1="1" y1="118.69999999999999" x2="328" y2="118.69999999999999" stroke="#b4b4b4" stroke-width="1" stroke-dasharray="1.9 1.7"/><line x1="1" y1="126.1" x2="328" y2="126.1" stroke="#b4b4b4" stroke-width="1" stroke-dasharray="1.9 1.7"/><line x1="1" y1="133.6" x2="328" y2="133.6" stroke="#b4b4b4" stroke-width="1" stroke-dasharray="1.9 1.7"/><rect x="1.5" y="2.5" width="327" height="146.2" fill="none" stroke="#c0c0c0" stroke-width="1"/><line x1="1" y1="99.3" x2="328" y2="99.3" stroke="#b8b8b8" stroke-width="1.8"/><line x1="4.0" y1="53.4" x2="4.0" y2="57.4" stroke="#10d010"/><rect x="2.5" y="54.6" width="3" height="1.6" fill="#000" stroke="#20e020" stroke-width=".9"/><line x1="9.2" y1="53.7" x2="9.2" y2="57.7" stroke="#10d010"/><rect x="7.7" y="54.9" width="3" height="1.6" fill="#e0ffe0" stroke="#20e020" stroke-width=".9"/><line x1="14.3" y1="53.9" x2="14.3" y2="57.9" stroke="#10d010"/><rect x="12.8" y="55.1" width="3" height="1.6" fill="#e0ffe0" stroke="#20e020" stroke-width=".9"/><line x1="19.5" y1="54.3" x2="19.5" y2="58.3" stroke="#10d010"/><rect x="18.0" y="55.5" width="3" height="1.6" fill="#000" stroke="#20e020" stroke-width=".9"/><line x1="24.6" y1="53.7" x2="24.6" y2="57.7" stroke="#10d010"/><rect x="23.1" y="54.9" width="3" height="1.6" fill="#e0ffe0" stroke="#20e020" stroke-width=".9"/><line x1="29.8" y1="54.3" x2="29.8" y2="58.3" stroke="#10d010"/><rect x="28.3" y="55.5" width="3" height="1.6" fill="#e0ffe0" stroke="#20e020" stroke-width=".9"/><line x1="35.0" y1="51.6" x2="35.0" y2="55.6" stroke="#10d010"/><rect x="33.5" y="52.8" width="3" height="1.6" fill="#000" stroke="#20e020" stroke-width=".9"/><line x1="40.1" y1="52.9" x2="40.1" y2="56.9" stroke="#10d010"/><rect x="38.6" y="54.1" width="3" height="1.6" fill="#000" stroke="#20e020" stroke-width=".9"/><line x1="45.3" y1="54.3" x2="45.3" y2="58.3" stroke="#10d010"/><rect x="43.8" y="55.5" width="3" height="1.6" fill="#e0ffe0" stroke="#20e020" stroke-width=".9"/><line x1="50.4" y1="53.4" x2="50.4" y2="57.4" stroke="#10d010"/><rect x="48.9" y="54.6" width="3" height="1.6" fill="#000" stroke="#20e020" stroke-width=".9"/><line x1="55.6" y1="54.2" x2="55.6" y2="58.2" stroke="#10d010"/><rect x="54.1" y="55.4" width="3" height="1.6" fill="#000" stroke="#20e020" stroke-width=".9"/><line x1="60.8" y1="51.8" x2="60.8" y2="55.8" stroke="#10d010"/><rect x="59.3" y="53.0" width="3" height="1.6" fill="#000" stroke="#20e020" stroke-width=".9"/><line x1="65.9" y1="52.9" x2="65.9" y2="56.9" stroke="#10d010"/><rect x="64.4" y="54.1" width="3" height="1.6" fill="#e0ffe0" stroke="#20e020" stroke-width=".9"/><line x1="71.1" y1="52.2" x2="71.1" y2="56.2" stroke="#10d010"/><rect x="69.6" y="53.4" width="3" height="1.6" fill="#000" stroke="#20e020" stroke-width=".9"/><line x1="76.2" y1="53.1" x2="76.2" y2="57.1" stroke="#10d010"/><rect x="74.7" y="54.3" width="3" height="1.6" fill="#000" stroke="#20e020" stroke-width=".9"/><line x1="81.4" y1="53.2" x2="81.4" y2="57.2" stroke="#10d010"/><rect x="79.9" y="54.4" width="3" height="1.6" fill="#000" stroke="#20e020" stroke-width=".9"/><line x1="86.6" y1="51.5" x2="86.6" y2="55.5" stroke="#10d010"/><rect x="85.1" y="52.7" width="3" height="1.6" fill="#000" stroke="#20e020" stroke-width=".9"/><line x1="91.7" y1="52.2" x2="91.7" y2="56.2" stroke="#10d010"/><rect x="90.2" y="53.4" width="3" height="1.6" fill="#e0ffe0" stroke="#20e020" stroke-width=".9"/><line x1="96.9" y1="52.3" x2="96.9" y2="56.3" stroke="#10d010"/><rect x="95.4" y="53.5" width="3" height="1.6" fill="#e0ffe0" stroke="#20e020" stroke-width=".9"/><line x1="102.0" y1="54.2" x2="102.0" y2="58.2" stroke="#10d010"/><rect x="100.5" y="55.4" width="3" height="1.6" fill="#e0ffe0" stroke="#20e020" stroke-width=".9"/><line x1="107.2" y1="53.8" x2="107.2" y2="57.8" stroke="#10d010"/><rect x="105.7" y="55.0" width="3" height="1.6" fill="#e0ffe0" stroke="#20e020" stroke-width=".9"/><line x1="112.4" y1="52.0" x2="112.4" y2="56.0" stroke="#10d010"/><rect x="110.9" y="53.2" width="3" height="1.6" fill="#e0ffe0" stroke="#20e020" stroke-width=".9"/><line x1="117.5" y1="53.9" x2="117.5" y2="57.9" stroke="#10d010"/><rect x="116.0" y="55.1" width="3" height="1.6" fill="#e0ffe0" stroke="#20e020" stroke-width=".9"/><line x1="122.7" y1="51.9" x2="122.7" y2="55.9" stroke="#10d010"/><rect x="121.2" y="53.1" width="3" height="1.6" fill="#000" stroke="#20e020" stroke-width=".9"/><line x1="128.0" y1="22.0" x2="128.0" y2="34.0" stroke="#10d010"/><rect x="126.5" y="26.0" width="3" height="6.0" fill="#000" stroke="#20e020" stroke-width=".9"/><line x1="132.5" y1="16.0" x2="132.5" y2="26.0" stroke="#10d010"/><rect x="131.0" y="18.0" width="3" height="6.0" fill="#000" stroke="#20e020" stroke-width=".9"/><line x1="137.6" y1="15.0" x2="137.6" y2="19.0" stroke="#10d010"/><rect x="136.1" y="16.5" width="3" height="1.0" fill="#000" stroke="#20e020" stroke-width=".9"/><line x1="142.7" y1="16.0" x2="142.7" y2="22.0" stroke="#10d010"/><rect x="141.2" y="17.0" width="3" height="4.5" fill="#e0ffe0" stroke="#20e020" stroke-width=".9"/><line x1="147.8" y1="14.0" x2="147.8" y2="23.0" stroke="#10d010"/><rect x="146.3" y="15.5" width="3" height="6.9" fill="#000" stroke="#20e020" stroke-width=".9"/><line x1="153.0" y1="13.0" x2="153.0" y2="16.0" stroke="#10d010"/><rect x="151.5" y="14.0" width="3" height="1.5" fill="#000" stroke="#20e020" stroke-width=".9"/><line x1="158.2" y1="12.0" x2="158.2" y2="15.0" stroke="#10d010"/><rect x="156.7" y="12.8" width="3" height="1.2" fill="#000" stroke="#20e020" stroke-width=".9"/><line x1="163.4" y1="21.5" x2="163.4" y2="24.5" stroke="#10d010"/><rect x="161.9" y="22.6" width="3" height="1.2" fill="#000" stroke="#20e020" stroke-width=".9"/><line x1="168.5" y1="21.0" x2="168.5" y2="25.0" stroke="#10d010"/><rect x="167.0" y="22.6" width="3" height="1.2" fill="#000" stroke="#20e020" stroke-width=".9"/><line x1="173.7" y1="22.0" x2="173.7" y2="25.0" stroke="#10d010"/><rect x="172.2" y="23.0" width="3" height="1.4" fill="#e0ffe0" stroke="#20e020" stroke-width=".9"/><line x1="178.9" y1="23.0" x2="178.9" y2="26.0" stroke="#10d010"/><rect x="177.4" y="24.0" width="3" height="1.4" fill="#000" stroke="#20e020" stroke-width=".9"/><line x1="184.0" y1="24.0" x2="184.0" y2="27.0" stroke="#10d010"/><rect x="182.5" y="25.0" width="3" height="1.2" fill="#000" stroke="#20e020" stroke-width=".9"/><line x1="189.2" y1="24.0" x2="189.2" y2="32.0" stroke="#10d010"/><rect x="187.7" y="25.0" width="3" height="6.0" fill="#e0ffe0" stroke="#20e020" stroke-width=".9"/><line x1="194.4" y1="26.5" x2="194.4" y2="31.5" stroke="#10d010"/><rect x="192.9" y="28.4" width="3" height="2.6" fill="#000" stroke="#20e020" stroke-width=".9"/><line x1="199.6" y1="27.0" x2="199.6" y2="30.0" stroke="#10d010"/><rect x="198.1" y="28.0" width="3" height="1.0" fill="#000" stroke="#20e020" stroke-width=".9"/><line x1="204.7" y1="28.5" x2="204.7" y2="33.0" stroke="#10d010"/><rect x="203.2" y="29.3" width="3" height="3.1" fill="#e0ffe0" stroke="#20e020" stroke-width=".9"/><line x1="209.9" y1="31.0" x2="209.9" y2="37.0" stroke="#10d010"/><rect x="208.4" y="31.8" width="3" height="4.3" fill="#e0ffe0" stroke="#20e020" stroke-width=".9"/><line x1="215.0" y1="35.0" x2="215.0" y2="47.0" stroke="#10d010"/><rect x="213.5" y="36.1" width="3" height="9.5" fill="#e0ffe0" stroke="#20e020" stroke-width=".9"/><line x1="220.2" y1="44.0" x2="220.2" y2="60.0" stroke="#10d010"/><rect x="218.7" y="45.6" width="3" height="12.9" fill="#e0ffe0" stroke="#20e020" stroke-width=".9"/><line x1="225.4" y1="57.0" x2="225.4" y2="68.0" stroke="#10d010"/><rect x="223.9" y="58.5" width="3" height="8.6" fill="#e0ffe0" stroke="#20e020" stroke-width=".9"/><line x1="230.5" y1="63.7" x2="230.5" y2="70.6" stroke="#10d010"/><rect x="229.0" y="65.8" width="3" height="1.2" fill="#000" stroke="#20e020" stroke-width=".9"/><line x1="235.7" y1="65.5" x2="235.7" y2="68.5" stroke="#10d010"/><rect x="234.2" y="66.6" width="3" height="1.0" fill="#000" stroke="#20e020" stroke-width=".9"/><line x1="240.9" y1="65.0" x2="240.9" y2="70.0" stroke="#10d010"/><rect x="239.4" y="67.0" width="3" height="1.2" fill="#000" stroke="#20e020" stroke-width=".9"/><line x1="246.0" y1="65.5" x2="246.0" y2="78.5" stroke="#10d010"/><rect x="244.5" y="66.3" width="3" height="11.2" fill="#e0ffe0" stroke="#20e020" stroke-width=".9"/><line x1="251.2" y1="76.5" x2="251.2" y2="84.0" stroke="#10d010"/><rect x="249.7" y="77.5" width="3" height="5.5" fill="#e0ffe0" stroke="#20e020" stroke-width=".9"/><line x1="255.8" y1="82.0" x2="255.8" y2="85.0" stroke="#10d010"/><rect x="254.3" y="83.0" width="3" height="1.0" fill="#000" stroke="#20e020" stroke-width=".9"/><line x1="260.6" y1="84.5" x2="260.6" y2="87.5" stroke="#10d010"/><rect x="259.1" y="85.5" width="3" height="1.0" fill="#000" stroke="#20e020" stroke-width=".9"/><line x1="265.8" y1="84.5" x2="265.8" y2="87.5" stroke="#10d010"/><rect x="264.3" y="85.5" width="3" height="1.0" fill="#000" stroke="#20e020" stroke-width=".9"/><line x1="271.0" y1="89.5" x2="271.0" y2="92.5" stroke="#10d010"/><rect x="269.5" y="90.5" width="3" height="1.0" fill="#000" stroke="#20e020" stroke-width=".9"/><line x1="276.0" y1="89.5" x2="276.0" y2="92.5" stroke="#10d010"/><rect x="274.5" y="90.5" width="3" height="1.0" fill="#000" stroke="#20e020" stroke-width=".9"/><line x1="281.0" y1="89.5" x2="281.0" y2="92.5" stroke="#10d010"/><rect x="279.5" y="90.5" width="3" height="1.0" fill="#000" stroke="#20e020" stroke-width=".9"/><line x1="286.0" y1="89.5" x2="286.0" y2="92.5" stroke="#10d010"/><rect x="284.5" y="90.5" width="3" height="1.0" fill="#000" stroke="#20e020" stroke-width=".9"/><line x1="291.0" y1="87.0" x2="291.0" y2="91.0" stroke="#10d010"/><rect x="289.5" y="88.5" width="3" height="1.0" fill="#000" stroke="#20e020" stroke-width=".9"/><line x1="296.4" y1="89.0" x2="296.4" y2="92.5" stroke="#10d010"/><rect x="294.9" y="90.3" width="3" height="1.0" fill="#000" stroke="#20e020" stroke-width=".9"/><line x1="301.9" y1="89.5" x2="301.9" y2="93.5" stroke="#10d010"/><rect x="300.4" y="91.0" width="3" height="1.0" fill="#000" stroke="#20e020" stroke-width=".9"/><line x1="307.3" y1="89.0" x2="307.3" y2="92.5" stroke="#10d010"/><rect x="305.8" y="90.3" width="3" height="1.0" fill="#000" stroke="#20e020" stroke-width=".9"/><line x1="312.2" y1="86.0" x2="312.2" y2="92.0" stroke="#10d010"/><rect x="310.7" y="87.0" width="3" height="4.0" fill="#000" stroke="#20e020" stroke-width=".9"/><line x1="317.4" y1="82.5" x2="317.4" y2="89.0" stroke="#10d010"/><rect x="315.9" y="83.5" width="3" height="4.5" fill="#000" stroke="#20e020" stroke-width=".9"/><path d="M322.4 81.5l2.5 2.5-2.5 2.5-2.5-2.5z" fill="#5aa0e8" stroke="#ddd" stroke-width=".5"/><line x1="1" y1="81.69999999999999" x2="328" y2="81.69999999999999" stroke="#20a020" stroke-dasharray="4 2"/><line x1="1" y1="82.80000000000001" x2="328" y2="82.80000000000001" stroke="#6c7e90" stroke-width=".8"/><text x="6.5" y="80" font-size="6.3" fill="#b8b8b8" font-family="Liberation Sans" text-anchor="start">#11392292 buy 3.00</text><path d="M219.39999999999998 88.4h16l2 3.5-2 3.5h-16z" fill="#d8f2f2" stroke="#999" stroke-width=".5"/><line x1="219.89999999999998" y1="95.4" x2="219.89999999999998" y2="99.30000000000001" stroke="#aaa" stroke-width=".6"/><text x="220.59999999999997" y="94.4" font-size="6.0" fill="#102030" font-family="Liberation Sans" text-anchor="start">11:30</text><path d="M245 88.4h2.5l2 3.5-2 3.5h-2.5z" fill="#d8f2f2" stroke="#999" stroke-width=".5"/><line x1="245.5" y1="95.4" x2="245.5" y2="99.30000000000001" stroke="#aaa" stroke-width=".6"/><text x="245.8" y="94.4" font-size="6.0" fill="#102030" font-family="Liberation Sans" text-anchor="start">1</text><path d="M250.20000000000005 88.4h2.5l2 3.5-2 3.5h-2.5z" fill="#d8f2f2" stroke="#999" stroke-width=".5"/><line x1="250.70000000000005" y1="95.4" x2="250.70000000000005" y2="99.30000000000001" stroke="#aaa" stroke-width=".6"/><text x="251.00000000000006" y="94.4" font-size="6.0" fill="#102030" font-family="Liberation Sans" text-anchor="start">1</text><path d="M255.20000000000005 88.4h13.6l2 3.5-2 3.5h-13.6z" fill="#f4f4f4" stroke="#999" stroke-width=".5"/><line x1="255.70000000000005" y1="95.4" x2="255.70000000000005" y2="99.30000000000001" stroke="#aaa" stroke-width=".6"/><text x="256.40000000000003" y="94.4" font-size="6.0" fill="#102030" font-family="Liberation Sans" text-anchor="start">18:30</text><path d="M270.79999999999995 88.4h15.8l2 3.5-2 3.5h-15.8z" fill="#f4f4f4" stroke="#999" stroke-width=".5"/><line x1="271.29999999999995" y1="95.4" x2="271.29999999999995" y2="99.30000000000001" stroke="#aaa" stroke-width=".6"/><text x="271.99999999999994" y="94.4" font-size="6.0" fill="#102030" font-family="Liberation Sans" text-anchor="start">21:00</text><polyline points="68.4,122.7 70.7,122.2 74.0,121.4 77.6,120.3 80.5,118.7 82.4,116.0 84.0,112.6 85.3,109.2 86.5,106.6 87.6,105.0 88.5,103.9 89.4,103.4 90.5,103.8 91.9,105.1 93.4,107.4 95.0,110.1 96.5,112.6 98.0,115.4 99.4,118.5 100.9,121.1 102.6,122.7 104.4,122.7 106.3,121.6 108.4,120.0 110.6,118.7 113.0,117.7 115.5,116.7 118.1,115.6 120.7,114.6 123.2,113.4 125.8,112.0 128.4,110.9 130.7,110.6 132.8,111.5 134.8,113.3 136.7,115.2 138.8,116.7 141.1,117.5 143.7,118.0 146.3,118.4 148.8,118.7 151.3,118.7 153.9,118.4 156.4,118.3 158.9,118.7 161.4,119.8 163.8,121.5 166.3,123.2 168.9,124.7 171.9,125.6 175.1,126.3 178.2,126.9 181.0,127.9 183.2,129.5 185.0,131.5 186.9,133.4 189.1,134.8 191.9,135.1 195.1,134.9 198.3,134.6 201.1,134.8 203.3,135.4 205.1,136.4 207.0,137.6 209.2,138.8 212.0,140.2 215.1,142.0 218.3,143.4 221.2,144.0 223.9,143.4 226.4,141.9 228.8,140.2 231.3,138.8 233.7,137.9 235.9,137.2 238.4,136.6 241.4,136.0 244.9,135.4 249.0,134.9 253.3,134.4 257.4,134.0 261.5,133.6 265.5,133.3 269.5,133.1 273.5,132.7 277.6,132.2 281.6,131.7 285.6,131.1 289.6,130.7 293.8,130.8 298.2,131.1 302.3,131.3 305.7,130.7 308.2,129.4 310.1,127.5 311.8,125.2 313.8,122.7 316.4,119.7 319.3,116.2 322.0,112.9 323.8,110.6" fill="none" stroke="#28a8a8" stroke-width="1"/><line x1="328" y1="12.700000000000003" x2="331" y2="12.700000000000003" stroke="#c0c0c0"/><text x="332" y="15.100000000000003" font-size="6.1" fill="#e8e8e8" font-family="Liberation Sans" text-anchor="start">1.3210</text><line x1="328" y1="34.599999999999994" x2="331" y2="34.599999999999994" stroke="#c0c0c0"/><text x="332" y="36.99999999999999" font-size="6.1" fill="#e8e8e8" font-family="Liberation Sans" text-anchor="start">1.3150</text><line x1="328" y1="56.30000000000001" x2="331" y2="56.30000000000001" stroke="#c0c0c0"/><text x="332" y="58.70000000000001" font-size="6.1" fill="#e8e8e8" font-family="Liberation Sans" text-anchor="start">1.3090</text><line x1="328" y1="76.4" x2="331" y2="76.4" stroke="#c0c0c0"/><text x="332" y="78.80000000000001" font-size="6.1" fill="#e8e8e8" font-family="Liberation Sans" text-anchor="start">1.3030</text><rect x="330" y="78.80000000000001" width="22" height="7.4" fill="#8898aa"/><text x="331.5" y="84.9" font-size="6.1" fill="#0a0a0a" font-family="Liberation Sans" text-anchor="start">1.3014</text><text x="332" y="105.0" font-size="6.1" fill="#e8e8e8" font-family="Liberation Sans" text-anchor="start">344.00</text><text x="332" y="121.1" font-size="6.1" fill="#e8e8e8" font-family="Liberation Sans" text-anchor="start">100.00</text><text x="332" y="128.3" font-size="6.1" fill="#e8e8e8" font-family="Liberation Sans" text-anchor="start">0.00</text><text x="332" y="136.4" font-size="6.1" fill="#e8e8e8" font-family="Liberation Sans" text-anchor="start">-100.00</text><text x="332" y="146.4" font-size="6.1" fill="#e8e8e8" font-family="Liberation Sans" text-anchor="start">-294.07</text><line x1="45.5" y1="148.7" x2="45.5" y2="151.5" stroke="#c0c0c0"/><text x="45.5" y="156.7" font-size="5.95" fill="#e8e8e8" font-family="Liberation Sans" text-anchor="start">31 Jan 01:00</text><line x1="86.5" y1="148.7" x2="86.5" y2="151.5" stroke="#c0c0c0"/><text x="86.5" y="156.7" font-size="5.95" fill="#e8e8e8" font-family="Liberation Sans" text-anchor="start">31 Jan 09:00</text><line x1="127.5" y1="148.7" x2="127.5" y2="151.5" stroke="#c0c0c0"/><text x="127.5" y="156.7" font-size="5.95" fill="#e8e8e8" font-family="Liberation Sans" text-anchor="start">31 Jan 17:00</text><line x1="168.5" y1="148.7" x2="168.5" y2="151.5" stroke="#c0c0c0"/><text x="168.5" y="156.7" font-size="5.95" fill="#e8e8e8" font-family="Liberation Sans" text-anchor="start">3 Feb 01:00</text><line x1="209.5" y1="148.7" x2="209.5" y2="151.5" stroke="#c0c0c0"/><text x="209.5" y="156.7" font-size="5.95" fill="#e8e8e8" font-family="Liberation Sans" text-anchor="start">3 Feb 09:00</text><line x1="250.5" y1="148.7" x2="250.5" y2="151.5" stroke="#c0c0c0"/><text x="250.5" y="156.7" font-size="5.95" fill="#e8e8e8" font-family="Liberation Sans" text-anchor="start">3 Feb 17:00</text><line x1="291.5" y1="148.7" x2="291.5" y2="151.5" stroke="#c0c0c0"/><text x="291.5" y="156.7" font-size="5.95" fill="#e8e8e8" font-family="Liberation Sans" text-anchor="start">4 Feb 01:00</text></svg>
<svg class="a" style="left:538.7px;top:79px;" width="21" height="9" viewBox="0 0 21 9"><rect x="0.5" y="0.5" width="8" height="7.5" fill="#f4f4f8" stroke="#aab" stroke-width=".6"/><rect x="1.5" y="1.5" width="2.5" height="6" fill="#f09090"/><rect x="4.5" y="1.5" width="3.5" height="6" fill="#b0c0f0"/><rect x="11" y="0.5" width="8" height="7.5" fill="#3048c8"/><rect x="15" y="3.5" width="4" height="4.5" fill="#e03030"/><circle cx="15" cy="2" r="1.5" fill="#ccc"/></svg>
<div class="t" style="top:79.27px;font-size:7.2px;color:#e8e8e8;left:562.2px;transform:scaleX(0.86);transform-origin:0 0;">GBPUSD,H1</div>
<div class="a" style="left:538.2px;top:89.2px;width:27.5px;height:13.7px;background:linear-gradient(#f04a4a,#dc2a2a);border-bottom:1px solid #a01010;"></div>
<div class="t" style="top:91.58px;font-size:8.6px;color:#ffe8e8;left:351.70000000000005px;width:400px;text-align:center;transform:scaleX(0.75);transform-origin:50% 0;">SELL</div>
<div class="a" style="left:567.9000000000001px;top:89.2px;width:13px;height:12.5px;background:#dcdcdc;border:1px solid #a8a8a8;border-right:none;"></div>
<svg class="a" style="left:572.2px;top:94px;" width="6" height="4" viewBox="0 0 6 4"><path d="M0 0h5l-2.5 3z" fill="#222"/></svg>
<div class="a" style="left:580.7px;top:89.2px;width:36.5px;height:12.5px;background:#ffffff;border-top:1px solid #a8a8a8;border-bottom:1px solid #a8a8a8;"></div>
<div class="t" style="top:91.30px;font-size:8.4px;color:#222;right:284.29999999999995px;transform:scaleX(0.9);transform-origin:100% 0;">3.00</div>
<div class="a" style="left:617.1px;top:89.2px;width:12.3px;height:12.5px;background:#dcdcdc;border:1px solid #a8a8a8;border-left:none;"></div>
<svg class="a" style="left:620.7px;top:93.5px;" width="6" height="4" viewBox="0 0 6 4"><path d="M0 3h5L2.5 0z" fill="#222"/></svg>
<div class="a" style="left:631.2px;top:89.2px;width:26.8px;height:13.7px;background:linear-gradient(#f04a4a,#dc2a2a);border-bottom:1px solid #a01010;"></div>
<div class="t" style="top:91.58px;font-size:8.6px;color:#ffe8e8;left:444.70000000000005px;width:400px;text-align:center;transform:scaleX(0.75);transform-origin:50% 0;">BUY</div>
<div class="a" style="left:538.2px;top:103.6px;width:60px;height:21.7px;background:linear-gradient(#e83838,#b80e0e);"></div>
<div class="a" style="left:600.4000000000001px;top:103.6px;width:57.6px;height:21.7px;background:linear-gradient(#e83838,#b80e0e);"></div>
<div class="t" style="top:116.01px;font-size:8.2px;color:#fff;font-weight:bold;right:334.29999999999995px;transform:scaleX(0.9);transform-origin:100% 0;">1.30</div>
<div class="t" style="top:105.00px;font-size:20px;color:#fff;left:568.7px;transform:scaleX(0.9);transform-origin:0 0;">14</div>
<div class="t" style="top:116.01px;font-size:8.2px;color:#fff;font-weight:bold;right:272.0px;transform:scaleX(0.9);transform-origin:100% 0;">1.30</div>
<div class="t" style="top:105.00px;font-size:20px;color:#fff;left:629.9000000000001px;transform:scaleX(0.9);transform-origin:0 0;">17</div>
<div class="a" style="left:161px;top:241px;width:367px;height:184px;background:#ffffff;border:1px solid #8c8c8c;"></div>
<svg class="a" style="left:165.5px;top:244.5px;" width="12" height="11" viewBox="0 0 12 11"><rect x="0.5" y="0.5" width="9" height="7" fill="#dceefc" stroke="#2f8ad8"/><rect x="2.5" y="3.5" width="9" height="7" fill="#eef6fd" stroke="#2f8ad8"/><rect x="2.5" y="3.5" width="9" height="2" fill="#2f8ad8"/><path d="M4 9l2-2 2 1 2-2" stroke="#e8602a" fill="none" stroke-width="1.1"/></svg>
<div class="t" style="top:246.60px;font-size:8.4px;color:#222;left:179.8px;transform:scaleX(0.9);transform-origin:0 0;">USDCHF,H1</div>
<div class="a" style="left:166px;top:260px;width:358px;height:163px;background:#000;"></div>
<svg class="a" style="left:166px;top:260px;" width="358" height="163" viewBox="0 0 358 163"><line x1="21.69999999999999" y1="2" x2="21.69999999999999" y2="148" stroke="#b4b4b4" stroke-width="1" stroke-dasharray="1.4 2.4"/><line x1="42.29999999999999" y1="2" x2="42.29999999999999" y2="148" stroke="#b4b4b4" stroke-width="1" stroke-dasharray="1.4 2.4"/><line x1="62.89999999999999" y1="2" x2="62.89999999999999" y2="148" stroke="#b4b4b4" stroke-width="1" stroke-dasharray="1.4 2.4"/><line x1="83.5" y1="2" x2="83.5" y2="148" stroke="#b4b4b4" stroke-width="1" stroke-dasharray="1.4 2.4"/><line x1="104.1" y1="2" x2="104.1" y2="148" stroke="#b4b4b4" stroke-width="1" stroke-dasharray="1.4 2.4"/><line x1="124.69999999999999" y1="2" x2="124.69999999999999" y2="148" stroke="#b4b4b4" stroke-width="1" stroke-dasharray="1.4 2.4"/><line x1="145.3" y1="2" x2="145.3" y2="148" stroke="#b4b4b4" stroke-width="1" stroke-dasharray="1.4 2.4"/><line x1="165.9" y1="2" x2="165.9" y2="148" stroke="#b4b4b4" stroke-width="1" stroke-dasharray="1.4 2.4"/><line x1="186.5" y1="2" x2="186.5" y2="148" stroke="#b4b4b4" stroke-width="1" stroke-dasharray="1.4 2.4"/><line x1="207.1" y1="2" x2="207.1" y2="148" stroke="#b4b4b4" stroke-width="1" stroke-dasharray="1.4 2.4"/><line x1="227.7" y1="2" x2="227.7" y2="148" stroke="#b4b4b4" stroke-width="1" stroke-dasharray="1.4 2.4"/><line x1="248.3" y1="2" x2="248.3" y2="148" stroke="#b4b4b4" stroke-width="1" stroke-dasharray="1.4 2.4"/><line x1="268.9" y1="2" x2="268.9" y2="148" stroke="#b4b4b4" stroke-width="1" stroke-dasharray="1.4 2.4"/><line x1="289.5" y1="2" x2="289.5" y2="148" stroke="#b4b4b4" stroke-width="1" stroke-dasharray="1.4 2.4"/><line x1="310.1" y1="2" x2="310.1" y2="148" stroke="#b4b4b4" stroke-width="1" stroke-dasharray="1.4 2.4"/><line x1="1" y1="76" x2="327" y2="76" stroke="#b4b4b4" stroke-width="1" stroke-dasharray="1.9 1.7"/><line x1="1" y1="101" x2="327" y2="101" stroke="#b4b4b4" stroke-width="1" stroke-dasharray="1.9 1.7"/><line x1="1" y1="126" x2="327" y2="126" stroke="#b4b4b4" stroke-width="1" stroke-dasharray="1.9 1.7"/><line x1="1" y1="51" x2="327" y2="51" stroke="#b4b4b4" stroke-width="1" stroke-dasharray="1.9 1.7"/><line x1="1" y1="26" x2="327" y2="26" stroke="#b4b4b4" stroke-width="1" stroke-dasharray="1.9 1.7"/><rect x="1.5" y="2.5" width="326" height="147" fill="none" stroke="#c0c0c0" stroke-width="1"/><line x1="2.0" y1="80.3" x2="2.0" y2="88.4" stroke="#38c038" stroke-width="1.1"/><line x1="0.7" y1="83.0" x2="2.0" y2="83.0" stroke="#38c038" stroke-width=".7"/><line x1="2.0" y1="81.4" x2="3.3" y2="81.4" stroke="#38c038" stroke-width=".7"/><line x1="4.8" y1="80.9" x2="4.8" y2="93.4" stroke="#38c038" stroke-width="1.1"/><line x1="3.5" y1="81.4" x2="4.8" y2="81.4" stroke="#38c038" stroke-width=".7"/><line x1="4.8" y1="89.1" x2="6.0" y2="89.1" stroke="#38c038" stroke-width=".7"/><line x1="7.5" y1="85.6" x2="7.5" y2="98.9" stroke="#38c038" stroke-width="1.1"/><line x1="6.2" y1="89.1" x2="7.5" y2="89.1" stroke="#38c038" stroke-width=".7"/><line x1="7.5" y1="96.2" x2="8.8" y2="96.2" stroke="#38c038" stroke-width=".7"/><line x1="10.2" y1="90.7" x2="10.2" y2="104.9" stroke="#38c038" stroke-width="1.1"/><line x1="8.9" y1="96.2" x2="10.2" y2="96.2" stroke="#38c038" stroke-width=".7"/><line x1="10.2" y1="98.4" x2="11.6" y2="98.4" stroke="#38c038" stroke-width=".7"/><line x1="13.0" y1="97.1" x2="13.0" y2="113.2" stroke="#38c038" stroke-width="1.1"/><line x1="11.7" y1="98.4" x2="13.0" y2="98.4" stroke="#38c038" stroke-width=".7"/><line x1="13.0" y1="108.0" x2="14.3" y2="108.0" stroke="#38c038" stroke-width=".7"/><line x1="15.8" y1="102.3" x2="15.8" y2="114.5" stroke="#38c038" stroke-width="1.1"/><line x1="14.4" y1="108.0" x2="15.8" y2="108.0" stroke="#38c038" stroke-width=".7"/><line x1="15.8" y1="104.6" x2="17.1" y2="104.6" stroke="#38c038" stroke-width=".7"/><line x1="18.5" y1="102.3" x2="18.5" y2="115.6" stroke="#38c038" stroke-width="1.1"/><line x1="17.2" y1="104.6" x2="18.5" y2="104.6" stroke="#38c038" stroke-width=".7"/><line x1="18.5" y1="112.4" x2="19.8" y2="112.4" stroke="#38c038" stroke-width=".7"/><line x1="21.2" y1="107.6" x2="21.2" y2="117.2" stroke="#38c038" stroke-width="1.1"/><line x1="19.9" y1="112.4" x2="21.2" y2="112.4" stroke="#38c038" stroke-width=".7"/><line x1="21.2" y1="112.8" x2="22.6" y2="112.8" stroke="#38c038" stroke-width=".7"/><line x1="24.0" y1="108.6" x2="24.0" y2="125.7" stroke="#38c038" stroke-width="1.1"/><line x1="22.7" y1="112.8" x2="24.0" y2="112.8" stroke="#38c038" stroke-width=".7"/><line x1="24.0" y1="120.5" x2="25.3" y2="120.5" stroke="#38c038" stroke-width=".7"/><line x1="26.8" y1="115.0" x2="26.8" y2="130.3" stroke="#38c038" stroke-width="1.1"/><line x1="25.4" y1="120.5" x2="26.8" y2="120.5" stroke="#38c038" stroke-width=".7"/><line x1="26.8" y1="124.5" x2="28.1" y2="124.5" stroke="#38c038" stroke-width=".7"/><line x1="29.5" y1="121.2" x2="29.5" y2="131.1" stroke="#38c038" stroke-width="1.1"/><line x1="28.2" y1="124.5" x2="29.5" y2="124.5" stroke="#38c038" stroke-width=".7"/><line x1="29.5" y1="128.3" x2="30.8" y2="128.3" stroke="#38c038" stroke-width=".7"/><line x1="32.2" y1="119.8" x2="32.2" y2="134.0" stroke="#38c038" stroke-width="1.1"/><line x1="30.9" y1="128.3" x2="32.2" y2="128.3" stroke="#38c038" stroke-width=".7"/><line x1="32.2" y1="122.8" x2="33.5" y2="122.8" stroke="#38c038" stroke-width=".7"/><line x1="35.0" y1="119.0" x2="35.0" y2="131.0" stroke="#38c038" stroke-width="1.1"/><line x1="33.7" y1="122.8" x2="35.0" y2="122.8" stroke="#38c038" stroke-width=".7"/><line x1="35.0" y1="125.2" x2="36.3" y2="125.2" stroke="#38c038" stroke-width=".7"/><line x1="37.8" y1="114.5" x2="37.8" y2="132.7" stroke="#38c038" stroke-width="1.1"/><line x1="36.5" y1="125.2" x2="37.8" y2="125.2" stroke="#38c038" stroke-width=".7"/><line x1="37.8" y1="120.7" x2="39.0" y2="120.7" stroke="#38c038" stroke-width=".7"/><line x1="40.5" y1="109.1" x2="40.5" y2="127.2" stroke="#38c038" stroke-width="1.1"/><line x1="39.2" y1="120.7" x2="40.5" y2="120.7" stroke="#38c038" stroke-width=".7"/><line x1="40.5" y1="116.5" x2="41.8" y2="116.5" stroke="#38c038" stroke-width=".7"/><line x1="43.2" y1="114.3" x2="43.2" y2="123.1" stroke="#38c038" stroke-width="1.1"/><line x1="42.0" y1="116.5" x2="43.2" y2="116.5" stroke="#38c038" stroke-width=".7"/><line x1="43.2" y1="117.8" x2="44.5" y2="117.8" stroke="#38c038" stroke-width=".7"/><line x1="46.0" y1="112.1" x2="46.0" y2="118.6" stroke="#38c038" stroke-width="1.1"/><line x1="44.7" y1="117.8" x2="46.0" y2="117.8" stroke="#38c038" stroke-width=".7"/><line x1="46.0" y1="115.5" x2="47.3" y2="115.5" stroke="#38c038" stroke-width=".7"/><line x1="48.8" y1="112.9" x2="48.8" y2="121.8" stroke="#38c038" stroke-width="1.1"/><line x1="47.5" y1="115.5" x2="48.8" y2="115.5" stroke="#38c038" stroke-width=".7"/><line x1="48.8" y1="115.3" x2="50.0" y2="115.3" stroke="#38c038" stroke-width=".7"/><line x1="51.5" y1="107.4" x2="51.5" y2="122.8" stroke="#38c038" stroke-width="1.1"/><line x1="50.2" y1="115.3" x2="51.5" y2="115.3" stroke="#38c038" stroke-width=".7"/><line x1="51.5" y1="117.3" x2="52.8" y2="117.3" stroke="#38c038" stroke-width=".7"/><line x1="54.2" y1="109.3" x2="54.2" y2="122.6" stroke="#38c038" stroke-width="1.1"/><line x1="53.0" y1="117.3" x2="54.2" y2="117.3" stroke="#38c038" stroke-width=".7"/><line x1="54.2" y1="114.7" x2="55.5" y2="114.7" stroke="#38c038" stroke-width=".7"/><line x1="57.0" y1="107.0" x2="57.0" y2="118.0" stroke="#38c038" stroke-width="1.1"/><line x1="55.7" y1="114.7" x2="57.0" y2="114.7" stroke="#38c038" stroke-width=".7"/><line x1="57.0" y1="110.0" x2="58.3" y2="110.0" stroke="#38c038" stroke-width=".7"/><line x1="59.8" y1="108.2" x2="59.8" y2="114.3" stroke="#38c038" stroke-width="1.1"/><line x1="58.5" y1="110.0" x2="59.8" y2="110.0" stroke="#38c038" stroke-width=".7"/><line x1="59.8" y1="109.6" x2="61.0" y2="109.6" stroke="#38c038" stroke-width=".7"/><line x1="62.5" y1="103.6" x2="62.5" y2="124.7" stroke="#38c038" stroke-width="1.1"/><line x1="61.2" y1="109.6" x2="62.5" y2="109.6" stroke="#38c038" stroke-width=".7"/><line x1="62.5" y1="119.5" x2="63.8" y2="119.5" stroke="#38c038" stroke-width=".7"/><line x1="65.2" y1="106.8" x2="65.2" y2="126.5" stroke="#38c038" stroke-width="1.1"/><line x1="64.0" y1="119.5" x2="65.2" y2="119.5" stroke="#38c038" stroke-width=".7"/><line x1="65.2" y1="114.8" x2="66.5" y2="114.8" stroke="#38c038" stroke-width=".7"/><line x1="68.0" y1="110.3" x2="68.0" y2="121.4" stroke="#38c038" stroke-width="1.1"/><line x1="66.7" y1="114.8" x2="68.0" y2="114.8" stroke="#38c038" stroke-width=".7"/><line x1="68.0" y1="120.7" x2="69.3" y2="120.7" stroke="#38c038" stroke-width=".7"/><line x1="70.8" y1="114.0" x2="70.8" y2="121.7" stroke="#38c038" stroke-width="1.1"/><line x1="69.5" y1="120.7" x2="70.8" y2="120.7" stroke="#38c038" stroke-width=".7"/><line x1="70.8" y1="116.3" x2="72.0" y2="116.3" stroke="#38c038" stroke-width=".7"/><line x1="73.5" y1="99.2" x2="73.5" y2="116.9" stroke="#38c038" stroke-width="1.1"/><line x1="72.2" y1="116.3" x2="73.5" y2="116.3" stroke="#38c038" stroke-width=".7"/><line x1="73.5" y1="101.4" x2="74.8" y2="101.4" stroke="#38c038" stroke-width=".7"/><line x1="76.2" y1="97.1" x2="76.2" y2="109.2" stroke="#38c038" stroke-width="1.1"/><line x1="75.0" y1="101.4" x2="76.2" y2="101.4" stroke="#38c038" stroke-width=".7"/><line x1="76.2" y1="107.1" x2="77.5" y2="107.1" stroke="#38c038" stroke-width=".7"/><line x1="79.0" y1="99.7" x2="79.0" y2="113.4" stroke="#38c038" stroke-width="1.1"/><line x1="77.7" y1="107.1" x2="79.0" y2="107.1" stroke="#38c038" stroke-width=".7"/><line x1="79.0" y1="103.9" x2="80.3" y2="103.9" stroke="#38c038" stroke-width=".7"/><line x1="81.8" y1="102.2" x2="81.8" y2="105.6" stroke="#38c038" stroke-width="1.1"/><line x1="80.5" y1="103.9" x2="81.8" y2="103.9" stroke="#38c038" stroke-width=".7"/><line x1="81.8" y1="104.1" x2="83.0" y2="104.1" stroke="#38c038" stroke-width=".7"/><line x1="84.5" y1="99.8" x2="84.5" y2="109.2" stroke="#38c038" stroke-width="1.1"/><line x1="83.2" y1="104.1" x2="84.5" y2="104.1" stroke="#38c038" stroke-width=".7"/><line x1="84.5" y1="107.1" x2="85.8" y2="107.1" stroke="#38c038" stroke-width=".7"/><line x1="87.2" y1="98.8" x2="87.2" y2="110.8" stroke="#38c038" stroke-width="1.1"/><line x1="86.0" y1="107.1" x2="87.2" y2="107.1" stroke="#38c038" stroke-width=".7"/><line x1="87.2" y1="103.7" x2="88.5" y2="103.7" stroke="#38c038" stroke-width=".7"/><line x1="90.0" y1="98.6" x2="90.0" y2="113.5" stroke="#38c038" stroke-width="1.1"/><line x1="88.7" y1="103.7" x2="90.0" y2="103.7" stroke="#38c038" stroke-width=".7"/><line x1="90.0" y1="111.5" x2="91.3" y2="111.5" stroke="#38c038" stroke-width=".7"/><line x1="92.8" y1="105.2" x2="92.8" y2="116.5" stroke="#38c038" stroke-width="1.1"/><line x1="91.5" y1="111.5" x2="92.8" y2="111.5" stroke="#38c038" stroke-width=".7"/><line x1="92.8" y1="109.2" x2="94.0" y2="109.2" stroke="#38c038" stroke-width=".7"/><line x1="95.5" y1="99.6" x2="95.5" y2="116.8" stroke="#38c038" stroke-width="1.1"/><line x1="94.2" y1="109.2" x2="95.5" y2="109.2" stroke="#38c038" stroke-width=".7"/><line x1="95.5" y1="107.9" x2="96.8" y2="107.9" stroke="#38c038" stroke-width=".7"/><line x1="98.2" y1="103.8" x2="98.2" y2="110.8" stroke="#38c038" stroke-width="1.1"/><line x1="97.0" y1="107.9" x2="98.2" y2="107.9" stroke="#38c038" stroke-width=".7"/><line x1="98.2" y1="106.3" x2="99.5" y2="106.3" stroke="#38c038" stroke-width=".7"/><line x1="101.0" y1="95.5" x2="101.0" y2="111.1" stroke="#38c038" stroke-width="1.1"/><line x1="99.7" y1="106.3" x2="101.0" y2="106.3" stroke="#38c038" stroke-width=".7"/><line x1="101.0" y1="99.5" x2="102.3" y2="99.5" stroke="#38c038" stroke-width=".7"/><line x1="103.8" y1="91.0" x2="103.8" y2="110.3" stroke="#38c038" stroke-width="1.1"/><line x1="102.5" y1="99.5" x2="103.8" y2="99.5" stroke="#38c038" stroke-width=".7"/><line x1="103.8" y1="103.7" x2="105.0" y2="103.7" stroke="#38c038" stroke-width=".7"/><line x1="106.5" y1="99.0" x2="106.5" y2="107.0" stroke="#38c038" stroke-width="1.1"/><line x1="105.2" y1="103.7" x2="106.5" y2="103.7" stroke="#38c038" stroke-width=".7"/><line x1="106.5" y1="101.0" x2="107.8" y2="101.0" stroke="#38c038" stroke-width=".7"/><line x1="109.2" y1="94.1" x2="109.2" y2="111.2" stroke="#38c038" stroke-width="1.1"/><line x1="108.0" y1="101.0" x2="109.2" y2="101.0" stroke="#38c038" stroke-width=".7"/><line x1="109.2" y1="105.8" x2="110.5" y2="105.8" stroke="#38c038" stroke-width=".7"/><line x1="112.0" y1="89.5" x2="112.0" y2="113.4" stroke="#38c038" stroke-width="1.1"/><line x1="110.7" y1="105.8" x2="112.0" y2="105.8" stroke="#38c038" stroke-width=".7"/><line x1="112.0" y1="95.9" x2="113.3" y2="95.9" stroke="#38c038" stroke-width=".7"/><line x1="114.8" y1="93.7" x2="114.8" y2="106.6" stroke="#38c038" stroke-width="1.1"/><line x1="113.5" y1="95.9" x2="114.8" y2="95.9" stroke="#38c038" stroke-width=".7"/><line x1="114.8" y1="99.4" x2="116.0" y2="99.4" stroke="#38c038" stroke-width=".7"/><line x1="117.5" y1="93.9" x2="117.5" y2="108.0" stroke="#38c038" stroke-width="1.1"/><line x1="116.2" y1="99.4" x2="117.5" y2="99.4" stroke="#38c038" stroke-width=".7"/><line x1="117.5" y1="103.2" x2="118.8" y2="103.2" stroke="#38c038" stroke-width=".7"/><line x1="120.2" y1="88.8" x2="120.2" y2="106.9" stroke="#38c038" stroke-width="1.1"/><line x1="119.0" y1="103.2" x2="120.2" y2="103.2" stroke="#38c038" stroke-width=".7"/><line x1="120.2" y1="92.8" x2="121.5" y2="92.8" stroke="#38c038" stroke-width=".7"/><line x1="123.0" y1="81.8" x2="123.0" y2="99.3" stroke="#38c038" stroke-width="1.1"/><line x1="121.7" y1="92.8" x2="123.0" y2="92.8" stroke="#38c038" stroke-width=".7"/><line x1="123.0" y1="88.7" x2="124.3" y2="88.7" stroke="#38c038" stroke-width=".7"/><line x1="125.8" y1="84.5" x2="125.8" y2="91.9" stroke="#38c038" stroke-width="1.1"/><line x1="124.5" y1="88.7" x2="125.8" y2="88.7" stroke="#38c038" stroke-width=".7"/><line x1="125.8" y1="89.5" x2="127.0" y2="89.5" stroke="#38c038" stroke-width=".7"/><line x1="128.5" y1="78.4" x2="128.5" y2="94.8" stroke="#38c038" stroke-width="1.1"/><line x1="127.2" y1="89.5" x2="128.5" y2="89.5" stroke="#38c038" stroke-width=".7"/><line x1="128.5" y1="86.6" x2="129.8" y2="86.6" stroke="#38c038" stroke-width=".7"/><line x1="131.2" y1="84.4" x2="131.2" y2="91.3" stroke="#38c038" stroke-width="1.1"/><line x1="129.9" y1="86.6" x2="131.2" y2="86.6" stroke="#38c038" stroke-width=".7"/><line x1="131.2" y1="87.6" x2="132.6" y2="87.6" stroke="#38c038" stroke-width=".7"/><line x1="134.0" y1="82.1" x2="134.0" y2="98.5" stroke="#38c038" stroke-width="1.1"/><line x1="132.7" y1="87.6" x2="134.0" y2="87.6" stroke="#38c038" stroke-width=".7"/><line x1="134.0" y1="96.5" x2="135.3" y2="96.5" stroke="#38c038" stroke-width=".7"/><line x1="136.8" y1="91.8" x2="136.8" y2="105.7" stroke="#38c038" stroke-width="1.1"/><line x1="135.4" y1="96.5" x2="136.8" y2="96.5" stroke="#38c038" stroke-width=".7"/><line x1="136.8" y1="97.5" x2="138.1" y2="97.5" stroke="#38c038" stroke-width=".7"/><line x1="139.5" y1="94.2" x2="139.5" y2="101.9" stroke="#38c038" stroke-width="1.1"/><line x1="138.2" y1="97.5" x2="139.5" y2="97.5" stroke="#38c038" stroke-width=".7"/><line x1="139.5" y1="97.1" x2="140.8" y2="97.1" stroke="#38c038" stroke-width=".7"/><line x1="142.2" y1="92.8" x2="142.2" y2="103.1" stroke="#38c038" stroke-width="1.1"/><line x1="140.9" y1="97.1" x2="142.2" y2="97.1" stroke="#38c038" stroke-width=".7"/><line x1="142.2" y1="93.5" x2="143.6" y2="93.5" stroke="#38c038" stroke-width=".7"/><line x1="145.0" y1="88.6" x2="145.0" y2="101.3" stroke="#38c038" stroke-width="1.1"/><line x1="143.7" y1="93.5" x2="145.0" y2="93.5" stroke="#38c038" stroke-width=".7"/><line x1="145.0" y1="97.6" x2="146.3" y2="97.6" stroke="#38c038" stroke-width=".7"/><line x1="147.8" y1="96.1" x2="147.8" y2="101.9" stroke="#38c038" stroke-width="1.1"/><line x1="146.4" y1="97.6" x2="147.8" y2="97.6" stroke="#38c038" stroke-width=".7"/><line x1="147.8" y1="97.9" x2="149.1" y2="97.9" stroke="#38c038" stroke-width=".7"/><line x1="150.5" y1="92.1" x2="150.5" y2="104.2" stroke="#38c038" stroke-width="1.1"/><line x1="149.2" y1="97.9" x2="150.5" y2="97.9" stroke="#38c038" stroke-width=".7"/><line x1="150.5" y1="97.6" x2="151.8" y2="97.6" stroke="#38c038" stroke-width=".7"/><line x1="153.2" y1="89.3" x2="153.2" y2="102.8" stroke="#38c038" stroke-width="1.1"/><line x1="151.9" y1="97.6" x2="153.2" y2="97.6" stroke="#38c038" stroke-width=".7"/><line x1="153.2" y1="94.4" x2="154.6" y2="94.4" stroke="#38c038" stroke-width=".7"/><line x1="156.0" y1="88.1" x2="156.0" y2="99.5" stroke="#38c038" stroke-width="1.1"/><line x1="154.7" y1="94.4" x2="156.0" y2="94.4" stroke="#38c038" stroke-width=".7"/><line x1="156.0" y1="94.3" x2="157.3" y2="94.3" stroke="#38c038" stroke-width=".7"/><line x1="158.8" y1="87.2" x2="158.8" y2="102.8" stroke="#38c038" stroke-width="1.1"/><line x1="157.4" y1="94.3" x2="158.8" y2="94.3" stroke="#38c038" stroke-width=".7"/><line x1="158.8" y1="98.0" x2="160.1" y2="98.0" stroke="#38c038" stroke-width=".7"/><line x1="161.5" y1="95.1" x2="161.5" y2="98.9" stroke="#38c038" stroke-width="1.1"/><line x1="160.2" y1="98.0" x2="161.5" y2="98.0" stroke="#38c038" stroke-width=".7"/><line x1="161.5" y1="97.5" x2="162.8" y2="97.5" stroke="#38c038" stroke-width=".7"/><line x1="164.2" y1="88.7" x2="164.2" y2="104.3" stroke="#38c038" stroke-width="1.1"/><line x1="162.9" y1="97.5" x2="164.2" y2="97.5" stroke="#38c038" stroke-width=".7"/><line x1="164.2" y1="91.9" x2="165.6" y2="91.9" stroke="#38c038" stroke-width=".7"/><line x1="167.0" y1="86.5" x2="167.0" y2="98.6" stroke="#38c038" stroke-width="1.1"/><line x1="165.7" y1="91.9" x2="167.0" y2="91.9" stroke="#38c038" stroke-width=".7"/><line x1="167.0" y1="90.9" x2="168.3" y2="90.9" stroke="#38c038" stroke-width=".7"/><line x1="169.8" y1="88.3" x2="169.8" y2="105.0" stroke="#38c038" stroke-width="1.1"/><line x1="168.4" y1="90.9" x2="169.8" y2="90.9" stroke="#38c038" stroke-width=".7"/><line x1="169.8" y1="98.1" x2="171.1" y2="98.1" stroke="#38c038" stroke-width=".7"/><line x1="172.5" y1="92.0" x2="172.5" y2="100.8" stroke="#38c038" stroke-width="1.1"/><line x1="171.2" y1="98.1" x2="172.5" y2="98.1" stroke="#38c038" stroke-width=".7"/><line x1="172.5" y1="98.1" x2="173.8" y2="98.1" stroke="#38c038" stroke-width=".7"/><line x1="175.2" y1="88.4" x2="175.2" y2="99.9" stroke="#38c038" stroke-width="1.1"/><line x1="173.9" y1="98.1" x2="175.2" y2="98.1" stroke="#38c038" stroke-width=".7"/><line x1="175.2" y1="92.0" x2="176.6" y2="92.0" stroke="#38c038" stroke-width=".7"/><line x1="178.0" y1="88.5" x2="178.0" y2="96.1" stroke="#38c038" stroke-width="1.1"/><line x1="176.7" y1="92.0" x2="178.0" y2="92.0" stroke="#38c038" stroke-width=".7"/><line x1="178.0" y1="93.8" x2="179.3" y2="93.8" stroke="#38c038" stroke-width=".7"/><line x1="180.8" y1="90.0" x2="180.8" y2="102.6" stroke="#38c038" stroke-width="1.1"/><line x1="179.4" y1="93.8" x2="180.8" y2="93.8" stroke="#38c038" stroke-width=".7"/><line x1="180.8" y1="93.2" x2="182.1" y2="93.2" stroke="#38c038" stroke-width=".7"/><line x1="183.5" y1="85.1" x2="183.5" y2="94.4" stroke="#38c038" stroke-width="1.1"/><line x1="182.2" y1="93.2" x2="183.5" y2="93.2" stroke="#38c038" stroke-width=".7"/><line x1="183.5" y1="89.4" x2="184.8" y2="89.4" stroke="#38c038" stroke-width=".7"/><line x1="186.2" y1="84.1" x2="186.2" y2="95.3" stroke="#38c038" stroke-width="1.1"/><line x1="184.9" y1="89.4" x2="186.2" y2="89.4" stroke="#38c038" stroke-width=".7"/><line x1="186.2" y1="89.4" x2="187.6" y2="89.4" stroke="#38c038" stroke-width=".7"/><line x1="189.0" y1="81.9" x2="189.0" y2="92.8" stroke="#38c038" stroke-width="1.1"/><line x1="187.7" y1="89.4" x2="189.0" y2="89.4" stroke="#38c038" stroke-width=".7"/><line x1="189.0" y1="89.4" x2="190.3" y2="89.4" stroke="#38c038" stroke-width=".7"/><line x1="191.8" y1="84.4" x2="191.8" y2="95.1" stroke="#38c038" stroke-width="1.1"/><line x1="190.4" y1="89.4" x2="191.8" y2="89.4" stroke="#38c038" stroke-width=".7"/><line x1="191.8" y1="88.4" x2="193.1" y2="88.4" stroke="#38c038" stroke-width=".7"/><line x1="194.5" y1="81.0" x2="194.5" y2="94.2" stroke="#38c038" stroke-width="1.1"/><line x1="193.2" y1="88.4" x2="194.5" y2="88.4" stroke="#38c038" stroke-width=".7"/><line x1="194.5" y1="93.5" x2="195.8" y2="93.5" stroke="#38c038" stroke-width=".7"/><line x1="197.2" y1="89.0" x2="197.2" y2="100.7" stroke="#38c038" stroke-width="1.1"/><line x1="195.9" y1="93.5" x2="197.2" y2="93.5" stroke="#38c038" stroke-width=".7"/><line x1="197.2" y1="95.5" x2="198.6" y2="95.5" stroke="#38c038" stroke-width=".7"/><line x1="200.0" y1="88.6" x2="200.0" y2="98.8" stroke="#38c038" stroke-width="1.1"/><line x1="198.7" y1="95.5" x2="200.0" y2="95.5" stroke="#38c038" stroke-width=".7"/><line x1="200.0" y1="90.2" x2="201.3" y2="90.2" stroke="#38c038" stroke-width=".7"/><line x1="202.8" y1="87.8" x2="202.8" y2="92.4" stroke="#38c038" stroke-width="1.1"/><line x1="201.4" y1="90.2" x2="202.8" y2="90.2" stroke="#38c038" stroke-width=".7"/><line x1="202.8" y1="89.2" x2="204.1" y2="89.2" stroke="#38c038" stroke-width=".7"/><line x1="205.5" y1="87.0" x2="205.5" y2="98.5" stroke="#38c038" stroke-width="1.1"/><line x1="204.2" y1="89.2" x2="205.5" y2="89.2" stroke="#38c038" stroke-width=".7"/><line x1="205.5" y1="94.6" x2="206.8" y2="94.6" stroke="#38c038" stroke-width=".7"/><line x1="208.2" y1="83.9" x2="208.2" y2="96.7" stroke="#38c038" stroke-width="1.1"/><line x1="206.9" y1="94.6" x2="208.2" y2="94.6" stroke="#38c038" stroke-width=".7"/><line x1="208.2" y1="87.9" x2="209.6" y2="87.9" stroke="#38c038" stroke-width=".7"/><line x1="211.0" y1="85.0" x2="211.0" y2="97.5" stroke="#38c038" stroke-width="1.1"/><line x1="209.7" y1="87.9" x2="211.0" y2="87.9" stroke="#38c038" stroke-width=".7"/><line x1="211.0" y1="89.5" x2="212.3" y2="89.5" stroke="#38c038" stroke-width=".7"/><line x1="213.8" y1="85.4" x2="213.8" y2="98.0" stroke="#38c038" stroke-width="1.1"/><line x1="212.4" y1="89.5" x2="213.8" y2="89.5" stroke="#38c038" stroke-width=".7"/><line x1="213.8" y1="91.6" x2="215.1" y2="91.6" stroke="#38c038" stroke-width=".7"/><line x1="216.5" y1="83.3" x2="216.5" y2="98.3" stroke="#38c038" stroke-width="1.1"/><line x1="215.2" y1="91.6" x2="216.5" y2="91.6" stroke="#38c038" stroke-width=".7"/><line x1="216.5" y1="93.9" x2="217.8" y2="93.9" stroke="#38c038" stroke-width=".7"/><line x1="219.2" y1="91.1" x2="219.2" y2="96.3" stroke="#38c038" stroke-width="1.1"/><line x1="217.9" y1="93.9" x2="219.2" y2="93.9" stroke="#38c038" stroke-width=".7"/><line x1="219.2" y1="93.5" x2="220.6" y2="93.5" stroke="#38c038" stroke-width=".7"/><line x1="222.0" y1="83.8" x2="222.0" y2="95.2" stroke="#38c038" stroke-width="1.1"/><line x1="220.7" y1="93.5" x2="222.0" y2="93.5" stroke="#38c038" stroke-width=".7"/><line x1="222.0" y1="88.4" x2="223.3" y2="88.4" stroke="#38c038" stroke-width=".7"/><line x1="224.8" y1="82.7" x2="224.8" y2="99.8" stroke="#38c038" stroke-width="1.1"/><line x1="223.4" y1="88.4" x2="224.8" y2="88.4" stroke="#38c038" stroke-width=".7"/><line x1="224.8" y1="95.3" x2="226.1" y2="95.3" stroke="#38c038" stroke-width=".7"/><line x1="227.5" y1="86.3" x2="227.5" y2="97.1" stroke="#38c038" stroke-width="1.1"/><line x1="226.2" y1="95.3" x2="227.5" y2="95.3" stroke="#38c038" stroke-width=".7"/><line x1="227.5" y1="90.4" x2="228.8" y2="90.4" stroke="#38c038" stroke-width=".7"/><line x1="230.2" y1="84.3" x2="230.2" y2="102.8" stroke="#38c038" stroke-width="1.1"/><line x1="228.9" y1="90.4" x2="230.2" y2="90.4" stroke="#38c038" stroke-width=".7"/><line x1="230.2" y1="96.4" x2="231.6" y2="96.4" stroke="#38c038" stroke-width=".7"/><line x1="233.0" y1="87.2" x2="233.0" y2="98.1" stroke="#38c038" stroke-width="1.1"/><line x1="231.7" y1="96.4" x2="233.0" y2="96.4" stroke="#38c038" stroke-width=".7"/><line x1="233.0" y1="90.5" x2="234.3" y2="90.5" stroke="#38c038" stroke-width=".7"/><line x1="235.8" y1="89.4" x2="235.8" y2="96.0" stroke="#38c038" stroke-width="1.1"/><line x1="234.4" y1="90.5" x2="235.8" y2="90.5" stroke="#38c038" stroke-width=".7"/><line x1="235.8" y1="92.3" x2="237.1" y2="92.3" stroke="#38c038" stroke-width=".7"/><line x1="238.5" y1="86.3" x2="238.5" y2="93.6" stroke="#38c038" stroke-width="1.1"/><line x1="237.2" y1="92.3" x2="238.5" y2="92.3" stroke="#38c038" stroke-width=".7"/><line x1="238.5" y1="88.6" x2="239.8" y2="88.6" stroke="#38c038" stroke-width=".7"/><line x1="241.2" y1="82.7" x2="241.2" y2="95.1" stroke="#38c038" stroke-width="1.1"/><line x1="239.9" y1="88.6" x2="241.2" y2="88.6" stroke="#38c038" stroke-width=".7"/><line x1="241.2" y1="89.9" x2="242.6" y2="89.9" stroke="#38c038" stroke-width=".7"/><line x1="244.0" y1="83.9" x2="244.0" y2="99.9" stroke="#38c038" stroke-width="1.1"/><line x1="242.7" y1="89.9" x2="244.0" y2="89.9" stroke="#38c038" stroke-width=".7"/><line x1="244.0" y1="94.2" x2="245.3" y2="94.2" stroke="#38c038" stroke-width=".7"/><line x1="246.8" y1="85.0" x2="246.8" y2="100.7" stroke="#38c038" stroke-width="1.1"/><line x1="245.4" y1="94.2" x2="246.8" y2="94.2" stroke="#38c038" stroke-width=".7"/><line x1="246.8" y1="89.1" x2="248.1" y2="89.1" stroke="#38c038" stroke-width=".7"/><line x1="249.5" y1="82.8" x2="249.5" y2="100.2" stroke="#38c038" stroke-width="1.1"/><line x1="248.2" y1="89.1" x2="249.5" y2="89.1" stroke="#38c038" stroke-width=".7"/><line x1="249.5" y1="95.8" x2="250.8" y2="95.8" stroke="#38c038" stroke-width=".7"/><line x1="252.2" y1="86.9" x2="252.2" y2="103.3" stroke="#38c038" stroke-width="1.1"/><line x1="250.9" y1="95.8" x2="252.2" y2="95.8" stroke="#38c038" stroke-width=".7"/><line x1="252.2" y1="92.5" x2="253.6" y2="92.5" stroke="#38c038" stroke-width=".7"/><line x1="255.0" y1="85.2" x2="255.0" y2="97.5" stroke="#38c038" stroke-width="1.1"/><line x1="253.7" y1="92.5" x2="255.0" y2="92.5" stroke="#38c038" stroke-width=".7"/><line x1="255.0" y1="93.0" x2="256.3" y2="93.0" stroke="#38c038" stroke-width=".7"/><line x1="257.8" y1="86.9" x2="257.8" y2="98.0" stroke="#38c038" stroke-width="1.1"/><line x1="256.4" y1="93.0" x2="257.8" y2="93.0" stroke="#38c038" stroke-width=".7"/><line x1="257.8" y1="88.0" x2="259.1" y2="88.0" stroke="#38c038" stroke-width=".7"/><line x1="260.5" y1="82.2" x2="260.5" y2="97.9" stroke="#38c038" stroke-width="1.1"/><line x1="259.2" y1="88.0" x2="260.5" y2="88.0" stroke="#38c038" stroke-width=".7"/><line x1="260.5" y1="92.8" x2="261.8" y2="92.8" stroke="#38c038" stroke-width=".7"/><line x1="263.2" y1="81.7" x2="263.2" y2="98.8" stroke="#38c038" stroke-width="1.1"/><line x1="261.9" y1="92.8" x2="263.2" y2="92.8" stroke="#38c038" stroke-width=".7"/><line x1="263.2" y1="87.8" x2="264.6" y2="87.8" stroke="#38c038" stroke-width=".7"/><line x1="266.0" y1="86.5" x2="266.0" y2="97.9" stroke="#38c038" stroke-width="1.1"/><line x1="264.7" y1="87.8" x2="266.0" y2="87.8" stroke="#38c038" stroke-width=".7"/><line x1="266.0" y1="93.7" x2="267.3" y2="93.7" stroke="#38c038" stroke-width=".7"/><line x1="268.8" y1="83.5" x2="268.8" y2="98.3" stroke="#38c038" stroke-width="1.1"/><line x1="267.4" y1="93.7" x2="268.8" y2="93.7" stroke="#38c038" stroke-width=".7"/><line x1="268.8" y1="90.1" x2="270.1" y2="90.1" stroke="#38c038" stroke-width=".7"/><line x1="271.5" y1="85.6" x2="271.5" y2="97.6" stroke="#38c038" stroke-width="1.1"/><line x1="270.2" y1="90.1" x2="271.5" y2="90.1" stroke="#38c038" stroke-width=".7"/><line x1="271.5" y1="92.2" x2="272.8" y2="92.2" stroke="#38c038" stroke-width=".7"/><line x1="274.2" y1="88.2" x2="274.2" y2="94.6" stroke="#38c038" stroke-width="1.1"/><line x1="272.9" y1="92.2" x2="274.2" y2="92.2" stroke="#38c038" stroke-width=".7"/><line x1="274.2" y1="93.3" x2="275.6" y2="93.3" stroke="#38c038" stroke-width=".7"/><line x1="277.0" y1="91.6" x2="277.0" y2="97.7" stroke="#38c038" stroke-width="1.1"/><line x1="275.7" y1="93.3" x2="277.0" y2="93.3" stroke="#38c038" stroke-width=".7"/><line x1="277.0" y1="94.4" x2="278.3" y2="94.4" stroke="#38c038" stroke-width=".7"/><line x1="279.8" y1="84.1" x2="279.8" y2="99.2" stroke="#38c038" stroke-width="1.1"/><line x1="278.4" y1="94.4" x2="279.8" y2="94.4" stroke="#38c038" stroke-width=".7"/><line x1="279.8" y1="90.2" x2="281.1" y2="90.2" stroke="#38c038" stroke-width=".7"/><line x1="282.5" y1="87.2" x2="282.5" y2="98.1" stroke="#38c038" stroke-width="1.1"/><line x1="281.2" y1="90.2" x2="282.5" y2="90.2" stroke="#38c038" stroke-width=".7"/><line x1="282.5" y1="92.4" x2="283.8" y2="92.4" stroke="#38c038" stroke-width=".7"/><line x1="285.2" y1="84.2" x2="285.2" y2="99.1" stroke="#38c038" stroke-width="1.1"/><line x1="283.9" y1="92.4" x2="285.2" y2="92.4" stroke="#38c038" stroke-width=".7"/><line x1="285.2" y1="89.6" x2="286.6" y2="89.6" stroke="#38c038" stroke-width=".7"/><line x1="288.0" y1="83.4" x2="288.0" y2="98.3" stroke="#38c038" stroke-width="1.1"/><line x1="286.7" y1="89.6" x2="288.0" y2="89.6" stroke="#38c038" stroke-width=".7"/><line x1="288.0" y1="95.1" x2="289.3" y2="95.1" stroke="#38c038" stroke-width=".7"/><line x1="290.8" y1="93.5" x2="290.8" y2="101.3" stroke="#38c038" stroke-width="1.1"/><line x1="289.4" y1="95.1" x2="290.8" y2="95.1" stroke="#38c038" stroke-width=".7"/><line x1="290.8" y1="96.3" x2="292.1" y2="96.3" stroke="#38c038" stroke-width=".7"/><line x1="293.5" y1="93.7" x2="293.5" y2="104.0" stroke="#38c038" stroke-width="1.1"/><line x1="292.2" y1="96.3" x2="293.5" y2="96.3" stroke="#38c038" stroke-width=".7"/><line x1="293.5" y1="96.3" x2="294.8" y2="96.3" stroke="#38c038" stroke-width=".7"/><line x1="296.2" y1="91.1" x2="296.2" y2="101.3" stroke="#38c038" stroke-width="1.1"/><line x1="294.9" y1="96.3" x2="296.2" y2="96.3" stroke="#38c038" stroke-width=".7"/><line x1="296.2" y1="94.1" x2="297.6" y2="94.1" stroke="#38c038" stroke-width=".7"/><line x1="299.0" y1="84.0" x2="299.0" y2="97.0" stroke="#38c038" stroke-width="1.1"/><line x1="297.7" y1="94.1" x2="299.0" y2="94.1" stroke="#38c038" stroke-width=".7"/><line x1="299.0" y1="87.8" x2="300.3" y2="87.8" stroke="#38c038" stroke-width=".7"/><line x1="301.8" y1="86.1" x2="301.8" y2="98.1" stroke="#38c038" stroke-width="1.1"/><line x1="300.4" y1="87.8" x2="301.8" y2="87.8" stroke="#38c038" stroke-width=".7"/><line x1="301.8" y1="90.9" x2="303.1" y2="90.9" stroke="#38c038" stroke-width=".7"/><line x1="304.5" y1="87.6" x2="304.5" y2="103.6" stroke="#38c038" stroke-width="1.1"/><line x1="303.2" y1="90.9" x2="304.5" y2="90.9" stroke="#38c038" stroke-width=".7"/><line x1="304.5" y1="95.3" x2="305.8" y2="95.3" stroke="#38c038" stroke-width=".7"/><line x1="307.2" y1="84.8" x2="307.2" y2="99.6" stroke="#38c038" stroke-width="1.1"/><line x1="305.9" y1="95.3" x2="307.2" y2="95.3" stroke="#38c038" stroke-width=".7"/><line x1="307.2" y1="90.4" x2="308.6" y2="90.4" stroke="#38c038" stroke-width=".7"/><line x1="310.0" y1="87.9" x2="310.0" y2="92.9" stroke="#38c038" stroke-width="1.1"/><line x1="308.7" y1="90.4" x2="310.0" y2="90.4" stroke="#38c038" stroke-width=".7"/><line x1="310.0" y1="91.0" x2="311.3" y2="91.0" stroke="#38c038" stroke-width=".7"/><line x1="312.8" y1="88.6" x2="312.8" y2="101.3" stroke="#38c038" stroke-width="1.1"/><line x1="311.4" y1="91.0" x2="312.8" y2="91.0" stroke="#38c038" stroke-width=".7"/><line x1="312.8" y1="95.3" x2="314.1" y2="95.3" stroke="#38c038" stroke-width=".7"/><line x1="315.5" y1="87.9" x2="315.5" y2="100.5" stroke="#38c038" stroke-width="1.1"/><line x1="314.2" y1="95.3" x2="315.5" y2="95.3" stroke="#38c038" stroke-width=".7"/><line x1="315.5" y1="92.4" x2="316.8" y2="92.4" stroke="#38c038" stroke-width=".7"/><line x1="318.2" y1="85.6" x2="318.2" y2="102.0" stroke="#38c038" stroke-width="1.1"/><line x1="316.9" y1="92.4" x2="318.2" y2="92.4" stroke="#38c038" stroke-width=".7"/><line x1="318.2" y1="95.1" x2="319.6" y2="95.1" stroke="#38c038" stroke-width=".7"/><line x1="321.0" y1="92.3" x2="321.0" y2="101.7" stroke="#38c038" stroke-width="1.1"/><line x1="319.7" y1="95.1" x2="321.0" y2="95.1" stroke="#38c038" stroke-width=".7"/><line x1="321.0" y1="94.2" x2="322.3" y2="94.2" stroke="#38c038" stroke-width=".7"/><line x1="323.8" y1="88.7" x2="323.8" y2="95.0" stroke="#38c038" stroke-width="1.1"/><line x1="322.4" y1="94.2" x2="323.8" y2="94.2" stroke="#38c038" stroke-width=".7"/><line x1="323.8" y1="93.6" x2="325.1" y2="93.6" stroke="#38c038" stroke-width=".7"/><polyline points="0.0,95.5 1.1,95.0 2.7,94.4 4.6,93.8 6.5,93.4 8.3,93.2 10.3,93.2 12.3,93.4 14.5,93.9 16.9,94.7 19.4,95.7 21.8,97.1 24.2,98.7 26.3,100.8 28.3,103.3 30.3,106.0 32.3,108.4 34.2,110.6 36.0,112.6 38.0,114.6 40.3,116.5 43.2,118.4 46.6,120.3 50.0,121.9 53.2,122.9 56.3,123.0 59.3,122.3 62.1,121.5 64.5,121.0 66.5,121.0 68.1,121.2 69.6,121.4 71.0,121.3 72.2,120.8 73.2,119.9 74.3,119.0 75.8,118.1 77.8,117.1 80.2,116.0 82.8,115.0 85.5,114.0 88.2,113.2 91.1,112.5 94.0,111.7 96.8,110.8 99.3,109.7 101.7,108.4 104.1,107.1 106.5,106.0 108.9,105.0 111.3,104.3 113.7,103.5 116.1,102.7 118.6,101.9 121.1,101.0 123.5,100.2 125.8,99.5 127.5,99.0 128.7,98.7 130.5,98.3 133.9,97.9 136.2,97.4 138.0,96.8 144.6,96.2 161.3,95.5 196.0,94.7 243.6,93.7 290.5,92.9 322.6,92.3" fill="none" stroke="#d01010" stroke-width="1"/><line x1="1" y1="135.3" x2="328" y2="135.3" stroke="#8a8a8a" stroke-width="1.2"/><line x1="1" y1="140.3" x2="328" y2="140.3" stroke="#20a020" stroke-dasharray="4 2 1 2"/><text x="6" y="133" font-size="6.4" fill="#c8c8c8" font-family="Liberation Sans" text-anchor="start">#11392293 sell 5.00</text><text x="6" y="138.3" font-size="6.4" fill="#c8c8c8" font-family="Liberation Sans" text-anchor="start">#11391950 buy 99.00</text><line x1="1" y1="149.5" x2="1" y2="152" stroke="#c0c0c0"/><text x="1" y="157.3" font-size="5.95" fill="#e8e8e8" font-family="Liberation Sans" text-anchor="start">22 Jan 2020</text><line x1="42" y1="149.5" x2="42" y2="152" stroke="#c0c0c0"/><text x="42" y="157.3" font-size="5.95" fill="#e8e8e8" font-family="Liberation Sans" text-anchor="start">23 Jan 05:00</text><line x1="83" y1="149.5" x2="83" y2="152" stroke="#c0c0c0"/><text x="83" y="157.3" font-size="5.95" fill="#e8e8e8" font-family="Liberation Sans" text-anchor="start">23 Jan 21:00</text><line x1="124" y1="149.5" x2="124" y2="152" stroke="#c0c0c0"/><text x="124" y="157.3" font-size="5.95" fill="#e8e8e8" font-family="Liberation Sans" text-anchor="start">24 Jan 13:00</text><line x1="165" y1="149.5" x2="165" y2="152" stroke="#c0c0c0"/><text x="165" y="157.3" font-size="5.95" fill="#e8e8e8" font-family="Liberation Sans" text-anchor="start">27 Jan 05:00</text><line x1="206" y1="149.5" x2="206" y2="152" stroke="#c0c0c0"/><text x="206" y="157.3" font-size="5.95" fill="#e8e8e8" font-family="Liberation Sans" text-anchor="start">27 Jan 21:00</text><line x1="247" y1="149.5" x2="247" y2="152" stroke="#c0c0c0"/><text x="247" y="157.3" font-size="5.95" fill="#e8e8e8" font-family="Liberation Sans" text-anchor="start">28 Jan 13:00</text><line x1="288" y1="149.5" x2="288" y2="152" stroke="#c0c0c0"/><text x="288" y="157.3" font-size="5.95" fill="#e8e8e8" font-family="Liberation Sans" text-anchor="start">29 Jan 05:00</text></svg>
<svg class="a" style="left:170px;top:265.8px;" width="21" height="9" viewBox="0 0 21 9"><rect x="0.5" y="0.5" width="8" height="7.5" fill="#f4f4f8" stroke="#aab" stroke-width=".6"/><rect x="1.5" y="1.5" width="2.5" height="6" fill="#f09090"/><rect x="4.5" y="1.5" width="3.5" height="6" fill="#b0c0f0"/><rect x="11" y="0.5" width="8" height="7.5" fill="#3048c8"/><rect x="15" y="3.5" width="4" height="4.5" fill="#e03030"/><circle cx="15" cy="2" r="1.5" fill="#ccc"/></svg>
<div class="t" style="top:266.07px;font-size:7.2px;color:#e8e8e8;left:193.5px;transform:scaleX(0.86);transform-origin:0 0;">USDCHF,H1</div>
<div class="a" style="left:169.5px;top:276.0px;width:27.5px;height:13.7px;background:linear-gradient(#f04a4a,#dc2a2a);border-bottom:1px solid #a01010;"></div>
<div class="t" style="top:278.38px;font-size:8.6px;color:#ffe8e8;left:-17px;width:400px;text-align:center;transform:scaleX(0.75);transform-origin:50% 0;">SELL</div>
<div class="a" style="left:199.2px;top:276.0px;width:13px;height:12.5px;background:#dcdcdc;border:1px solid #a8a8a8;border-right:none;"></div>
<svg class="a" style="left:203.5px;top:280.8px;" width="6" height="4" viewBox="0 0 6 4"><path d="M0 0h5l-2.5 3z" fill="#222"/></svg>
<div class="a" style="left:212px;top:276.0px;width:36.5px;height:12.5px;background:#ffffff;border-top:1px solid #a8a8a8;border-bottom:1px solid #a8a8a8;"></div>
<div class="t" style="top:278.10px;font-size:8.4px;color:#222;right:653px;transform:scaleX(0.9);transform-origin:100% 0;">5.00</div>
<div class="a" style="left:248.4px;top:276.0px;width:12.3px;height:12.5px;background:#dcdcdc;border:1px solid #a8a8a8;border-left:none;"></div>
<svg class="a" style="left:252px;top:280.3px;" width="6" height="4" viewBox="0 0 6 4"><path d="M0 3h5L2.5 0z" fill="#222"/></svg>
<div class="a" style="left:262.5px;top:276.0px;width:26.8px;height:13.7px;background:linear-gradient(#f04a4a,#dc2a2a);border-bottom:1px solid #a01010;"></div>
<div class="t" style="top:278.38px;font-size:8.6px;color:#ffe8e8;left:76px;width:400px;text-align:center;transform:scaleX(0.75);transform-origin:50% 0;">BUY</div>
<div class="a" style="left:169.5px;top:290.40000000000003px;width:60px;height:21.7px;background:linear-gradient(#e83838,#b80e0e);"></div>
<div class="a" style="left:231.7px;top:290.40000000000003px;width:57.6px;height:21.7px;background:linear-gradient(#e83838,#b80e0e);"></div>
<div class="t" style="top:302.81px;font-size:8.2px;color:#fff;font-weight:bold;right:703px;transform:scaleX(0.9);transform-origin:100% 0;">0.96</div>
<div class="t" style="top:291.80px;font-size:20px;color:#fff;left:200px;transform:scaleX(0.9);transform-origin:0 0;">72</div>
<div class="t" style="top:302.81px;font-size:8.2px;color:#fff;font-weight:bold;right:640.7px;transform:scaleX(0.9);transform-origin:100% 0;">0.96</div>
<div class="t" style="top:291.80px;font-size:20px;color:#fff;left:261.2px;transform:scaleX(0.9);transform-origin:0 0;">75</div>
<div class="a" style="left:528px;top:241px;width:369px;height:184px;background:#f0f0f0;border:1px solid #8c8c8c;"></div>
<svg class="a" style="left:532.5px;top:244.5px;" width="12" height="11" viewBox="0 0 12 11"><rect x="0.5" y="0.5" width="9" height="7" fill="#dceefc" stroke="#2f8ad8"/><rect x="2.5" y="3.5" width="9" height="7" fill="#eef6fd" stroke="#2f8ad8"/><rect x="2.5" y="3.5" width="9" height="2" fill="#2f8ad8"/><path d="M4 9l2-2 2 1 2-2" stroke="#e8602a" fill="none" stroke-width="1.1"/></svg>
<div class="t" style="top:246.60px;font-size:8.4px;color:#6a6a6a;left:546.8px;transform:scaleX(0.9);transform-origin:0 0;">USDJPY,H1</div>
<div class="a" style="left:833px;top:251.5px;width:7px;height:1px;background:#8a8a8a;"></div>
<div class="a" style="left:856px;top:247px;width:7px;height:7px;border:1px solid #8a8a8a;"></div>
<svg class="a" style="left:879px;top:247.5px;" width="7" height="7" viewBox="0 0 7 7"><path d="M0.5 0.5l6 6M6.5 0.5l-6 6" stroke="#808080" stroke-width="1"/></svg>
<div class="a" style="left:533px;top:260px;width:359px;height:163px;background:#000;"></div>
<svg class="a" style="left:533px;top:260px;" width="359" height="163" viewBox="0 0 359 163"><line x1="312.5" y1="2" x2="312.5" y2="148" stroke="#b4b4b4" stroke-width="1" stroke-dasharray="1.4 2.4"/><line x1="291.9" y1="2" x2="291.9" y2="148" stroke="#b4b4b4" stroke-width="1" stroke-dasharray="1.4 2.4"/><line x1="271.3" y1="2" x2="271.3" y2="148" stroke="#b4b4b4" stroke-width="1" stroke-dasharray="1.4 2.4"/><line x1="250.7" y1="2" x2="250.7" y2="148" stroke="#b4b4b4" stroke-width="1" stroke-dasharray="1.4 2.4"/><line x1="230.1" y1="2" x2="230.1" y2="148" stroke="#b4b4b4" stroke-width="1" stroke-dasharray="1.4 2.4"/><line x1="209.5" y1="2" x2="209.5" y2="148" stroke="#b4b4b4" stroke-width="1" stroke-dasharray="1.4 2.4"/><line x1="188.89999999999998" y1="2" x2="188.89999999999998" y2="148" stroke="#b4b4b4" stroke-width="1" stroke-dasharray="1.4 2.4"/><line x1="168.29999999999998" y1="2" x2="168.29999999999998" y2="148" stroke="#b4b4b4" stroke-width="1" stroke-dasharray="1.4 2.4"/><line x1="147.7" y1="2" x2="147.7" y2="148" stroke="#b4b4b4" stroke-width="1" stroke-dasharray="1.4 2.4"/><line x1="127.1" y1="2" x2="127.1" y2="148" stroke="#b4b4b4" stroke-width="1" stroke-dasharray="1.4 2.4"/><line x1="106.5" y1="2" x2="106.5" y2="148" stroke="#b4b4b4" stroke-width="1" stroke-dasharray="1.4 2.4"/><line x1="85.89999999999998" y1="2" x2="85.89999999999998" y2="148" stroke="#b4b4b4" stroke-width="1" stroke-dasharray="1.4 2.4"/><line x1="65.29999999999998" y1="2" x2="65.29999999999998" y2="148" stroke="#b4b4b4" stroke-width="1" stroke-dasharray="1.4 2.4"/><line x1="44.69999999999999" y1="2" x2="44.69999999999999" y2="148" stroke="#b4b4b4" stroke-width="1" stroke-dasharray="1.4 2.4"/><line x1="24.099999999999966" y1="2" x2="24.099999999999966" y2="148" stroke="#b4b4b4" stroke-width="1" stroke-dasharray="1.4 2.4"/><line x1="3.5" y1="2" x2="3.5" y2="148" stroke="#b4b4b4" stroke-width="1" stroke-dasharray="1.4 2.4"/><line x1="1" y1="18" x2="328" y2="18" stroke="#b4b4b4" stroke-width="1" stroke-dasharray="1.9 1.7"/><line x1="1" y1="38.19999999999999" x2="328" y2="38.19999999999999" stroke="#b4b4b4" stroke-width="1" stroke-dasharray="1.9 1.7"/><line x1="1" y1="59" x2="328" y2="59" stroke="#b4b4b4" stroke-width="1" stroke-dasharray="1.9 1.7"/><line x1="1" y1="79.69999999999999" x2="328" y2="79.69999999999999" stroke="#b4b4b4" stroke-width="1" stroke-dasharray="1.9 1.7"/><line x1="1" y1="103.80000000000001" x2="328" y2="103.80000000000001" stroke="#b4b4b4" stroke-width="1" stroke-dasharray="1.9 1.7"/><line x1="1" y1="126" x2="328" y2="126" stroke="#b4b4b4" stroke-width="1" stroke-dasharray="1.9 1.7"/><rect x="1.5" y="2.5" width="327" height="146" fill="none" stroke="#c0c0c0" stroke-width="1"/><line x1="1" y1="99.80000000000001" x2="328" y2="99.80000000000001" stroke="#b8b8b8" stroke-width="1.8"/><line x1="2.0" y1="33.4" x2="2.0" y2="42.9" stroke="#00e000" stroke-width="1"/><rect x="1.0" y="36.9" width="2" height="2.8" fill="#b0ffb0" stroke="#30f030" stroke-width=".5"/><line x1="4.8" y1="35.8" x2="4.8" y2="43.1" stroke="#00e000" stroke-width="1"/><rect x="3.8" y="36.9" width="2" height="2.2" fill="#10c010" stroke="#30f030" stroke-width=".5"/><line x1="7.5" y1="36.5" x2="7.5" y2="44.0" stroke="#00e000" stroke-width="1"/><rect x="6.5" y="39.1" width="2" height="2.4" fill="#10c010" stroke="#30f030" stroke-width=".5"/><line x1="10.2" y1="36.2" x2="10.2" y2="43.3" stroke="#00e000" stroke-width="1"/><rect x="9.2" y="36.3" width="2" height="5.2" fill="#b0ffb0" stroke="#30f030" stroke-width=".5"/><line x1="13.0" y1="35.9" x2="13.0" y2="42.8" stroke="#00e000" stroke-width="1"/><rect x="12.0" y="36.3" width="2" height="2.5" fill="#10c010" stroke="#30f030" stroke-width=".5"/><line x1="15.8" y1="34.2" x2="15.8" y2="39.0" stroke="#00e000" stroke-width="1"/><rect x="14.8" y="35.4" width="2" height="3.4" fill="#b0ffb0" stroke="#30f030" stroke-width=".5"/><line x1="18.5" y1="31.7" x2="18.5" y2="45.8" stroke="#00e000" stroke-width="1"/><rect x="17.5" y="35.4" width="2" height="6.0" fill="#10c010" stroke="#30f030" stroke-width=".5"/><line x1="21.2" y1="37.6" x2="21.2" y2="43.1" stroke="#00e000" stroke-width="1"/><rect x="20.2" y="37.8" width="2" height="3.6" fill="#b0ffb0" stroke="#30f030" stroke-width=".5"/><line x1="24.0" y1="35.8" x2="24.0" y2="42.6" stroke="#00e000" stroke-width="1"/><rect x="23.0" y="36.4" width="2" height="1.4" fill="#b0ffb0" stroke="#30f030" stroke-width=".5"/><line x1="26.8" y1="34.1" x2="26.8" y2="40.5" stroke="#00e000" stroke-width="1"/><rect x="25.8" y="34.9" width="2" height="1.5" fill="#b0ffb0" stroke="#30f030" stroke-width=".5"/><line x1="29.5" y1="27.8" x2="29.5" y2="37.2" stroke="#00e000" stroke-width="1"/><rect x="28.5" y="32.4" width="2" height="2.5" fill="#b0ffb0" stroke="#30f030" stroke-width=".5"/><line x1="32.2" y1="30.7" x2="32.2" y2="38.1" stroke="#00e000" stroke-width="1"/><rect x="31.2" y="32.4" width="2" height="3.2" fill="#10c010" stroke="#30f030" stroke-width=".5"/><line x1="35.0" y1="32.0" x2="35.0" y2="40.0" stroke="#00e000" stroke-width="1"/><rect x="34.0" y="32.1" width="2" height="3.5" fill="#b0ffb0" stroke="#30f030" stroke-width=".5"/><line x1="37.8" y1="28.2" x2="37.8" y2="33.2" stroke="#00e000" stroke-width="1"/><rect x="36.8" y="32.1" width="2" height="1.2" fill="#b0ffb0" stroke="#30f030" stroke-width=".5"/><line x1="40.5" y1="27.6" x2="40.5" y2="41.7" stroke="#00e000" stroke-width="1"/><rect x="39.5" y="32.1" width="2" height="5.8" fill="#10c010" stroke="#30f030" stroke-width=".5"/><line x1="43.2" y1="32.8" x2="43.2" y2="41.6" stroke="#00e000" stroke-width="1"/><rect x="42.2" y="35.8" width="2" height="2.1" fill="#b0ffb0" stroke="#30f030" stroke-width=".5"/><line x1="46.0" y1="27.6" x2="46.0" y2="39.9" stroke="#00e000" stroke-width="1"/><rect x="45.0" y="30.0" width="2" height="5.8" fill="#b0ffb0" stroke="#30f030" stroke-width=".5"/><line x1="48.8" y1="25.3" x2="48.8" y2="34.7" stroke="#00e000" stroke-width="1"/><rect x="47.8" y="30.0" width="2" height="1.2" fill="#10c010" stroke="#30f030" stroke-width=".5"/><line x1="51.5" y1="28.4" x2="51.5" y2="33.8" stroke="#00e000" stroke-width="1"/><rect x="50.5" y="30.2" width="2" height="1.3" fill="#10c010" stroke="#30f030" stroke-width=".5"/><line x1="54.2" y1="25.9" x2="54.2" y2="33.5" stroke="#00e000" stroke-width="1"/><rect x="53.2" y="30.9" width="2" height="1.2" fill="#b0ffb0" stroke="#30f030" stroke-width=".5"/><line x1="57.0" y1="27.0" x2="57.0" y2="34.6" stroke="#00e000" stroke-width="1"/><rect x="56.0" y="27.5" width="2" height="3.4" fill="#b0ffb0" stroke="#30f030" stroke-width=".5"/><line x1="59.8" y1="25.0" x2="59.8" y2="37.7" stroke="#00e000" stroke-width="1"/><rect x="58.8" y="27.5" width="2" height="7.7" fill="#10c010" stroke="#30f030" stroke-width=".5"/><line x1="62.5" y1="27.3" x2="62.5" y2="36.3" stroke="#00e000" stroke-width="1"/><rect x="61.5" y="31.1" width="2" height="4.1" fill="#b0ffb0" stroke="#30f030" stroke-width=".5"/><line x1="65.2" y1="28.3" x2="65.2" y2="34.3" stroke="#00e000" stroke-width="1"/><rect x="64.2" y="31.1" width="2" height="1.2" fill="#10c010" stroke="#30f030" stroke-width=".5"/><line x1="68.0" y1="24.8" x2="68.0" y2="32.9" stroke="#00e000" stroke-width="1"/><rect x="67.0" y="25.6" width="2" height="5.6" fill="#b0ffb0" stroke="#30f030" stroke-width=".5"/><line x1="70.8" y1="23.9" x2="70.8" y2="30.2" stroke="#00e000" stroke-width="1"/><rect x="69.8" y="25.6" width="2" height="1.6" fill="#10c010" stroke="#30f030" stroke-width=".5"/><line x1="73.5" y1="16.8" x2="73.5" y2="27.5" stroke="#00e000" stroke-width="1"/><rect x="72.5" y="17.3" width="2" height="9.9" fill="#b0ffb0" stroke="#30f030" stroke-width=".5"/><line x1="76.2" y1="13.0" x2="76.2" y2="19.2" stroke="#00e000" stroke-width="1"/><rect x="75.2" y="16.9" width="2" height="1.2" fill="#b0ffb0" stroke="#30f030" stroke-width=".5"/><line x1="79.0" y1="11.9" x2="79.0" y2="21.4" stroke="#00e000" stroke-width="1"/><rect x="78.0" y="15.3" width="2" height="1.6" fill="#b0ffb0" stroke="#30f030" stroke-width=".5"/><line x1="81.8" y1="13.3" x2="81.8" y2="23.7" stroke="#00e000" stroke-width="1"/><rect x="80.8" y="15.3" width="2" height="3.4" fill="#10c010" stroke="#30f030" stroke-width=".5"/><line x1="84.5" y1="15.8" x2="84.5" y2="24.3" stroke="#00e000" stroke-width="1"/><rect x="83.5" y="18.7" width="2" height="1.2" fill="#10c010" stroke="#30f030" stroke-width=".5"/><line x1="87.2" y1="15.1" x2="87.2" y2="21.1" stroke="#00e000" stroke-width="1"/><rect x="86.2" y="17.0" width="2" height="2.9" fill="#b0ffb0" stroke="#30f030" stroke-width=".5"/><line x1="90.0" y1="16.2" x2="90.0" y2="21.7" stroke="#00e000" stroke-width="1"/><rect x="89.0" y="17.0" width="2" height="4.3" fill="#10c010" stroke="#30f030" stroke-width=".5"/><line x1="92.8" y1="17.5" x2="92.8" y2="24.3" stroke="#00e000" stroke-width="1"/><rect x="91.8" y="21.4" width="2" height="1.2" fill="#10c010" stroke="#30f030" stroke-width=".5"/><line x1="95.5" y1="21.6" x2="95.5" y2="24.5" stroke="#00e000" stroke-width="1"/><rect x="94.5" y="21.9" width="2" height="1.4" fill="#10c010" stroke="#30f030" stroke-width=".5"/><line x1="98.2" y1="17.6" x2="98.2" y2="24.1" stroke="#00e000" stroke-width="1"/><rect x="97.2" y="19.7" width="2" height="3.5" fill="#b0ffb0" stroke="#30f030" stroke-width=".5"/><line x1="101.0" y1="17.3" x2="101.0" y2="24.3" stroke="#00e000" stroke-width="1"/><rect x="100.0" y="19.0" width="2" height="1.2" fill="#b0ffb0" stroke="#30f030" stroke-width=".5"/><line x1="103.8" y1="15.2" x2="103.8" y2="30.2" stroke="#00e000" stroke-width="1"/><rect x="102.8" y="19.0" width="2" height="8.8" fill="#10c010" stroke="#30f030" stroke-width=".5"/><line x1="106.5" y1="17.9" x2="106.5" y2="30.4" stroke="#00e000" stroke-width="1"/><rect x="105.5" y="22.7" width="2" height="5.0" fill="#b0ffb0" stroke="#30f030" stroke-width=".5"/><line x1="109.2" y1="22.6" x2="109.2" y2="27.2" stroke="#00e000" stroke-width="1"/><rect x="108.2" y="22.7" width="2" height="3.5" fill="#10c010" stroke="#30f030" stroke-width=".5"/><line x1="112.0" y1="22.2" x2="112.0" y2="30.6" stroke="#00e000" stroke-width="1"/><rect x="111.0" y="26.2" width="2" height="1.2" fill="#10c010" stroke="#30f030" stroke-width=".5"/><line x1="114.8" y1="21.1" x2="114.8" y2="29.1" stroke="#00e000" stroke-width="1"/><rect x="113.8" y="23.3" width="2" height="2.9" fill="#b0ffb0" stroke="#30f030" stroke-width=".5"/><line x1="117.5" y1="21.7" x2="117.5" y2="27.1" stroke="#00e000" stroke-width="1"/><rect x="116.5" y="23.3" width="2" height="1.2" fill="#10c010" stroke="#30f030" stroke-width=".5"/><line x1="120.2" y1="14.8" x2="120.2" y2="24.5" stroke="#00e000" stroke-width="1"/><rect x="119.2" y="18.7" width="2" height="5.7" fill="#b0ffb0" stroke="#30f030" stroke-width=".5"/><line x1="123.0" y1="13.9" x2="123.0" y2="21.4" stroke="#00e000" stroke-width="1"/><rect x="122.0" y="18.7" width="2" height="2.6" fill="#10c010" stroke="#30f030" stroke-width=".5"/><line x1="125.8" y1="16.5" x2="125.8" y2="25.6" stroke="#00e000" stroke-width="1"/><rect x="124.8" y="19.7" width="2" height="1.5" fill="#b0ffb0" stroke="#30f030" stroke-width=".5"/><line x1="128.5" y1="17.0" x2="128.5" y2="21.8" stroke="#00e000" stroke-width="1"/><rect x="127.5" y="18.3" width="2" height="1.4" fill="#b0ffb0" stroke="#30f030" stroke-width=".5"/><line x1="131.2" y1="12.3" x2="131.2" y2="19.0" stroke="#00e000" stroke-width="1"/><rect x="130.2" y="16.8" width="2" height="1.5" fill="#b0ffb0" stroke="#30f030" stroke-width=".5"/><line x1="134.0" y1="16.3" x2="134.0" y2="25.4" stroke="#00e000" stroke-width="1"/><rect x="133.0" y="16.8" width="2" height="8.4" fill="#10c010" stroke="#30f030" stroke-width=".5"/><line x1="136.8" y1="24.5" x2="136.8" y2="33.1" stroke="#00e000" stroke-width="1"/><rect x="135.8" y="25.2" width="2" height="3.5" fill="#10c010" stroke="#30f030" stroke-width=".5"/><line x1="139.5" y1="28.1" x2="139.5" y2="35.1" stroke="#00e000" stroke-width="1"/><rect x="138.5" y="28.8" width="2" height="3.6" fill="#10c010" stroke="#30f030" stroke-width=".5"/><line x1="142.2" y1="29.4" x2="142.2" y2="33.5" stroke="#00e000" stroke-width="1"/><rect x="141.2" y="31.9" width="2" height="1.2" fill="#b0ffb0" stroke="#30f030" stroke-width=".5"/><line x1="145.0" y1="31.0" x2="145.0" y2="34.3" stroke="#00e000" stroke-width="1"/><rect x="144.0" y="31.9" width="2" height="1.2" fill="#10c010" stroke="#30f030" stroke-width=".5"/><line x1="147.8" y1="29.6" x2="147.8" y2="39.9" stroke="#00e000" stroke-width="1"/><rect x="146.8" y="32.4" width="2" height="7.3" fill="#10c010" stroke="#30f030" stroke-width=".5"/><line x1="150.5" y1="35.3" x2="150.5" y2="46.1" stroke="#00e000" stroke-width="1"/><rect x="149.5" y="39.7" width="2" height="2.5" fill="#10c010" stroke="#30f030" stroke-width=".5"/><line x1="153.2" y1="42.1" x2="153.2" y2="46.2" stroke="#00e000" stroke-width="1"/><rect x="152.2" y="42.2" width="2" height="1.7" fill="#10c010" stroke="#30f030" stroke-width=".5"/><line x1="156.0" y1="33.2" x2="156.0" y2="44.8" stroke="#00e000" stroke-width="1"/><rect x="155.0" y="37.0" width="2" height="6.8" fill="#b0ffb0" stroke="#30f030" stroke-width=".5"/><line x1="158.8" y1="35.8" x2="158.8" y2="45.1" stroke="#00e000" stroke-width="1"/><rect x="157.8" y="37.0" width="2" height="4.5" fill="#10c010" stroke="#30f030" stroke-width=".5"/><line x1="161.5" y1="39.5" x2="161.5" y2="43.5" stroke="#00e000" stroke-width="1"/><rect x="160.5" y="39.7" width="2" height="1.8" fill="#b0ffb0" stroke="#30f030" stroke-width=".5"/><line x1="164.2" y1="35.2" x2="164.2" y2="43.2" stroke="#00e000" stroke-width="1"/><rect x="163.2" y="39.7" width="2" height="2.0" fill="#10c010" stroke="#30f030" stroke-width=".5"/><line x1="167.0" y1="39.0" x2="167.0" y2="46.9" stroke="#00e000" stroke-width="1"/><rect x="166.0" y="41.7" width="2" height="1.2" fill="#10c010" stroke="#30f030" stroke-width=".5"/><line x1="169.8" y1="34.0" x2="169.8" y2="44.7" stroke="#00e000" stroke-width="1"/><rect x="168.8" y="37.0" width="2" height="5.1" fill="#b0ffb0" stroke="#30f030" stroke-width=".5"/><line x1="172.5" y1="32.2" x2="172.5" y2="45.1" stroke="#00e000" stroke-width="1"/><rect x="171.5" y="37.0" width="2" height="6.6" fill="#10c010" stroke="#30f030" stroke-width=".5"/><line x1="175.2" y1="40.9" x2="175.2" y2="47.9" stroke="#00e000" stroke-width="1"/><rect x="174.2" y="43.6" width="2" height="1.5" fill="#10c010" stroke="#30f030" stroke-width=".5"/><line x1="178.0" y1="36.0" x2="178.0" y2="50.0" stroke="#00e000" stroke-width="1"/><rect x="177.0" y="40.1" width="2" height="5.0" fill="#b0ffb0" stroke="#30f030" stroke-width=".5"/><line x1="180.8" y1="38.5" x2="180.8" y2="46.9" stroke="#00e000" stroke-width="1"/><rect x="179.8" y="40.1" width="2" height="1.8" fill="#10c010" stroke="#30f030" stroke-width=".5"/><line x1="183.5" y1="41.5" x2="183.5" y2="45.8" stroke="#00e000" stroke-width="1"/><rect x="182.5" y="41.9" width="2" height="3.6" fill="#10c010" stroke="#30f030" stroke-width=".5"/><line x1="186.2" y1="41.6" x2="186.2" y2="61.7" stroke="#00e000" stroke-width="1"/><rect x="185.2" y="45.5" width="2" height="14.0" fill="#10c010" stroke="#30f030" stroke-width=".5"/><line x1="189.0" y1="59.4" x2="189.0" y2="66.1" stroke="#00e000" stroke-width="1"/><rect x="188.0" y="59.5" width="2" height="3.4" fill="#10c010" stroke="#30f030" stroke-width=".5"/><line x1="191.8" y1="57.8" x2="191.8" y2="64.9" stroke="#00e000" stroke-width="1"/><rect x="190.8" y="60.4" width="2" height="2.5" fill="#b0ffb0" stroke="#30f030" stroke-width=".5"/><line x1="194.5" y1="50.6" x2="194.5" y2="60.6" stroke="#00e000" stroke-width="1"/><rect x="193.5" y="51.7" width="2" height="8.6" fill="#b0ffb0" stroke="#30f030" stroke-width=".5"/><line x1="197.2" y1="41.9" x2="197.2" y2="55.3" stroke="#00e000" stroke-width="1"/><rect x="196.2" y="43.1" width="2" height="8.6" fill="#b0ffb0" stroke="#30f030" stroke-width=".5"/><line x1="200.0" y1="37.8" x2="200.0" y2="45.4" stroke="#00e000" stroke-width="1"/><rect x="199.0" y="41.5" width="2" height="1.7" fill="#b0ffb0" stroke="#30f030" stroke-width=".5"/><line x1="202.8" y1="34.6" x2="202.8" y2="43.9" stroke="#00e000" stroke-width="1"/><rect x="201.8" y="36.5" width="2" height="4.9" fill="#b0ffb0" stroke="#30f030" stroke-width=".5"/><line x1="205.5" y1="31.7" x2="205.5" y2="37.7" stroke="#00e000" stroke-width="1"/><rect x="204.5" y="36.5" width="2" height="1.2" fill="#10c010" stroke="#30f030" stroke-width=".5"/><line x1="208.2" y1="25.5" x2="208.2" y2="40.9" stroke="#00e000" stroke-width="1"/><rect x="207.2" y="28.0" width="2" height="9.3" fill="#b0ffb0" stroke="#30f030" stroke-width=".5"/><line x1="211.0" y1="24.0" x2="211.0" y2="33.6" stroke="#00e000" stroke-width="1"/><rect x="210.0" y="28.0" width="2" height="2.5" fill="#10c010" stroke="#30f030" stroke-width=".5"/><line x1="213.8" y1="26.0" x2="213.8" y2="34.8" stroke="#00e000" stroke-width="1"/><rect x="212.8" y="29.3" width="2" height="1.2" fill="#b0ffb0" stroke="#30f030" stroke-width=".5"/><line x1="216.5" y1="25.2" x2="216.5" y2="30.6" stroke="#00e000" stroke-width="1"/><rect x="215.5" y="28.6" width="2" height="1.2" fill="#b0ffb0" stroke="#30f030" stroke-width=".5"/><line x1="219.2" y1="26.7" x2="219.2" y2="34.3" stroke="#00e000" stroke-width="1"/><rect x="218.2" y="28.6" width="2" height="2.5" fill="#10c010" stroke="#30f030" stroke-width=".5"/><line x1="222.0" y1="26.3" x2="222.0" y2="36.5" stroke="#00e000" stroke-width="1"/><rect x="221.0" y="31.2" width="2" height="1.2" fill="#10c010" stroke="#30f030" stroke-width=".5"/><line x1="224.8" y1="24.0" x2="224.8" y2="33.1" stroke="#00e000" stroke-width="1"/><rect x="223.8" y="25.5" width="2" height="6.0" fill="#b0ffb0" stroke="#30f030" stroke-width=".5"/><line x1="227.5" y1="24.8" x2="227.5" y2="33.8" stroke="#00e000" stroke-width="1"/><rect x="226.5" y="25.5" width="2" height="5.5" fill="#10c010" stroke="#30f030" stroke-width=".5"/><line x1="230.2" y1="29.5" x2="230.2" y2="36.3" stroke="#00e000" stroke-width="1"/><rect x="229.2" y="31.0" width="2" height="1.2" fill="#10c010" stroke="#30f030" stroke-width=".5"/><line x1="233.0" y1="29.2" x2="233.0" y2="39.1" stroke="#00e000" stroke-width="1"/><rect x="232.0" y="31.6" width="2" height="6.9" fill="#10c010" stroke="#30f030" stroke-width=".5"/><line x1="235.8" y1="35.0" x2="235.8" y2="42.1" stroke="#00e000" stroke-width="1"/><rect x="234.8" y="38.5" width="2" height="2.5" fill="#10c010" stroke="#30f030" stroke-width=".5"/><line x1="238.5" y1="33.0" x2="238.5" y2="44.5" stroke="#00e000" stroke-width="1"/><rect x="237.5" y="36.3" width="2" height="4.7" fill="#b0ffb0" stroke="#30f030" stroke-width=".5"/><line x1="241.2" y1="31.5" x2="241.2" y2="42.0" stroke="#00e000" stroke-width="1"/><rect x="240.2" y="36.3" width="2" height="4.1" fill="#10c010" stroke="#30f030" stroke-width=".5"/><line x1="244.0" y1="36.1" x2="244.0" y2="50.0" stroke="#00e000" stroke-width="1"/><rect x="243.0" y="40.4" width="2" height="8.9" fill="#10c010" stroke="#30f030" stroke-width=".5"/><line x1="246.8" y1="48.3" x2="246.8" y2="75.4" stroke="#00e000" stroke-width="1"/><rect x="245.8" y="49.3" width="2" height="23.1" fill="#10c010" stroke="#30f030" stroke-width=".5"/><line x1="249.5" y1="70.5" x2="249.5" y2="78.3" stroke="#00e000" stroke-width="1"/><rect x="248.5" y="72.4" width="2" height="1.2" fill="#10c010" stroke="#30f030" stroke-width=".5"/><line x1="252.2" y1="71.4" x2="252.2" y2="81.0" stroke="#00e000" stroke-width="1"/><rect x="251.2" y="73.6" width="2" height="4.3" fill="#10c010" stroke="#30f030" stroke-width=".5"/><line x1="255.0" y1="77.0" x2="255.0" y2="81.0" stroke="#00e000" stroke-width="1"/><rect x="254.0" y="77.9" width="2" height="1.2" fill="#10c010" stroke="#30f030" stroke-width=".5"/><line x1="257.8" y1="78.2" x2="257.8" y2="86.6" stroke="#00e000" stroke-width="1"/><rect x="256.8" y="79.1" width="2" height="2.7" fill="#10c010" stroke="#30f030" stroke-width=".5"/><line x1="260.5" y1="74.4" x2="260.5" y2="86.5" stroke="#00e000" stroke-width="1"/><rect x="259.5" y="78.5" width="2" height="3.3" fill="#b0ffb0" stroke="#30f030" stroke-width=".5"/><line x1="263.2" y1="78.4" x2="263.2" y2="84.8" stroke="#00e000" stroke-width="1"/><rect x="262.2" y="78.5" width="2" height="3.9" fill="#10c010" stroke="#30f030" stroke-width=".5"/><line x1="266.0" y1="75.3" x2="266.0" y2="85.9" stroke="#00e000" stroke-width="1"/><rect x="265.0" y="78.4" width="2" height="4.0" fill="#b0ffb0" stroke="#30f030" stroke-width=".5"/><line x1="268.8" y1="74.0" x2="268.8" y2="81.1" stroke="#00e000" stroke-width="1"/><rect x="267.8" y="74.0" width="2" height="4.3" fill="#b0ffb0" stroke="#30f030" stroke-width=".5"/><line x1="271.5" y1="64.4" x2="271.5" y2="76.3" stroke="#00e000" stroke-width="1"/><rect x="270.5" y="65.9" width="2" height="8.1" fill="#b0ffb0" stroke="#30f030" stroke-width=".5"/><line x1="274.2" y1="64.1" x2="274.2" y2="75.5" stroke="#00e000" stroke-width="1"/><rect x="273.2" y="65.9" width="2" height="8.9" fill="#10c010" stroke="#30f030" stroke-width=".5"/><line x1="277.0" y1="70.7" x2="277.0" y2="77.6" stroke="#00e000" stroke-width="1"/><rect x="276.0" y="74.8" width="2" height="1.2" fill="#10c010" stroke="#30f030" stroke-width=".5"/><line x1="279.8" y1="67.8" x2="279.8" y2="76.9" stroke="#00e000" stroke-width="1"/><rect x="278.8" y="68.8" width="2" height="6.1" fill="#b0ffb0" stroke="#30f030" stroke-width=".5"/><line x1="282.5" y1="67.6" x2="282.5" y2="76.1" stroke="#00e000" stroke-width="1"/><rect x="281.5" y="68.8" width="2" height="3.3" fill="#10c010" stroke="#30f030" stroke-width=".5"/><line x1="285.2" y1="64.9" x2="285.2" y2="76.5" stroke="#00e000" stroke-width="1"/><rect x="284.2" y="69.5" width="2" height="2.5" fill="#b0ffb0" stroke="#30f030" stroke-width=".5"/><line x1="288.0" y1="58.0" x2="288.0" y2="69.9" stroke="#00e000" stroke-width="1"/><rect x="287.0" y="60.9" width="2" height="8.6" fill="#b0ffb0" stroke="#30f030" stroke-width=".5"/><line x1="290.8" y1="57.2" x2="290.8" y2="74.5" stroke="#00e000" stroke-width="1"/><rect x="289.8" y="60.9" width="2" height="9.7" fill="#10c010" stroke="#30f030" stroke-width=".5"/><line x1="293.5" y1="69.3" x2="293.5" y2="74.8" stroke="#00e000" stroke-width="1"/><rect x="292.5" y="69.6" width="2" height="1.2" fill="#b0ffb0" stroke="#30f030" stroke-width=".5"/><line x1="296.2" y1="66.4" x2="296.2" y2="77.4" stroke="#00e000" stroke-width="1"/><rect x="295.2" y="69.6" width="2" height="5.5" fill="#10c010" stroke="#30f030" stroke-width=".5"/><line x1="299.0" y1="73.3" x2="299.0" y2="76.5" stroke="#00e000" stroke-width="1"/><rect x="298.0" y="75.0" width="2" height="1.2" fill="#10c010" stroke="#30f030" stroke-width=".5"/><line x1="301.8" y1="67.4" x2="301.8" y2="78.3" stroke="#00e000" stroke-width="1"/><rect x="300.8" y="68.9" width="2" height="6.3" fill="#b0ffb0" stroke="#30f030" stroke-width=".5"/><line x1="304.5" y1="66.8" x2="304.5" y2="69.2" stroke="#00e000" stroke-width="1"/><rect x="303.5" y="67.1" width="2" height="1.7" fill="#b0ffb0" stroke="#30f030" stroke-width=".5"/><line x1="307.2" y1="54.0" x2="307.2" y2="68.1" stroke="#00e000" stroke-width="1"/><rect x="306.2" y="57.4" width="2" height="9.8" fill="#b0ffb0" stroke="#30f030" stroke-width=".5"/><line x1="310.0" y1="57.1" x2="310.0" y2="58.3" stroke="#00e000" stroke-width="1"/><rect x="309.0" y="57.4" width="2" height="1.2" fill="#10c010" stroke="#30f030" stroke-width=".5"/><line x1="312.8" y1="54.7" x2="312.8" y2="66.0" stroke="#00e000" stroke-width="1"/><rect x="311.8" y="58.1" width="2" height="4.6" fill="#10c010" stroke="#30f030" stroke-width=".5"/><line x1="315.5" y1="56.9" x2="315.5" y2="67.4" stroke="#00e000" stroke-width="1"/><rect x="314.5" y="57.5" width="2" height="5.3" fill="#b0ffb0" stroke="#30f030" stroke-width=".5"/><line x1="318.2" y1="55.4" x2="318.2" y2="62.2" stroke="#00e000" stroke-width="1"/><rect x="317.2" y="57.5" width="2" height="1.3" fill="#10c010" stroke="#30f030" stroke-width=".5"/><line x1="321.0" y1="56.1" x2="321.0" y2="59.8" stroke="#00e000" stroke-width="1"/><rect x="320.0" y="58.7" width="2" height="1.2" fill="#10c010" stroke="#30f030" stroke-width=".5"/><line x1="323.8" y1="58.3" x2="323.8" y2="61.4" stroke="#00e000" stroke-width="1"/><rect x="322.8" y="59.4" width="2" height="1.8" fill="#10c010" stroke="#30f030" stroke-width=".5"/><line x1="326.5" y1="57.3" x2="326.5" y2="64.3" stroke="#00e000" stroke-width="1"/><rect x="325.5" y="59.9" width="2" height="1.2" fill="#b0ffb0" stroke="#30f030" stroke-width=".5"/><line x1="1" y1="48.30000000000001" x2="328" y2="48.30000000000001" stroke="#6c7e90" stroke-width="1"/><line x1="328" y1="18" x2="331" y2="18" stroke="#c0c0c0"/><text x="332" y="20.4" font-size="6.1" fill="#e8e8e8" font-family="Liberation Sans" text-anchor="start">109.20</text><line x1="328" y1="38.19999999999999" x2="331" y2="38.19999999999999" stroke="#c0c0c0"/><text x="332" y="40.59999999999999" font-size="6.1" fill="#e8e8e8" font-family="Liberation Sans" text-anchor="start">108.95</text><line x1="328" y1="59" x2="331" y2="59" stroke="#c0c0c0"/><text x="332" y="61.4" font-size="6.1" fill="#e8e8e8" font-family="Liberation Sans" text-anchor="start">108.70</text><line x1="328" y1="79.69999999999999" x2="331" y2="79.69999999999999" stroke="#c0c0c0"/><text x="332" y="82.1" font-size="6.1" fill="#e8e8e8" font-family="Liberation Sans" text-anchor="start">108.45</text><rect x="330" y="44.60000000000002" width="22" height="7.4" fill="#8898aa"/><text x="331.5" y="50.69999999999999" font-size="6.1" fill="#0a0a0a" font-family="Liberation Sans" text-anchor="start">108.83</text><path d="M268.5 89.39999999999998h16.5l1.5 3.6-1.5 3.6h-16.5z" fill="#fbe4e8" stroke="#999" stroke-width=".5"/><line x1="269.0" y1="96.59999999999998" x2="269.0" y2="99.80000000000001" stroke="#aaa" stroke-width=".6"/><text x="269.5" y="95.49999999999997" font-size="6.0" fill="#702030" font-family="Liberation Sans" text-anchor="start">02:30</text><path d="M304.29999999999995 89.39999999999998h1.1l1.5 3.6-1.5 3.6h-1.1z" fill="#c8ecf4" stroke="#999" stroke-width=".5"/><line x1="304.79999999999995" y1="96.59999999999998" x2="304.79999999999995" y2="99.80000000000001" stroke="#aaa" stroke-width=".6"/><path d="M307 89.39999999999998h1.1l1.5 3.6-1.5 3.6h-1.1z" fill="#c8ecf4" stroke="#999" stroke-width=".5"/><line x1="307.5" y1="96.59999999999998" x2="307.5" y2="99.80000000000001" stroke="#aaa" stroke-width=".6"/><path d="M310 89.39999999999998h5.7l1.5 3.6-1.5 3.6h-5.7z" fill="#f4f4f4" stroke="#999" stroke-width=".5"/><line x1="310.5" y1="96.59999999999998" x2="310.5" y2="99.80000000000001" stroke="#aaa" stroke-width=".6"/><text x="311" y="95.49999999999997" font-size="6.0" fill="#102030" font-family="Liberation Sans" text-anchor="start">18</text><path d="M317.20000000000005 89.39999999999998h8.5l1.5 3.6-1.5 3.6h-8.5z" fill="#f4f4f4" stroke="#999" stroke-width=".5"/><line x1="317.70000000000005" y1="96.59999999999998" x2="317.70000000000005" y2="99.80000000000001" stroke="#aaa" stroke-width=".6"/><text x="318.20000000000005" y="95.49999999999997" font-size="6.0" fill="#102030" font-family="Liberation Sans" text-anchor="start">21:</text><line x1="69.0" y1="113.6" x2="69.0" y2="112.5" stroke="#d0d0d0" stroke-width=".9"/><line x1="71.7" y1="113.6" x2="71.7" y2="112.7" stroke="#d0d0d0" stroke-width=".9"/><line x1="74.4" y1="113.6" x2="74.4" y2="112.8" stroke="#d0d0d0" stroke-width=".9"/><line x1="77.1" y1="113.6" x2="77.1" y2="112.9" stroke="#d0d0d0" stroke-width=".9"/><line x1="79.8" y1="113.6" x2="79.8" y2="112.5" stroke="#d0d0d0" stroke-width=".9"/><line x1="82.5" y1="113.6" x2="82.5" y2="110.7" stroke="#d0d0d0" stroke-width=".9"/><line x1="85.2" y1="113.6" x2="85.2" y2="108.9" stroke="#d0d0d0" stroke-width=".9"/><line x1="87.9" y1="113.6" x2="87.9" y2="107.1" stroke="#d0d0d0" stroke-width=".9"/><line x1="90.6" y1="113.6" x2="90.6" y2="106.6" stroke="#d0d0d0" stroke-width=".9"/><line x1="93.3" y1="113.6" x2="93.3" y2="106.1" stroke="#d0d0d0" stroke-width=".9"/><line x1="96.0" y1="113.6" x2="96.0" y2="105.7" stroke="#d0d0d0" stroke-width=".9"/><line x1="98.7" y1="113.6" x2="98.7" y2="106.2" stroke="#d0d0d0" stroke-width=".9"/><line x1="101.4" y1="113.6" x2="101.4" y2="107.4" stroke="#d0d0d0" stroke-width=".9"/><line x1="104.1" y1="113.6" x2="104.1" y2="108.6" stroke="#d0d0d0" stroke-width=".9"/><line x1="106.8" y1="113.6" x2="106.8" y2="109.6" stroke="#d0d0d0" stroke-width=".9"/><line x1="109.5" y1="113.6" x2="109.5" y2="110.3" stroke="#d0d0d0" stroke-width=".9"/><line x1="112.2" y1="113.6" x2="112.2" y2="111.0" stroke="#d0d0d0" stroke-width=".9"/><line x1="114.9" y1="113.6" x2="114.9" y2="111.6" stroke="#d0d0d0" stroke-width=".9"/><line x1="117.6" y1="113.6" x2="117.6" y2="112.3" stroke="#d0d0d0" stroke-width=".9"/><line x1="120.3" y1="113.6" x2="120.3" y2="112.9" stroke="#d0d0d0" stroke-width=".9"/><line x1="123.0" y1="113.6" x2="123.0" y2="113.6" stroke="#d0d0d0" stroke-width=".9"/><line x1="125.7" y1="113.6" x2="125.7" y2="114.2" stroke="#d0d0d0" stroke-width=".9"/><line x1="128.4" y1="113.6" x2="128.4" y2="114.8" stroke="#d0d0d0" stroke-width=".9"/><line x1="131.1" y1="113.6" x2="131.1" y2="115.4" stroke="#d0d0d0" stroke-width=".9"/><line x1="133.8" y1="113.6" x2="133.8" y2="116.0" stroke="#d0d0d0" stroke-width=".9"/><line x1="136.5" y1="113.6" x2="136.5" y2="116.5" stroke="#d0d0d0" stroke-width=".9"/><line x1="139.2" y1="113.6" x2="139.2" y2="117.1" stroke="#d0d0d0" stroke-width=".9"/><line x1="141.9" y1="113.6" x2="141.9" y2="117.7" stroke="#d0d0d0" stroke-width=".9"/><line x1="144.6" y1="113.6" x2="144.6" y2="118.3" stroke="#d0d0d0" stroke-width=".9"/><line x1="147.3" y1="113.6" x2="147.3" y2="118.9" stroke="#d0d0d0" stroke-width=".9"/><line x1="150.0" y1="113.6" x2="150.0" y2="119.6" stroke="#d0d0d0" stroke-width=".9"/><line x1="152.7" y1="113.6" x2="152.7" y2="120.3" stroke="#d0d0d0" stroke-width=".9"/><line x1="155.4" y1="113.6" x2="155.4" y2="121.1" stroke="#d0d0d0" stroke-width=".9"/><line x1="158.1" y1="113.6" x2="158.1" y2="121.9" stroke="#d0d0d0" stroke-width=".9"/><line x1="160.8" y1="113.6" x2="160.8" y2="122.7" stroke="#d0d0d0" stroke-width=".9"/><line x1="163.5" y1="113.6" x2="163.5" y2="123.4" stroke="#d0d0d0" stroke-width=".9"/><line x1="166.2" y1="113.6" x2="166.2" y2="124.2" stroke="#d0d0d0" stroke-width=".9"/><line x1="168.9" y1="113.6" x2="168.9" y2="125.0" stroke="#d0d0d0" stroke-width=".9"/><line x1="171.6" y1="113.6" x2="171.6" y2="125.9" stroke="#d0d0d0" stroke-width=".9"/><line x1="174.3" y1="113.6" x2="174.3" y2="126.9" stroke="#d0d0d0" stroke-width=".9"/><line x1="177.0" y1="113.6" x2="177.0" y2="127.9" stroke="#d0d0d0" stroke-width=".9"/><line x1="179.7" y1="113.6" x2="179.7" y2="128.8" stroke="#d0d0d0" stroke-width=".9"/><line x1="182.4" y1="113.6" x2="182.4" y2="129.8" stroke="#d0d0d0" stroke-width=".9"/><line x1="185.1" y1="113.6" x2="185.1" y2="130.7" stroke="#d0d0d0" stroke-width=".9"/><line x1="187.8" y1="113.6" x2="187.8" y2="131.7" stroke="#d0d0d0" stroke-width=".9"/><line x1="190.5" y1="113.6" x2="190.5" y2="132.3" stroke="#d0d0d0" stroke-width=".9"/><line x1="193.2" y1="113.6" x2="193.2" y2="130.5" stroke="#d0d0d0" stroke-width=".9"/><line x1="195.9" y1="113.6" x2="195.9" y2="128.7" stroke="#d0d0d0" stroke-width=".9"/><line x1="198.6" y1="113.6" x2="198.6" y2="126.9" stroke="#d0d0d0" stroke-width=".9"/><line x1="201.3" y1="113.6" x2="201.3" y2="124.4" stroke="#d0d0d0" stroke-width=".9"/><line x1="204.0" y1="113.6" x2="204.0" y2="121.7" stroke="#d0d0d0" stroke-width=".9"/><line x1="206.7" y1="113.6" x2="206.7" y2="119.0" stroke="#d0d0d0" stroke-width=".9"/><line x1="209.4" y1="113.6" x2="209.4" y2="116.3" stroke="#d0d0d0" stroke-width=".9"/><line x1="212.1" y1="113.6" x2="212.1" y2="113.6" stroke="#d0d0d0" stroke-width=".9"/><line x1="214.8" y1="113.6" x2="214.8" y2="110.9" stroke="#d0d0d0" stroke-width=".9"/><line x1="217.5" y1="113.6" x2="217.5" y2="108.4" stroke="#d0d0d0" stroke-width=".9"/><line x1="220.2" y1="113.6" x2="220.2" y2="107.8" stroke="#d0d0d0" stroke-width=".9"/><line x1="222.9" y1="113.6" x2="222.9" y2="107.2" stroke="#d0d0d0" stroke-width=".9"/><line x1="225.6" y1="113.6" x2="225.6" y2="106.5" stroke="#d0d0d0" stroke-width=".9"/><line x1="228.3" y1="113.6" x2="228.3" y2="106.8" stroke="#d0d0d0" stroke-width=".9"/><line x1="231.0" y1="113.6" x2="231.0" y2="107.3" stroke="#d0d0d0" stroke-width=".9"/><line x1="233.7" y1="113.6" x2="233.7" y2="107.7" stroke="#d0d0d0" stroke-width=".9"/><line x1="236.4" y1="113.6" x2="236.4" y2="108.2" stroke="#d0d0d0" stroke-width=".9"/><line x1="239.1" y1="113.6" x2="239.1" y2="109.3" stroke="#d0d0d0" stroke-width=".9"/><line x1="241.8" y1="113.6" x2="241.8" y2="111.6" stroke="#d0d0d0" stroke-width=".9"/><line x1="244.5" y1="113.6" x2="244.5" y2="114.0" stroke="#d0d0d0" stroke-width=".9"/><line x1="247.2" y1="113.6" x2="247.2" y2="117.4" stroke="#d0d0d0" stroke-width=".9"/><line x1="249.9" y1="113.6" x2="249.9" y2="120.9" stroke="#d0d0d0" stroke-width=".9"/><line x1="252.6" y1="113.6" x2="252.6" y2="124.3" stroke="#d0d0d0" stroke-width=".9"/><line x1="255.3" y1="113.6" x2="255.3" y2="129.3" stroke="#d0d0d0" stroke-width=".9"/><line x1="258.0" y1="113.6" x2="258.0" y2="134.7" stroke="#d0d0d0" stroke-width=".9"/><line x1="260.7" y1="113.6" x2="260.7" y2="140.1" stroke="#d0d0d0" stroke-width=".9"/><line x1="263.4" y1="113.6" x2="263.4" y2="143.2" stroke="#d0d0d0" stroke-width=".9"/><line x1="266.1" y1="113.6" x2="266.1" y2="143.4" stroke="#d0d0d0" stroke-width=".9"/><line x1="268.8" y1="113.6" x2="268.8" y2="143.4" stroke="#d0d0d0" stroke-width=".9"/><line x1="271.5" y1="113.6" x2="271.5" y2="142.3" stroke="#d0d0d0" stroke-width=".9"/><line x1="274.2" y1="113.6" x2="274.2" y2="141.2" stroke="#d0d0d0" stroke-width=".9"/><line x1="276.9" y1="113.6" x2="276.9" y2="140.2" stroke="#d0d0d0" stroke-width=".9"/><line x1="279.6" y1="113.6" x2="279.6" y2="139.0" stroke="#d0d0d0" stroke-width=".9"/><line x1="282.3" y1="113.6" x2="282.3" y2="137.9" stroke="#d0d0d0" stroke-width=".9"/><line x1="285.0" y1="113.6" x2="285.0" y2="136.8" stroke="#d0d0d0" stroke-width=".9"/><line x1="287.7" y1="113.6" x2="287.7" y2="135.7" stroke="#d0d0d0" stroke-width=".9"/><line x1="290.4" y1="113.6" x2="290.4" y2="134.5" stroke="#d0d0d0" stroke-width=".9"/><line x1="293.1" y1="113.6" x2="293.1" y2="133.4" stroke="#d0d0d0" stroke-width=".9"/><line x1="295.8" y1="113.6" x2="295.8" y2="132.2" stroke="#d0d0d0" stroke-width=".9"/><line x1="298.5" y1="113.6" x2="298.5" y2="130.6" stroke="#d0d0d0" stroke-width=".9"/><line x1="301.2" y1="113.6" x2="301.2" y2="129.1" stroke="#d0d0d0" stroke-width=".9"/><line x1="303.9" y1="113.6" x2="303.9" y2="127.5" stroke="#d0d0d0" stroke-width=".9"/><line x1="306.6" y1="113.6" x2="306.6" y2="125.9" stroke="#d0d0d0" stroke-width=".9"/><line x1="309.3" y1="113.6" x2="309.3" y2="124.3" stroke="#d0d0d0" stroke-width=".9"/><line x1="312.0" y1="113.6" x2="312.0" y2="122.8" stroke="#d0d0d0" stroke-width=".9"/><line x1="314.7" y1="113.6" x2="314.7" y2="120.7" stroke="#d0d0d0" stroke-width=".9"/><line x1="317.4" y1="113.6" x2="317.4" y2="118.2" stroke="#d0d0d0" stroke-width=".9"/><line x1="320.1" y1="113.6" x2="320.1" y2="115.6" stroke="#d0d0d0" stroke-width=".9"/><line x1="322.8" y1="113.6" x2="322.8" y2="113.4" stroke="#d0d0d0" stroke-width=".9"/><line x1="325.5" y1="113.6" x2="325.5" y2="112.1" stroke="#d0d0d0" stroke-width=".9"/><line x1="10.0" y1="113.6" x2="10.0" y2="111.7" stroke="#d0d0d0" stroke-width=".9"/><line x1="12.7" y1="113.6" x2="12.7" y2="112.7" stroke="#d0d0d0" stroke-width=".9"/><line x1="15.4" y1="113.6" x2="15.4" y2="111.3" stroke="#d0d0d0" stroke-width=".9"/><line x1="18.1" y1="113.6" x2="18.1" y2="112.9" stroke="#d0d0d0" stroke-width=".9"/><line x1="20.8" y1="113.6" x2="20.8" y2="111.5" stroke="#d0d0d0" stroke-width=".9"/><line x1="23.5" y1="113.6" x2="23.5" y2="112.4" stroke="#d0d0d0" stroke-width=".9"/><line x1="26.2" y1="113.6" x2="26.2" y2="112.1" stroke="#d0d0d0" stroke-width=".9"/><line x1="28.9" y1="113.6" x2="28.9" y2="111.8" stroke="#d0d0d0" stroke-width=".9"/><line x1="31.6" y1="113.6" x2="31.6" y2="112.7" stroke="#d0d0d0" stroke-width=".9"/><line x1="34.3" y1="113.6" x2="34.3" y2="111.3" stroke="#d0d0d0" stroke-width=".9"/><line x1="37.0" y1="113.6" x2="37.0" y2="112.9" stroke="#d0d0d0" stroke-width=".9"/><line x1="39.7" y1="113.6" x2="39.7" y2="111.5" stroke="#d0d0d0" stroke-width=".9"/><line x1="42.4" y1="113.6" x2="42.4" y2="112.5" stroke="#d0d0d0" stroke-width=".9"/><line x1="45.1" y1="113.6" x2="45.1" y2="112.1" stroke="#d0d0d0" stroke-width=".9"/><line x1="47.8" y1="113.6" x2="47.8" y2="111.8" stroke="#d0d0d0" stroke-width=".9"/><line x1="50.5" y1="113.6" x2="50.5" y2="112.7" stroke="#d0d0d0" stroke-width=".9"/><line x1="53.2" y1="113.6" x2="53.2" y2="111.3" stroke="#d0d0d0" stroke-width=".9"/><line x1="55.9" y1="113.6" x2="55.9" y2="112.9" stroke="#d0d0d0" stroke-width=".9"/><line x1="58.6" y1="113.6" x2="58.6" y2="111.4" stroke="#d0d0d0" stroke-width=".9"/><line x1="61.3" y1="113.6" x2="61.3" y2="112.5" stroke="#d0d0d0" stroke-width=".9"/><line x1="64.0" y1="113.6" x2="64.0" y2="112.0" stroke="#d0d0d0" stroke-width=".9"/><line x1="66.7" y1="113.6" x2="66.7" y2="111.8" stroke="#d0d0d0" stroke-width=".9"/><polyline points="91.0,105.5 93.6,106.1 97.2,106.8 101.5,107.7 106.0,108.5 110.9,109.2 116.2,109.8 121.7,110.6 127.1,111.5 132.3,112.8 137.6,114.3 142.8,116.0 148.1,117.5 153.3,119.1 158.4,120.7 163.6,122.2 169.1,123.5 175.1,124.8 181.5,126.1 187.7,127.1 193.1,127.4 197.5,127.2 201.2,126.6 204.6,125.4 208.1,123.5 212.0,120.4 215.8,116.3 219.6,112.3 223.2,109.4 226.4,108.0 229.3,107.4 232.2,107.4 235.2,107.6 238.2,107.9 241.2,108.4 244.2,109.5 247.2,111.5 250.2,114.8 253.2,119.1 256.2,123.8 259.2,128.0 262.1,132.3 264.8,136.8 267.8,140.5 271.2,142.4 275.3,142.0 279.8,139.8 284.6,136.8 289.2,134.0 293.7,131.5 298.2,128.9 302.7,126.2 307.2,123.5 312.2,120.8 317.4,117.9 322.0,115.4 325.3,113.6" fill="none" stroke="#e02020" stroke-width="1" stroke-dasharray="1.5 1.5"/><text x="69" y="107.5" font-size="6.1" fill="#e0e0e0" font-family="Liberation Sans" text-anchor="start">0.0181</text><text x="332" y="106.20000000000002" font-size="6.1" fill="#e8e8e8" font-family="Liberation Sans" text-anchor="start">0.071</text><text x="332" y="115.79999999999998" font-size="6.1" fill="#e8e8e8" font-family="Liberation Sans" text-anchor="start">0.000</text><text x="332" y="148.4" font-size="6.1" fill="#e8e8e8" font-family="Liberation Sans" text-anchor="start">-0.184</text><line x1="1.5" y1="148" x2="1.5" y2="151" stroke="#c0c0c0"/><text x="1.5" y="157.3" font-size="5.95" fill="#e8e8e8" font-family="Liberation Sans" text-anchor="start">27 Jan 2020</text><line x1="42.5" y1="148" x2="42.5" y2="151" stroke="#c0c0c0"/><text x="42.5" y="157.3" font-size="5.95" fill="#e8e8e8" font-family="Liberation Sans" text-anchor="start">28 Jan 11:00</text><line x1="83.5" y1="148" x2="83.5" y2="151" stroke="#c0c0c0"/><text x="83.5" y="157.3" font-size="5.95" fill="#e8e8e8" font-family="Liberation Sans" text-anchor="start">29 Jan 03:00</text><line x1="124.5" y1="148" x2="124.5" y2="151" stroke="#c0c0c0"/><text x="124.5" y="157.3" font-size="5.95" fill="#e8e8e8" font-family="Liberation Sans" text-anchor="start">29 Jan 19:00</text><line x1="165.5" y1="148" x2="165.5" y2="151" stroke="#c0c0c0"/><text x="165.5" y="157.3" font-size="5.95" fill="#e8e8e8" font-family="Liberation Sans" text-anchor="start">30 Jan 11:00</text><line x1="206.5" y1="148" x2="206.5" y2="151" stroke="#c0c0c0"/><text x="206.5" y="157.3" font-size="5.95" fill="#e8e8e8" font-family="Liberation Sans" text-anchor="start">31 Jan 03:00</text><line x1="247.5" y1="148" x2="247.5" y2="151" stroke="#c0c0c0"/><text x="247.5" y="157.3" font-size="5.95" fill="#e8e8e8" font-family="Liberation Sans" text-anchor="start">31 Jan 19:00</text><line x1="288.5" y1="148" x2="288.5" y2="151" stroke="#c0c0c0"/><text x="288.5" y="157.3" font-size="5.95" fill="#e8e8e8" font-family="Liberation Sans" text-anchor="start">3 Feb 11:00</text></svg>
<svg class="a" style="left:538.7px;top:265.8px;" width="21" height="9" viewBox="0 0 21 9"><rect x="0.5" y="0.5" width="8" height="7.5" fill="#f4f4f8" stroke="#aab" stroke-width=".6"/><rect x="1.5" y="1.5" width="2.5" height="6" fill="#f09090"/><rect x="4.5" y="1.5" width="3.5" height="6" fill="#b0c0f0"/><rect x="11" y="0.5" width="8" height="7.5" fill="#3048c8"/><rect x="15" y="3.5" width="4" height="4.5" fill="#e03030"/><circle cx="15" cy="2" r="1.5" fill="#ccc"/></svg>
<div class="t" style="top:266.07px;font-size:7.2px;color:#e8e8e8;left:562.2px;transform:scaleX(0.86);transform-origin:0 0;">USDJPY,H1</div>
<div class="a" style="left:538.2px;top:276.0px;width:27.5px;height:13.7px;background:linear-gradient(#f04a4a,#dc2a2a);border-bottom:1px solid #a01010;"></div>
<div class="t" style="top:278.38px;font-size:8.6px;color:#ffe8e8;left:351.70000000000005px;width:400px;text-align:center;transform:scaleX(0.75);transform-origin:50% 0;">SELL</div>
<div class="a" style="left:567.9000000000001px;top:276.0px;width:13px;height:12.5px;background:#dcdcdc;border:1px solid #a8a8a8;border-right:none;"></div>
<svg class="a" style="left:572.2px;top:280.8px;" width="6" height="4" viewBox="0 0 6 4"><path d="M0 0h5l-2.5 3z" fill="#222"/></svg>
<div class="a" style="left:580.7px;top:276.0px;width:36.5px;height:12.5px;background:#ffffff;border-top:1px solid #a8a8a8;border-bottom:1px solid #a8a8a8;"></div>
<div class="t" style="top:278.10px;font-size:8.4px;color:#222;right:284.29999999999995px;transform:scaleX(0.9);transform-origin:100% 0;">0.01</div>
<div class="a" style="left:617.1px;top:276.0px;width:12.3px;height:12.5px;background:#dcdcdc;border:1px solid #a8a8a8;border-left:none;"></div>
<svg class="a" style="left:620.7px;top:280.3px;" width="6" height="4" viewBox="0 0 6 4"><path d="M0 3h5L2.5 0z" fill="#222"/></svg>
<div class="a" style="left:631.2px;top:276.0px;width:26.8px;height:13.7px;background:linear-gradient(#f04a4a,#dc2a2a);border-bottom:1px solid #a01010;"></div>
<div class="t" style="top:278.38px;font-size:8.6px;color:#ffe8e8;left:444.70000000000005px;width:400px;text-align:center;transform:scaleX(0.75);transform-origin:50% 0;">BUY</div>
<div class="a" style="left:538.2px;top:290.40000000000003px;width:60px;height:21.7px;background:linear-gradient(#e83838,#b80e0e);"></div>
<div class="a" style="left:600.4000000000001px;top:290.40000000000003px;width:57.6px;height:21.7px;background:linear-gradient(#e83838,#b80e0e);"></div>
<div class="t" style="top:302.81px;font-size:8.2px;color:#fff;font-weight:bold;right:334.29999999999995px;transform:scaleX(0.9);transform-origin:100% 0;">108</div>
<div class="t" style="top:291.80px;font-size:20px;color:#fff;left:568.7px;transform:scaleX(0.9);transform-origin:0 0;">86</div>
<div class="t" style="top:302.81px;font-size:8.2px;color:#fff;font-weight:bold;right:272.0px;transform:scaleX(0.9);transform-origin:100% 0;">108</div>
<div class="t" style="top:291.80px;font-size:20px;color:#fff;left:629.9000000000001px;transform:scaleX(0.9);transform-origin:0 0;">86</div>
<div class="a" style="left:161px;top:425px;width:737px;height:16px;background:#f0f0f0;"></div>
<div class="a" style="left:161px;top:425px;width:737px;height:1px;background:#c8c8c8;"></div>
<div class="a" style="left:161px;top:426px;width:56.5px;height:12px;background:#e8e8e8;border-right:1px solid #c0c0c0;"></div>
<div class="t" style="top:428.52px;font-size:8px;color:#777;left:169.5px;transform:scaleX(0.9);transform-origin:0 0;">EURUSD,H1</div>
<div class="a" style="left:217.5px;top:425.5px;width:54px;height:12.5px;background:#ffffff;border:1px solid #6a6a6a;border-top:none;"></div>
<div class="t" style="top:428.52px;font-size:8px;color:#111;left:223.5px;transform:scaleX(0.9);transform-origin:0 0;">USDCHF,H1</div>
<div class="t" style="top:428.52px;font-size:8px;color:#777;left:278px;transform:scaleX(0.9);transform-origin:0 0;">GBPUSD,H1</div>
<div class="a" style="left:326px;top:427px;width:1px;height:9px;background:#999;"></div>
<div class="t" style="top:428.52px;font-size:8px;color:#777;left:333.5px;transform:scaleX(0.9);transform-origin:0 0;">USDJPY,H1</div>
<svg class="a" style="left:873px;top:428px;" width="6" height="8" viewBox="0 0 6 8"><path d="M4.5 1L1.5 4l3 3" stroke="#aaa" fill="none"/></svg>
<svg class="a" style="left:887px;top:428px;" width="6" height="8" viewBox="0 0 6 8"><path d="M1.5 1l3 3-3 3" stroke="#aaa" fill="none"/></svg>
<div class="a" style="left:161px;top:440px;width:737px;height:1px;background:#a0a0a0;"></div>
<div class="a" style="left:1px;top:441px;width:897px;height:99px;background:#f0f0f0;"></div>
<div class="a" style="left:1px;top:440px;width:897px;height:1px;background:#a0a0a0;"></div>
<div class="a" style="left:1px;top:441px;width:10px;height:98px;background:#dfe6ee;"></div>
<svg class="a" style="left:3px;top:442.5px;" width="5" height="5" viewBox="0 0 5 5"><path d="M.5 .5l4 4M4.5 .5l-4 4" stroke="#222" stroke-width="1"/></svg>
<div class="t" style="left:0.5px;top:539px;font-size:8.2px;color:#2a2a2a;transform:rotate(-90deg) scaleX(.93);transform-origin:0 0">Инструменты</div>
<div class="a" style="left:11px;top:441px;width:886px;height:84px;background:#ffffff;"></div>
<div class="a" style="left:108px;top:441px;width:1px;height:14px;background:#e6e6e6;"></div>
<div class="a" style="left:175.5px;top:441px;width:1px;height:14px;background:#e6e6e6;"></div>
<div class="a" style="left:266px;top:441px;width:1px;height:14px;background:#e6e6e6;"></div>
<div class="a" style="left:340.5px;top:441px;width:1px;height:14px;background:#e6e6e6;"></div>
<div class="a" style="left:415px;top:441px;width:1px;height:14px;background:#e6e6e6;"></div>
<div class="a" style="left:489.5px;top:441px;width:1px;height:14px;background:#e6e6e6;"></div>
<div class="a" style="left:564px;top:441px;width:1px;height:14px;background:#e6e6e6;"></div>
<div class="a" style="left:639.6px;top:441px;width:1px;height:14px;background:#e6e6e6;"></div>
<div class="a" style="left:715.6px;top:441px;width:1px;height:14px;background:#e6e6e6;"></div>
<div class="a" style="left:790.3px;top:441px;width:1px;height:14px;background:#e6e6e6;"></div>
<div class="t" style="top:445.37px;font-size:8.8px;color:#222;left:15px;transform:scaleX(0.86);transform-origin:0 0;">Символ</div>
<div class="t" style="top:445.37px;font-size:8.8px;color:#222;left:111.5px;transform:scaleX(0.86);transform-origin:0 0;">Тикет</div>
<div class="t" style="top:445.37px;font-size:8.8px;color:#222;right:638.5px;transform:scaleX(0.86);transform-origin:100% 0;">Время</div>
<div class="t" style="top:445.37px;font-size:8.8px;color:#222;right:563px;transform:scaleX(0.86);transform-origin:100% 0;">Тип</div>
<div class="t" style="top:445.37px;font-size:8.8px;color:#222;right:488.5px;transform:scaleX(0.86);transform-origin:100% 0;">Объем</div>
<div class="t" style="top:445.37px;font-size:8.8px;color:#222;right:414px;transform:scaleX(0.86);transform-origin:100% 0;">Цена</div>
<div class="t" style="top:445.37px;font-size:8.8px;color:#222;right:338.5px;transform:scaleX(0.86);transform-origin:100% 0;">S / L</div>
<div class="t" style="top:445.37px;font-size:8.8px;color:#222;right:263px;transform:scaleX(0.86);transform-origin:100% 0;">T / P</div>
<div class="t" style="top:445.37px;font-size:8.8px;color:#222;right:188px;transform:scaleX(0.86);transform-origin:100% 0;">Цена</div>
<div class="t" style="top:445.37px;font-size:8.8px;color:#222;right:114px;transform:scaleX(0.86);transform-origin:100% 0;">Своп</div>
<div class="t" style="top:445.37px;font-size:8.8px;color:#222;right:7.5px;transform:scaleX(0.86);transform-origin:100% 0;">Прибыль</div>
<div class="a" style="left:11px;top:455.5px;width:886px;height:1px;background:#e4e4e4;"></div>
<div class="a" style="left:108px;top:455.5px;width:1px;height:13.5px;background:#e6e6e6;"></div>
<div class="a" style="left:175.5px;top:455.5px;width:1px;height:13.5px;background:#e6e6e6;"></div>
<div class="a" style="left:266px;top:455.5px;width:1px;height:13.5px;background:#e6e6e6;"></div>
<div class="a" style="left:340.5px;top:455.5px;width:1px;height:13.5px;background:#e6e6e6;"></div>
<div class="a" style="left:415px;top:455.5px;width:1px;height:13.5px;background:#e6e6e6;"></div>
<div class="a" style="left:489.5px;top:455.5px;width:1px;height:13.5px;background:#e6e6e6;"></div>
<div class="a" style="left:564px;top:455.5px;width:1px;height:13.5px;background:#e6e6e6;"></div>
<div class="a" style="left:639.6px;top:455.5px;width:1px;height:13.5px;background:#e6e6e6;"></div>
<div class="a" style="left:715.6px;top:455.5px;width:1px;height:13.5px;background:#e6e6e6;"></div>
<div class="a" style="left:790.3px;top:455.5px;width:1px;height:13.5px;background:#e6e6e6;"></div>
<svg class="a" style="left:12.5px;top:457.5px;" width="9" height="10" viewBox="0 0 9 10"><path d="M0.5 0.5h6l2 2v7h-8z" fill="#e4f0fb" stroke="#3a8ad8"/><path d="M2 3.5h4M2 5.5h4M2 7.5h3" stroke="#3a8ad8" stroke-width=".8"/></svg>
<div class="t" style="top:458.37px;font-size:8.8px;color:#222;left:25px;transform:scaleX(0.875);transform-origin:0 0;">usdchf</div>
<div class="t" style="top:458.37px;font-size:8.8px;color:#222;left:111px;transform:scaleX(0.8);transform-origin:0 0;">11391950</div>
<div class="t" style="top:458.37px;font-size:8.8px;color:#222;right:636.5px;transform:scaleX(0.795);transform-origin:100% 0;">2020.02.03 17:31:25</div>
<div class="t" style="top:458.37px;font-size:8.8px;color:#222;right:562.5px;transform:scaleX(0.875);transform-origin:100% 0;">buy</div>
<div class="t" style="top:458.37px;font-size:8.8px;color:#222;right:488px;transform:scaleX(0.82);transform-origin:100% 0;">99.00</div>
<div class="t" style="top:458.37px;font-size:8.8px;color:#222;right:413.5px;transform:scaleX(0.82);transform-origin:100% 0;">0.9668</div>
<div class="t" style="top:458.37px;font-size:8.8px;color:#222;right:338px;transform:scaleX(0.82);transform-origin:100% 0;">0.0000</div>
<div class="t" style="top:458.37px;font-size:8.8px;color:#222;right:262.5px;transform:scaleX(0.82);transform-origin:100% 0;">0.0000</div>
<div class="t" style="top:458.37px;font-size:8.8px;color:#222;right:187.5px;transform:scaleX(0.82);transform-origin:100% 0;">0.9672</div>
<div class="t" style="top:458.37px;font-size:8.8px;color:#222;right:113.5px;transform:scaleX(0.82);transform-origin:100% 0;">31.77</div>
<div class="t" style="top:458.37px;font-size:8.8px;color:#222;right:18px;transform:scaleX(0.82);transform-origin:100% 0;">409.43</div>
<svg class="a" style="left:887.5px;top:460.0px;" width="5" height="5" viewBox="0 0 5 5"><path d="M0.5 0.5l4 4M4.5 0.5l-4 4" stroke="#8a8a8a" stroke-width="1"/></svg>
<div class="a" style="left:11px;top:469.0px;width:886px;height:13.5px;background:#ececec;"></div>
<div class="a" style="left:11px;top:469.0px;width:886px;height:1px;background:#e4e4e4;"></div>
<div class="a" style="left:108px;top:469.0px;width:1px;height:13.5px;background:#e6e6e6;"></div>
<div class="a" style="left:175.5px;top:469.0px;width:1px;height:13.5px;background:#e6e6e6;"></div>
<div class="a" style="left:266px;top:469.0px;width:1px;height:13.5px;background:#e6e6e6;"></div>
<div class="a" style="left:340.5px;top:469.0px;width:1px;height:13.5px;background:#e6e6e6;"></div>
<div class="a" style="left:415px;top:469.0px;width:1px;height:13.5px;background:#e6e6e6;"></div>
<div class="a" style="left:489.5px;top:469.0px;width:1px;height:13.5px;background:#e6e6e6;"></div>
<div class="a" style="left:564px;top:469.0px;width:1px;height:13.5px;background:#e6e6e6;"></div>
<div class="a" style="left:639.6px;top:469.0px;width:1px;height:13.5px;background:#e6e6e6;"></div>
<div class="a" style="left:715.6px;top:469.0px;width:1px;height:13.5px;background:#e6e6e6;"></div>
<div class="a" style="left:790.3px;top:469.0px;width:1px;height:13.5px;background:#e6e6e6;"></div>
<svg class="a" style="left:12.5px;top:471.0px;" width="9" height="10" viewBox="0 0 9 10"><path d="M0.5 0.5h6l2 2v7h-8z" fill="#e4f0fb" stroke="#3a8ad8"/><path d="M2 3.5h4M2 5.5h4M2 7.5h3" stroke="#3a8ad8" stroke-width=".8"/></svg>
<div class="t" style="top:471.87px;font-size:8.8px;color:#222;left:25px;transform:scaleX(0.875);transform-origin:0 0;">gbpusd</div>
<div class="t" style="top:471.87px;font-size:8.8px;color:#222;left:111px;transform:scaleX(0.8);transform-origin:0 0;">11392292</div>
<div class="t" style="top:471.87px;font-size:8.8px;color:#222;right:636.5px;transform:scaleX(0.795);transform-origin:100% 0;">2020.02.04 07:58:48</div>
<div class="t" style="top:471.87px;font-size:8.8px;color:#222;right:562.5px;transform:scaleX(0.875);transform-origin:100% 0;">buy</div>
<div class="t" style="top:471.87px;font-size:8.8px;color:#222;right:488px;transform:scaleX(0.82);transform-origin:100% 0;">3.00</div>
<div class="t" style="top:471.87px;font-size:8.8px;color:#222;right:413.5px;transform:scaleX(0.82);transform-origin:100% 0;">1.3018</div>
<div class="t" style="top:471.87px;font-size:8.8px;color:#222;right:338px;transform:scaleX(0.82);transform-origin:100% 0;">0.0000</div>
<div class="t" style="top:471.87px;font-size:8.8px;color:#222;right:262.5px;transform:scaleX(0.82);transform-origin:100% 0;">0.0000</div>
<div class="t" style="top:471.87px;font-size:8.8px;color:#222;right:187.5px;transform:scaleX(0.82);transform-origin:100% 0;">1.3014</div>
<div class="t" style="top:471.87px;font-size:8.8px;color:#222;right:113.5px;transform:scaleX(0.82);transform-origin:100% 0;">0.00</div>
<div class="t" style="top:471.87px;font-size:8.8px;color:#222;right:18px;transform:scaleX(0.82);transform-origin:100% 0;">-12.00</div>
<svg class="a" style="left:887.5px;top:473.5px;" width="5" height="5" viewBox="0 0 5 5"><path d="M0.5 0.5l4 4M4.5 0.5l-4 4" stroke="#8a8a8a" stroke-width="1"/></svg>
<div class="a" style="left:11px;top:482.5px;width:886px;height:1px;background:#e4e4e4;"></div>
<div class="a" style="left:108px;top:482.5px;width:1px;height:13.5px;background:#e6e6e6;"></div>
<div class="a" style="left:175.5px;top:482.5px;width:1px;height:13.5px;background:#e6e6e6;"></div>
<div class="a" style="left:266px;top:482.5px;width:1px;height:13.5px;background:#e6e6e6;"></div>
<div class="a" style="left:340.5px;top:482.5px;width:1px;height:13.5px;background:#e6e6e6;"></div>
<div class="a" style="left:415px;top:482.5px;width:1px;height:13.5px;background:#e6e6e6;"></div>
<div class="a" style="left:489.5px;top:482.5px;width:1px;height:13.5px;background:#e6e6e6;"></div>
<div class="a" style="left:564px;top:482.5px;width:1px;height:13.5px;background:#e6e6e6;"></div>
<div class="a" style="left:639.6px;top:482.5px;width:1px;height:13.5px;background:#e6e6e6;"></div>
<div class="a" style="left:715.6px;top:482.5px;width:1px;height:13.5px;background:#e6e6e6;"></div>
<div class="a" style="left:790.3px;top:482.5px;width:1px;height:13.5px;background:#e6e6e6;"></div>
<svg class="a" style="left:12.5px;top:484.5px;" width="9" height="10" viewBox="0 0 9 10"><path d="M0.5 0.5h6l2 2v7h-8z" fill="#fde8e0" stroke="#e8603a"/><path d="M2 3.5h4M2 5.5h4M2 7.5h3" stroke="#e8603a" stroke-width=".8"/></svg>
<div class="t" style="top:485.37px;font-size:8.8px;color:#222;left:25px;transform:scaleX(0.875);transform-origin:0 0;">usdchf</div>
<div class="t" style="top:485.37px;font-size:8.8px;color:#222;left:111px;transform:scaleX(0.8);transform-origin:0 0;">11392293</div>
<div class="t" style="top:485.37px;font-size:8.8px;color:#222;right:636.5px;transform:scaleX(0.795);transform-origin:100% 0;">2020.02.04 07:59:07</div>
<div class="t" style="top:485.37px;font-size:8.8px;color:#222;right:562.5px;transform:scaleX(0.875);transform-origin:100% 0;">sell</div>
<div class="t" style="top:485.37px;font-size:8.8px;color:#222;right:488px;transform:scaleX(0.82);transform-origin:100% 0;">5.00</div>
<div class="t" style="top:485.37px;font-size:8.8px;color:#222;right:413.5px;transform:scaleX(0.82);transform-origin:100% 0;">0.9672</div>
<div class="t" style="top:485.37px;font-size:8.8px;color:#222;right:338px;transform:scaleX(0.82);transform-origin:100% 0;">0.0000</div>
<div class="t" style="top:485.37px;font-size:8.8px;color:#222;right:262.5px;transform:scaleX(0.82);transform-origin:100% 0;">0.0000</div>
<div class="t" style="top:485.37px;font-size:8.8px;color:#222;right:187.5px;transform:scaleX(0.82);transform-origin:100% 0;">0.9675</div>
<div class="t" style="top:485.37px;font-size:8.8px;color:#222;right:113.5px;transform:scaleX(0.82);transform-origin:100% 0;">0.00</div>
<div class="t" style="top:485.37px;font-size:8.8px;color:#222;right:18px;transform:scaleX(0.82);transform-origin:100% 0;">-15.50</div>
<svg class="a" style="left:887.5px;top:487.0px;" width="5" height="5" viewBox="0 0 5 5"><path d="M0.5 0.5l4 4M4.5 0.5l-4 4" stroke="#8a8a8a" stroke-width="1"/></svg>
<div class="a" style="left:11px;top:496px;width:886px;height:13.5px;background:#c8c8c8;"></div>
<svg class="a" style="left:13px;top:498.5px;" width="9" height="9" viewBox="0 0 9 9"><circle cx="4.5" cy="4.5" r="4" fill="#fff" stroke="#333" stroke-width=".9"/><path d="M2.3 4.5h4.4M4.5 2.3v4.4" stroke="#333" stroke-width=".9"/></svg>
<div class="t" style="top:498.58px;font-size:8.6px;color:#111;font-weight:bold;left:25px;transform:scaleX(0.866);transform-origin:0 0;">Баланс: 10 000.00 USD&nbsp; Средства: 10 413.70&nbsp; Маржа: 10 290.54&nbsp; Свободная маржа: 123.16&nbsp; Уровень маржи: 101.20 %</div>
<div class="t" style="top:498.58px;font-size:8.6px;color:#111;font-weight:bold;right:18.5px;transform:scaleX(0.87);transform-origin:100% 0;">413.70</div>
<div class="a" style="left:11px;top:524.5px;width:886px;height:15px;background:#f0f0f0;"></div>
<div class="a" style="left:11px;top:524.5px;width:886px;height:1px;background:#9a9a9a;"></div>
<div class="a" style="left:12px;top:524.5px;width:46px;height:14px;background:#ffffff;border:1px solid #6a6a6a;border-top:none;"></div>
<div class="t" style="top:528.37px;font-size:8.8px;color:#222;font-weight:bold;left:19px;transform:scaleX(0.815);transform-origin:0 0;">Торговля</div>
<div class="t" style="top:528.37px;font-size:8.8px;color:#777;left:65px;transform:scaleX(0.85);transform-origin:0 0;">Активы</div>
<div class="t" style="top:528.37px;font-size:8.8px;color:#777;left:104px;transform:scaleX(0.85);transform-origin:0 0;">История</div>
<div class="t" style="top:528.37px;font-size:8.8px;color:#777;left:147px;transform:scaleX(0.85);transform-origin:0 0;">Новости</div>
<div class="t" style="top:528.37px;font-size:8.8px;color:#777;left:190px;transform:scaleX(0.85);transform-origin:0 0;">Почта</div>
<div class="t" style="top:528.37px;font-size:8.8px;color:#777;left:229.5px;transform:scaleX(0.85);transform-origin:0 0;">Календарь</div>
<div class="t" style="top:528.37px;font-size:8.8px;color:#777;left:280px;transform:scaleX(0.85);transform-origin:0 0;">Компания</div>
<div class="t" style="top:528.37px;font-size:8.8px;color:#777;left:329px;transform:scaleX(0.85);transform-origin:0 0;">Маркет</div>
<div class="t" style="top:528.37px;font-size:8.8px;color:#777;left:377px;transform:scaleX(0.85);transform-origin:0 0;">Алерты</div>
<div class="t" style="top:528.37px;font-size:8.8px;color:#777;left:416px;transform:scaleX(0.85);transform-origin:0 0;">Сигналы</div>
<div class="t" style="top:528.37px;font-size:8.8px;color:#777;left:460px;transform:scaleX(0.85);transform-origin:0 0;">Статьи</div>
<div class="t" style="top:528.37px;font-size:8.8px;color:#777;left:508px;transform:scaleX(0.85);transform-origin:0 0;">Библиотека</div>
<div class="t" style="top:528.37px;font-size:8.8px;color:#777;left:577px;transform:scaleX(0.85);transform-origin:0 0;">VPS</div>
<div class="t" style="top:528.37px;font-size:8.8px;color:#777;left:602px;transform:scaleX(0.85);transform-origin:0 0;">Эксперты</div>
<div class="t" style="top:528.37px;font-size:8.8px;color:#777;left:650px;transform:scaleX(0.85);transform-origin:0 0;">Журнал</div>
<div class="a" style="left:98px;top:527.5px;width:1px;height:9px;background:#777;"></div>
<div class="a" style="left:141px;top:527.5px;width:1px;height:9px;background:#777;"></div>
<div class="a" style="left:184px;top:527.5px;width:1px;height:9px;background:#777;"></div>
<div class="a" style="left:223.5px;top:527.5px;width:1px;height:9px;background:#777;"></div>
<div class="a" style="left:274px;top:527.5px;width:1px;height:9px;background:#777;"></div>
<div class="a" style="left:323.5px;top:527.5px;width:1px;height:9px;background:#777;"></div>
<div class="a" style="left:370px;top:527.5px;width:1px;height:9px;background:#777;"></div>
<div class="a" style="left:410px;top:527.5px;width:1px;height:9px;background:#777;"></div>
<div class="a" style="left:455px;top:527.5px;width:1px;height:9px;background:#777;"></div>
<div class="a" style="left:503px;top:527.5px;width:1px;height:9px;background:#777;"></div>
<div class="a" style="left:572px;top:527.5px;width:1px;height:9px;background:#777;"></div>
<div class="a" style="left:597px;top:527.5px;width:1px;height:9px;background:#777;"></div>
<div class="a" style="left:643.6px;top:527.5px;width:1px;height:9px;background:#777;"></div>
<div class="t" style="top:531.75px;font-size:5.8px;color:#e02020;font-weight:bold;left:211.77453125px;">7</div>
<div class="t" style="top:531.75px;font-size:5.8px;color:#e02020;font-weight:bold;left:355.33265625px;">26</div>
<div class="t" style="top:531.75px;font-size:5.8px;color:#e02020;font-weight:bold;left:485.2442578125px;">678</div>
<div class="t" style="top:531.75px;font-size:5.8px;color:#e02020;font-weight:bold;left:549.6783437500001px;">7202</div>
<div class="t" style="top:528.37px;font-size:8.8px;color:#222;font-weight:bold;right:12px;transform:scaleX(0.815);transform-origin:100% 0;">Тестер стратегий</div>
<div class="a" style="left:1px;top:539px;width:897px;height:19px;background:#f0f0f0;"></div>
<div class="a" style="left:1px;top:539px;width:897px;height:1px;background:#a8a8a8;"></div>
<div class="t" style="top:546.57px;font-size:8.8px;color:#111;left:3px;transform:scaleX(0.857);transform-origin:0 0;">Для вызова справки нажмите F1</div>
<div class="a" style="left:451px;top:541px;width:1px;height:16px;background:#d0d0d0;"></div>
<div class="a" style="left:534px;top:541px;width:1px;height:16px;background:#d0d0d0;"></div>
<div class="a" style="left:597.8px;top:541px;width:1px;height:16px;background:#d0d0d0;"></div>
<div class="a" style="left:643.5px;top:541px;width:1px;height:16px;background:#d0d0d0;"></div>
<div class="a" style="left:689.5px;top:541px;width:1px;height:16px;background:#d0d0d0;"></div>
<div class="a" style="left:733.5px;top:541px;width:1px;height:16px;background:#d0d0d0;"></div>
<div class="a" style="left:778px;top:541px;width:1px;height:16px;background:#d0d0d0;"></div>
<div class="a" style="left:822px;top:541px;width:1px;height:16px;background:#d0d0d0;"></div>
<div class="t" style="top:546.57px;font-size:8.8px;color:#111;left:456px;transform:scaleX(0.9);transform-origin:0 0;">Default</div>
<svg class="a" style="left:825px;top:545px;" width="10" height="9" viewBox="0 0 10 9"><rect x="0" y="7" width="1.6" height="2" fill="#2aa52a"/><rect x="2" y="5.5" width="1.6" height="3.5" fill="#2aa52a"/><rect x="4" y="4" width="1.6" height="5" fill="#2aa52a"/><rect x="6" y="2.5" width="1.6" height="6.5" fill="#2aa52a"/><rect x="8" y="1" width="1.6" height="8" fill="#2aa52a"/></svg>
<div class="t" style="top:546.57px;font-size:8.8px;color:#111;left:838px;transform:scaleX(0.85);transform-origin:0 0;">48.70 ms</div>
<div class="a" style="left:895px;top:551px;width:1px;height:1px;background:#999;"></div>
<div class="a" style="left:893px;top:553px;width:1px;height:1px;background:#999;"></div>
<div class="a" style="left:895px;top:553px;width:1px;height:1px;background:#999;"></div>
<div class="a" style="left:891px;top:555px;width:1px;height:1px;background:#999;"></div>
<div class="a" style="left:893px;top:555px;width:1px;height:1px;background:#999;"></div>
<div class="a" style="left:895px;top:555px;width:1px;height:1px;background:#999;"></div>
<div class="a" style="left:1px;top:557px;width:897px;height:1px;background:#5a5a5a;"></div>
<div class="a" style="left:301px;top:153.5px;width:298px;height:250px;background:#f0f0f0;border:1px solid #e4e4e4;"></div>
<div class="a" style="left:301px;top:153.5px;width:298px;height:19.5px;background:#ffffff;"></div>
<div class="t" style="top:159.92px;font-size:8px;color:#111;left:306.5px;transform:scaleX(0.95);transform-origin:0 0;">Ордер</div>
<div class="a" style="left:522px;top:162.6px;width:7px;height:1.2px;background:#555;"></div>
<div class="a" style="left:551px;top:159.5px;width:7px;height:6.5px;border:1px solid #c8c8c8;"></div>
<svg class="a" style="left:580px;top:159px;" width="7.5" height="7.5" viewBox="0 0 7.5 7.5"><path d="M0.5 0.5l6.5 6.5M7 0.5l-6.5 6.5" stroke="#222" stroke-width="1"/></svg>
<div class="t" style="top:182.73px;font-size:7.8px;color:#222;right:531px;transform:scaleX(0.9);transform-origin:100% 0;">Символ:</div>
<div class="a" style="left:373.8px;top:179.5px;width:208px;height:13.5px;background:#ffffff;border:1px solid #a8a8a8;"></div>
<div class="t" style="top:182.84px;font-size:7.6px;color:#111;left:377px;transform:scaleX(0.9);transform-origin:0 0;">USDCHF, US Dollar vs Swiss Franc</div>
<svg class="a" style="left:572px;top:183.5px;" width="8" height="5" viewBox="0 0 8 5"><path d="M0.5 0.5l3.5 3.5 3.5-3.5" stroke="#444" fill="none"/></svg>
<div class="t" style="top:201.23px;font-size:7.8px;color:#222;right:531px;transform:scaleX(0.9);transform-origin:100% 0;">Тип:</div>
<div class="a" style="left:373.8px;top:198px;width:208px;height:13.5px;background:#e5e5e5;border:1px solid #b0b0b0;"></div>
<div class="t" style="top:201.34px;font-size:7.6px;color:#111;left:377px;transform:scaleX(0.9);transform-origin:0 0;">Немедленное исполнение</div>
<svg class="a" style="left:572px;top:202px;" width="8" height="5" viewBox="0 0 8 5"><path d="M0.5 0.5l3.5 3.5 3.5-3.5" stroke="#444" fill="none"/></svg>
<div class="t" style="top:231.73px;font-size:7.8px;color:#222;right:531px;transform:scaleX(0.9);transform-origin:100% 0;">Объем:</div>
<div class="a" style="left:373.8px;top:228.5px;width:52.5px;height:13.5px;background:#ffffff;border:1px solid #a8a8a8;"></div>
<div class="t" style="top:231.84px;font-size:7.6px;color:#111;right:476px;transform:scaleX(0.92);transform-origin:100% 0;">1.00</div>
<div class="a" style="left:428.5px;top:228.7px;width:9px;height:13px;background:#e8e8e8;border:1px solid #c0c0c0;"></div>
<div class="a" style="left:429.5px;top:235.0px;width:7px;height:0.6px;background:#c0c0c0;"></div>
<svg class="a" style="left:430.5px;top:231.2px;" width="5" height="3" viewBox="0 0 5 3"><path d="M0 3h5L2.5 0z" fill="#333"/></svg>
<svg class="a" style="left:430.5px;top:236.7px;" width="5" height="3" viewBox="0 0 5 3"><path d="M0 0h5L2.5 3z" fill="#333"/></svg>
<div class="t" style="top:231.84px;font-size:7.6px;color:#111;left:442.5px;transform:scaleX(0.86);transform-origin:0 0;">10 000 USD</div>
<div class="t" style="top:249.73px;font-size:7.8px;color:#222;right:531px;transform:scaleX(0.9);transform-origin:100% 0;">Стоп Лосс:</div>
<div class="a" style="left:373.8px;top:246.5px;width:52.5px;height:13.5px;background:#ffffff;border:1px solid #a8a8a8;"></div>
<div class="t" style="top:249.84px;font-size:7.6px;color:#111;right:476px;transform:scaleX(0.92);transform-origin:100% 0;letter-spacing:.3px;">1.1264</div>
<div class="a" style="left:428.5px;top:246.7px;width:9px;height:13px;background:#e8e8e8;border:1px solid #c0c0c0;"></div>
<div class="a" style="left:429.5px;top:253.0px;width:7px;height:0.6px;background:#c0c0c0;"></div>
<svg class="a" style="left:430.5px;top:249.2px;" width="5" height="3" viewBox="0 0 5 3"><path d="M0 3h5L2.5 0z" fill="#333"/></svg>
<svg class="a" style="left:430.5px;top:254.7px;" width="5" height="3" viewBox="0 0 5 3"><path d="M0 0h5L2.5 3z" fill="#333"/></svg>
<div class="t" style="top:249.73px;font-size:7.8px;color:#222;right:385.5px;transform:scaleX(0.9);transform-origin:100% 0;">Тейк Профит:</div>
<div class="a" style="left:519.5px;top:246.5px;width:52.5px;height:13.5px;background:#ffffff;border:1px solid #a8a8a8;"></div>
<div class="t" style="top:249.84px;font-size:7.6px;color:#111;right:330.5px;transform:scaleX(0.92);transform-origin:100% 0;letter-spacing:.3px;">1.1265</div>
<div class="a" style="left:573.5px;top:246.7px;width:9px;height:13px;background:#e8e8e8;border:1px solid #c0c0c0;"></div>
<div class="a" style="left:574.5px;top:253.0px;width:7px;height:0.6px;background:#c0c0c0;"></div>
<svg class="a" style="left:575.5px;top:249.2px;" width="5" height="3" viewBox="0 0 5 3"><path d="M0 3h5L2.5 0z" fill="#333"/></svg>
<svg class="a" style="left:575.5px;top:254.7px;" width="5" height="3" viewBox="0 0 5 3"><path d="M0 0h5L2.5 3z" fill="#333"/></svg>
<div class="t" style="top:267.43px;font-size:7.8px;color:#222;right:531px;transform:scaleX(0.9);transform-origin:100% 0;">Комментарий:</div>
<div class="a" style="left:373.8px;top:264px;width:208px;height:13.5px;background:#ffffff;border:1px solid #4a90d8;"></div>
<div class="t" style="top:285.13px;font-size:7.8px;color:#222;right:531px;transform:scaleX(0.9);transform-origin:100% 0;">Отклонение:</div>
<div class="a" style="left:373.8px;top:282px;width:63px;height:13.5px;background:#ffffff;border:1px solid #a8a8a8;"></div>
<div class="t" style="top:285.24px;font-size:7.6px;color:#111;left:377px;">0</div>
<svg class="a" style="left:427px;top:286px;" width="8" height="5" viewBox="0 0 8 5"><path d="M0.5 0.5l3.5 3.5 3.5-3.5" stroke="#444" fill="none"/></svg>
<div class="t" style="top:312.61px;font-size:18.2px;color:#111;left:390.5px;transform:scaleX(0.925);transform-origin:0 0;">0.9672 / 0.9675</div>
<div class="a" style="left:315.8px;top:349.5px;width:125px;height:13.5px;background:linear-gradient(#f4a8a8,#e07272);border:1px solid #c05858;border-radius:1px;"></div>
<div class="t" style="top:352.84px;font-size:7.6px;color:#333;left:179px;width:400px;text-align:center;transform:scaleX(0.9);transform-origin:50% 0;">Sell</div>
<div class="a" style="left:456.8px;top:349.5px;width:125px;height:13.5px;background:linear-gradient(#b8cbef,#7f98cd);border:1px solid #6a84bc;border-radius:1px;"></div>
<div class="t" style="top:352.84px;font-size:7.6px;color:#333;left:319.5px;width:400px;text-align:center;transform:scaleX(0.9);transform-origin:50% 0;">Buy</div>
<div class="a" style="left:316.5px;top:369.5px;width:265.5px;height:13.5px;background:#e8e8e8;border:1px solid #bcbcbc;border-radius:1px;"></div>
</body></html>
